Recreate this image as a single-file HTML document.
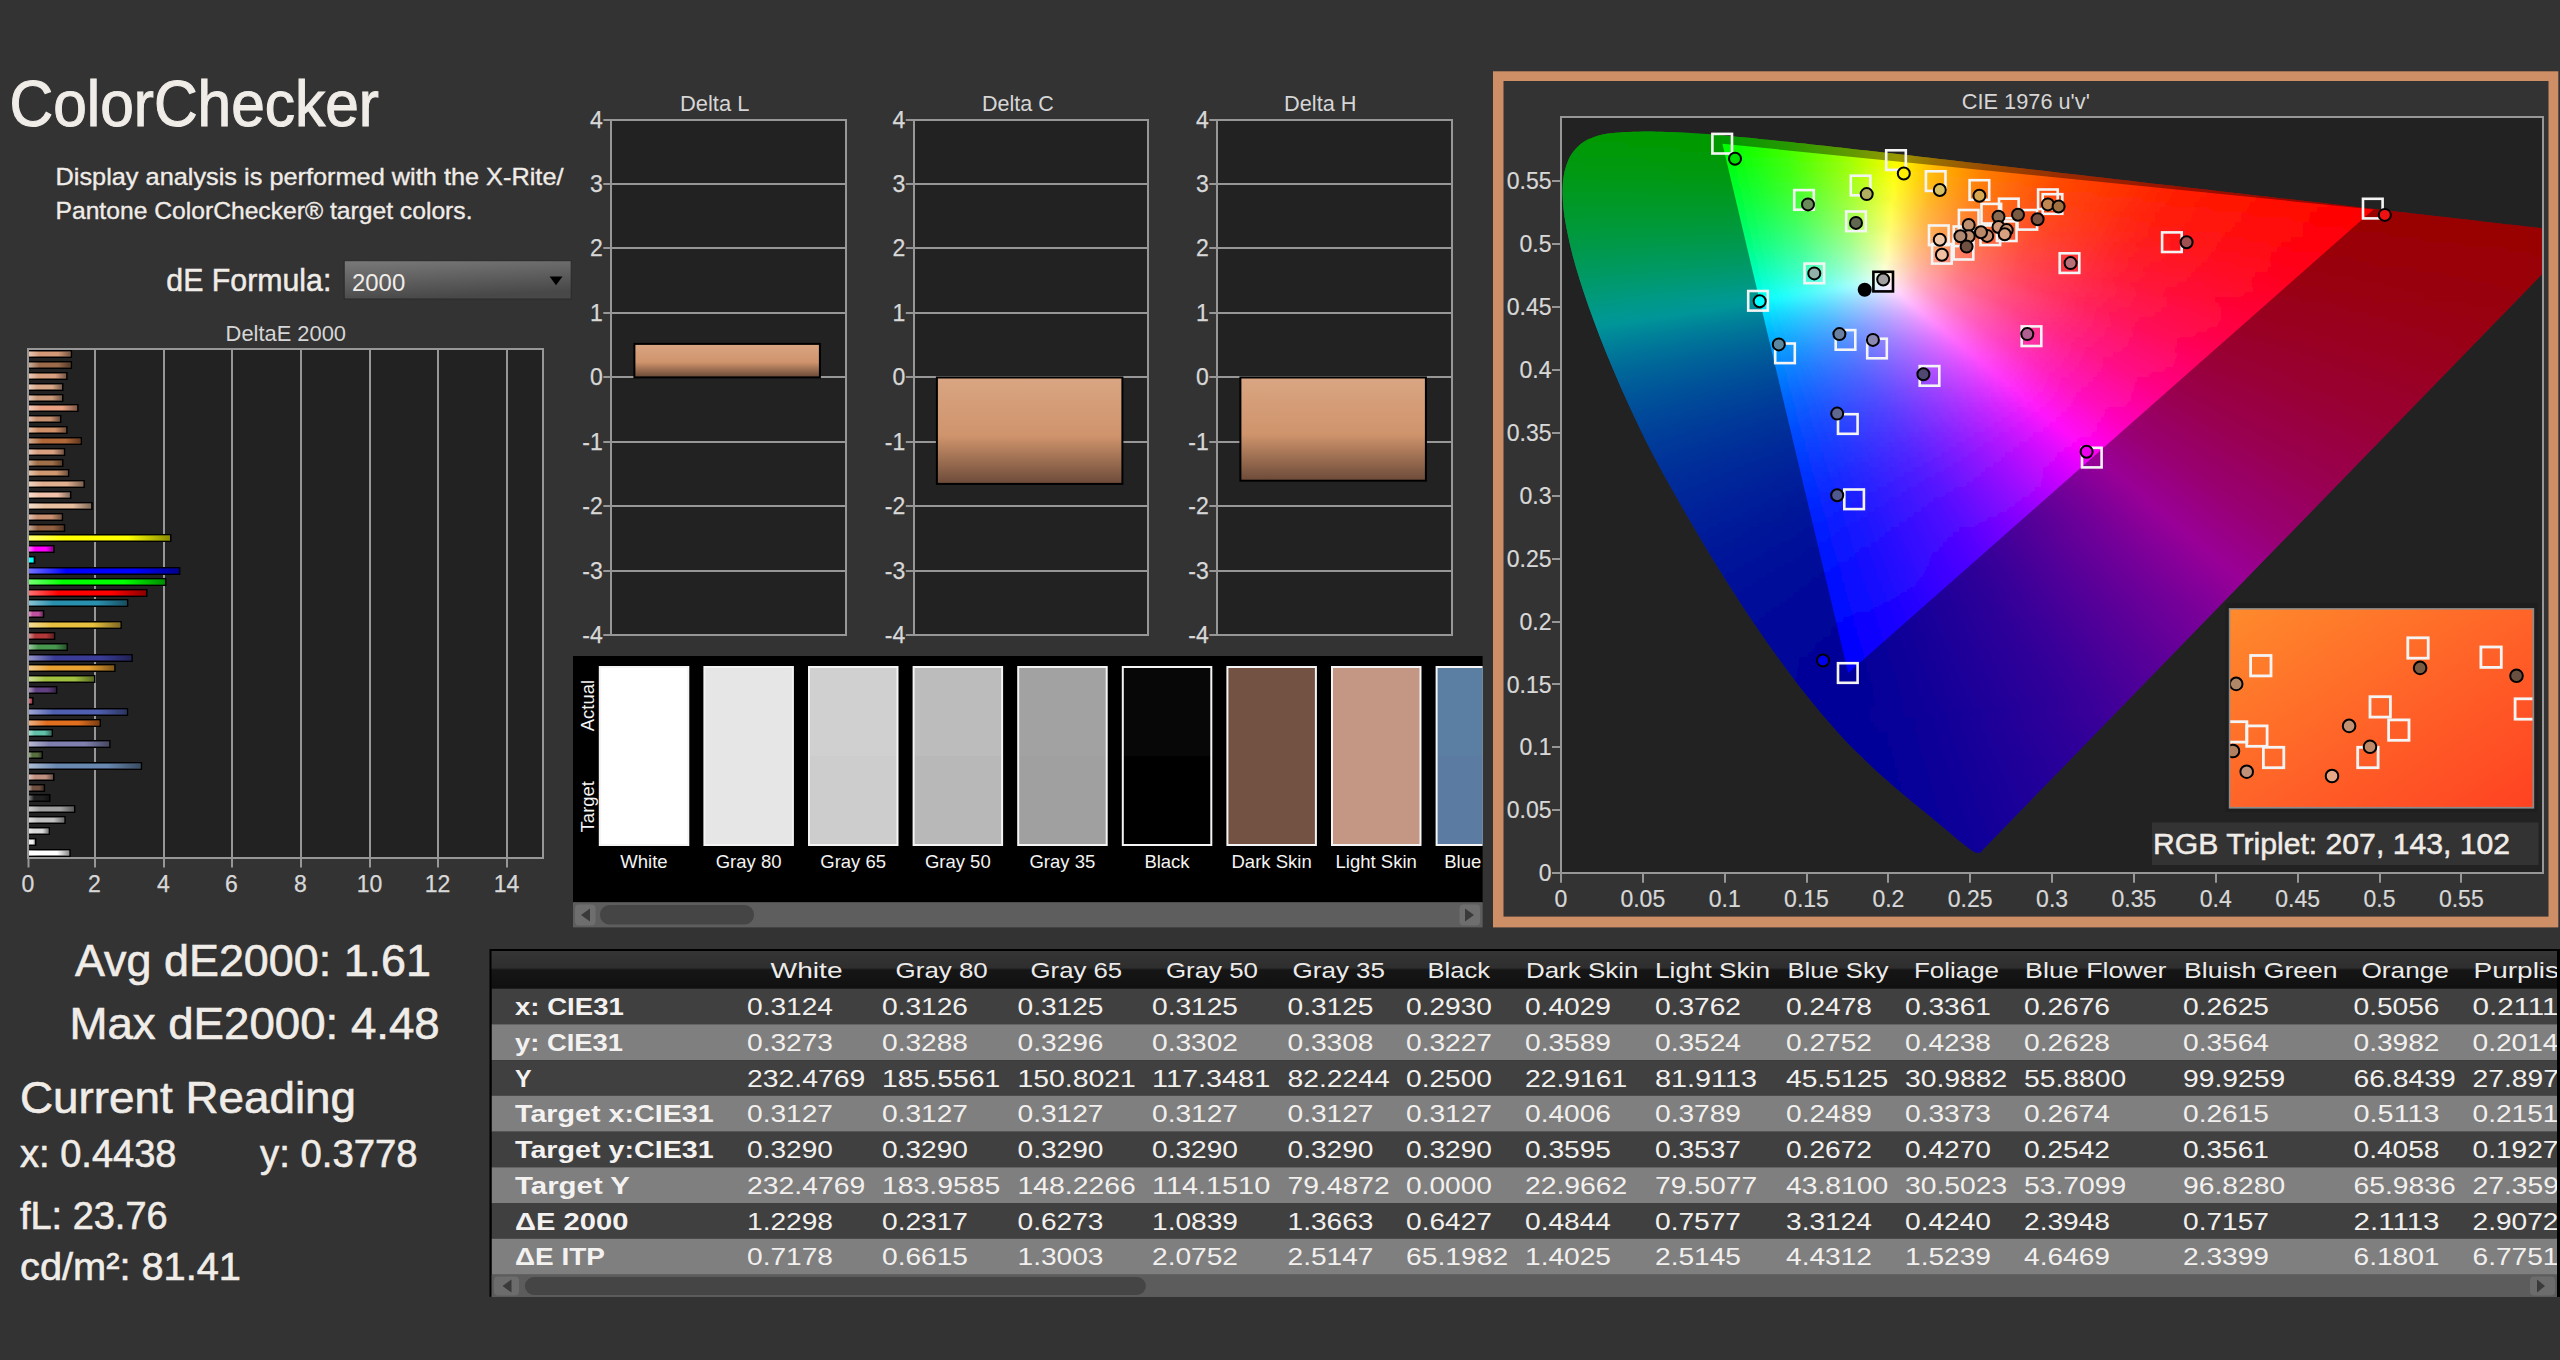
<!DOCTYPE html><html><head><meta charset="utf-8"><style>html,body{margin:0;padding:0;background:#333;overflow:hidden}svg{display:block}text{font-family:"Liberation Sans",sans-serif}</style></head><body>
<svg width="2560" height="1360" viewBox="0 0 2560 1360">
<defs>
<linearGradient id="dd" x1="0" y1="0" x2="0.3" y2="1"><stop offset="0" stop-color="#7a7a7a"/><stop offset="1" stop-color="#484848"/></linearGradient>
<linearGradient id="barv" x1="0" y1="0" x2="0" y2="1"><stop offset="0" stop-color="#d9a582"/><stop offset="0.55" stop-color="#cf946c"/><stop offset="1" stop-color="#6e4c3a"/></linearGradient>
<linearGradient id="hdr" x1="0" y1="0" x2="0" y2="1"><stop offset="0" stop-color="#353535"/><stop offset="0.45" stop-color="#2e2e2e"/><stop offset="0.5" stop-color="#161616"/><stop offset="1" stop-color="#101010"/></linearGradient>
</defs>
<rect x="0.0" y="0.0" width="2560.0" height="1360.0" fill="#333333"/>
<text x="9.5" y="125.6" font-size="64" fill="#f0ece8" textLength="369.5" lengthAdjust="spacingAndGlyphs" stroke="#f0ece8" stroke-width="1.1">ColorChecker</text>
<text x="55.5" y="185.0" font-size="24.5" fill="#f0ece8" textLength="508.0" lengthAdjust="spacingAndGlyphs" stroke="#f0ece8" stroke-width="0.35">Display analysis is performed with the X-Rite/</text>
<text x="55.5" y="218.6" font-size="24.5" fill="#f0ece8" textLength="417.0" lengthAdjust="spacingAndGlyphs" stroke="#f0ece8" stroke-width="0.35">Pantone ColorChecker® target colors.</text>
<text x="166.3" y="291.3" font-size="32" fill="#f0ece8" textLength="165.0" lengthAdjust="spacingAndGlyphs" stroke="#f0ece8" stroke-width="0.5">dE Formula:</text>
<rect x="344.2" y="260.7" width="227.0" height="38.3" fill="url(#dd)" stroke="#2a2a2a" stroke-width="1"/>
<text x="352.0" y="291.3" font-size="24.5" fill="#f0ece8" textLength="53.2" lengthAdjust="spacingAndGlyphs">2000</text>
<polygon points="549.6,276.6 562.5,276.6 556,285.2" fill="#000"/>
<text x="225.6" y="340.6" font-size="21.5" fill="#d6d6d6" textLength="120.4" lengthAdjust="spacingAndGlyphs">DeltaE 2000</text>
<rect x="28.5" y="349.0" width="514.2" height="509.0" fill="#222222"/>
<line x1="95.0" y1="349.0" x2="95.0" y2="858.0" stroke="#979797" stroke-width="2"/>
<line x1="164.0" y1="349.0" x2="164.0" y2="858.0" stroke="#979797" stroke-width="2"/>
<line x1="232.0" y1="349.0" x2="232.0" y2="858.0" stroke="#979797" stroke-width="2"/>
<line x1="301.0" y1="349.0" x2="301.0" y2="858.0" stroke="#979797" stroke-width="2"/>
<line x1="370.0" y1="349.0" x2="370.0" y2="858.0" stroke="#979797" stroke-width="2"/>
<line x1="438.0" y1="349.0" x2="438.0" y2="858.0" stroke="#979797" stroke-width="2"/>
<line x1="507.0" y1="349.0" x2="507.0" y2="858.0" stroke="#979797" stroke-width="2"/>
<line x1="28.5" y1="858.0" x2="28.5" y2="867.5" stroke="#979797" stroke-width="2"/>
<text x="28.0" y="891.9" font-size="23" text-anchor="middle" fill="#d8d8d8" stroke="#d8d8d8" stroke-width="0.25">0</text>
<line x1="95.0" y1="858.0" x2="95.0" y2="867.5" stroke="#979797" stroke-width="2"/>
<text x="94.5" y="891.9" font-size="23" text-anchor="middle" fill="#d8d8d8" stroke="#d8d8d8" stroke-width="0.25">2</text>
<line x1="164.0" y1="858.0" x2="164.0" y2="867.5" stroke="#979797" stroke-width="2"/>
<text x="163.5" y="891.9" font-size="23" text-anchor="middle" fill="#d8d8d8" stroke="#d8d8d8" stroke-width="0.25">4</text>
<line x1="232.0" y1="858.0" x2="232.0" y2="867.5" stroke="#979797" stroke-width="2"/>
<text x="231.5" y="891.9" font-size="23" text-anchor="middle" fill="#d8d8d8" stroke="#d8d8d8" stroke-width="0.25">6</text>
<line x1="301.0" y1="858.0" x2="301.0" y2="867.5" stroke="#979797" stroke-width="2"/>
<text x="300.5" y="891.9" font-size="23" text-anchor="middle" fill="#d8d8d8" stroke="#d8d8d8" stroke-width="0.25">8</text>
<line x1="370.0" y1="858.0" x2="370.0" y2="867.5" stroke="#979797" stroke-width="2"/>
<text x="369.5" y="891.9" font-size="23" text-anchor="middle" fill="#d8d8d8" stroke="#d8d8d8" stroke-width="0.25">10</text>
<line x1="438.0" y1="858.0" x2="438.0" y2="867.5" stroke="#979797" stroke-width="2"/>
<text x="437.5" y="891.9" font-size="23" text-anchor="middle" fill="#d8d8d8" stroke="#d8d8d8" stroke-width="0.25">12</text>
<line x1="507.0" y1="858.0" x2="507.0" y2="867.5" stroke="#979797" stroke-width="2"/>
<text x="506.5" y="891.9" font-size="23" text-anchor="middle" fill="#d8d8d8" stroke="#d8d8d8" stroke-width="0.25">14</text>
<linearGradient id="bsh" x1="0" y1="0" x2="1" y2="0"><stop offset="0" stop-color="#fff" stop-opacity="0.45"/><stop offset="0.25" stop-color="#fff" stop-opacity="0"/><stop offset="0.7" stop-color="#000" stop-opacity="0"/><stop offset="1" stop-color="#000" stop-opacity="0.45"/></linearGradient>
<rect x="28.5" y="350.0" width="43.6" height="8.0" fill="#000"/>
<rect x="29.0" y="351.5" width="41.6" height="5.0" fill="#d49a78"/>
<rect x="29.0" y="351.5" width="41.6" height="5.0" fill="url(#bsh)"/>
<rect x="28.5" y="361.0" width="43.6" height="8.0" fill="#000"/>
<rect x="29.0" y="362.5" width="41.6" height="5.0" fill="#9a6a4a"/>
<rect x="29.0" y="362.5" width="41.6" height="5.0" fill="url(#bsh)"/>
<rect x="28.5" y="372.0" width="39.1" height="8.0" fill="#000"/>
<rect x="29.0" y="373.5" width="37.1" height="5.0" fill="#d8a080"/>
<rect x="29.0" y="373.5" width="37.1" height="5.0" fill="url(#bsh)"/>
<rect x="28.5" y="383.0" width="35.0" height="8.0" fill="#000"/>
<rect x="29.0" y="384.5" width="33.0" height="5.0" fill="#d8a888"/>
<rect x="29.0" y="384.5" width="33.0" height="5.0" fill="url(#bsh)"/>
<rect x="28.5" y="394.0" width="35.0" height="8.0" fill="#000"/>
<rect x="29.0" y="395.5" width="33.0" height="5.0" fill="#c89878"/>
<rect x="29.0" y="395.5" width="33.0" height="5.0" fill="url(#bsh)"/>
<rect x="28.5" y="404.0" width="50.1" height="8.0" fill="#000"/>
<rect x="29.0" y="405.5" width="48.1" height="5.0" fill="#e8a080"/>
<rect x="29.0" y="405.5" width="48.1" height="5.0" fill="url(#bsh)"/>
<rect x="28.5" y="415.0" width="32.9" height="8.0" fill="#000"/>
<rect x="29.0" y="416.5" width="30.9" height="5.0" fill="#c89070"/>
<rect x="29.0" y="416.5" width="30.9" height="5.0" fill="url(#bsh)"/>
<rect x="28.5" y="426.0" width="39.1" height="8.0" fill="#000"/>
<rect x="29.0" y="427.5" width="37.1" height="5.0" fill="#d09068"/>
<rect x="29.0" y="427.5" width="37.1" height="5.0" fill="url(#bsh)"/>
<rect x="28.5" y="437.0" width="53.5" height="8.0" fill="#000"/>
<rect x="29.0" y="438.5" width="51.5" height="5.0" fill="#b06838"/>
<rect x="29.0" y="438.5" width="51.5" height="5.0" fill="url(#bsh)"/>
<rect x="28.5" y="448.0" width="36.7" height="8.0" fill="#000"/>
<rect x="29.0" y="449.5" width="34.7" height="5.0" fill="#d8a080"/>
<rect x="29.0" y="449.5" width="34.7" height="5.0" fill="url(#bsh)"/>
<rect x="28.5" y="459.0" width="35.0" height="8.0" fill="#000"/>
<rect x="29.0" y="460.5" width="33.0" height="5.0" fill="#a07048"/>
<rect x="29.0" y="460.5" width="33.0" height="5.0" fill="url(#bsh)"/>
<rect x="28.5" y="469.0" width="40.8" height="8.0" fill="#000"/>
<rect x="29.0" y="470.5" width="38.8" height="5.0" fill="#d09870"/>
<rect x="29.0" y="470.5" width="38.8" height="5.0" fill="url(#bsh)"/>
<rect x="28.5" y="480.0" width="56.3" height="8.0" fill="#000"/>
<rect x="29.0" y="481.5" width="54.3" height="5.0" fill="#e0b090"/>
<rect x="29.0" y="481.5" width="54.3" height="5.0" fill="url(#bsh)"/>
<rect x="28.5" y="491.0" width="42.9" height="8.0" fill="#000"/>
<rect x="29.0" y="492.5" width="40.9" height="5.0" fill="#f0c0a8"/>
<rect x="29.0" y="492.5" width="40.9" height="5.0" fill="url(#bsh)"/>
<rect x="28.5" y="502.0" width="64.1" height="8.0" fill="#000"/>
<rect x="29.0" y="503.5" width="62.1" height="5.0" fill="#e8c0a0"/>
<rect x="29.0" y="503.5" width="62.1" height="5.0" fill="url(#bsh)"/>
<rect x="28.5" y="513.0" width="34.6" height="8.0" fill="#000"/>
<rect x="29.0" y="514.5" width="32.6" height="5.0" fill="#c89070"/>
<rect x="29.0" y="514.5" width="32.6" height="5.0" fill="url(#bsh)"/>
<rect x="28.5" y="524.0" width="36.7" height="8.0" fill="#000"/>
<rect x="29.0" y="525.5" width="34.7" height="5.0" fill="#906040"/>
<rect x="29.0" y="525.5" width="34.7" height="5.0" fill="url(#bsh)"/>
<rect x="28.5" y="534.0" width="143.0" height="8.0" fill="#000"/>
<rect x="29.0" y="535.5" width="141.0" height="5.0" fill="#ffff00"/>
<rect x="29.0" y="535.5" width="141.0" height="5.0" fill="url(#bsh)"/>
<rect x="28.5" y="545.0" width="26.1" height="8.0" fill="#000"/>
<rect x="29.0" y="546.5" width="24.1" height="5.0" fill="#ff00ff"/>
<rect x="29.0" y="546.5" width="24.1" height="5.0" fill="url(#bsh)"/>
<rect x="28.5" y="556.0" width="6.9" height="8.0" fill="#000"/>
<rect x="29.0" y="557.5" width="4.9" height="5.0" fill="#00ffff"/>
<rect x="29.0" y="557.5" width="4.9" height="5.0" fill="url(#bsh)"/>
<rect x="28.5" y="567.0" width="151.9" height="8.0" fill="#000"/>
<rect x="29.0" y="568.5" width="149.9" height="5.0" fill="#0000ff"/>
<rect x="29.0" y="568.5" width="149.9" height="5.0" fill="url(#bsh)"/>
<rect x="28.5" y="578.0" width="137.9" height="8.0" fill="#000"/>
<rect x="29.0" y="579.5" width="135.9" height="5.0" fill="#00ff00"/>
<rect x="29.0" y="579.5" width="135.9" height="5.0" fill="url(#bsh)"/>
<rect x="28.5" y="589.0" width="119.0" height="8.0" fill="#000"/>
<rect x="29.0" y="590.5" width="117.0" height="5.0" fill="#ff0000"/>
<rect x="29.0" y="590.5" width="117.0" height="5.0" fill="url(#bsh)"/>
<rect x="28.5" y="599.0" width="99.8" height="8.0" fill="#000"/>
<rect x="29.0" y="600.5" width="97.8" height="5.0" fill="#2a90b0"/>
<rect x="29.0" y="600.5" width="97.8" height="5.0" fill="url(#bsh)"/>
<rect x="28.5" y="610.0" width="15.8" height="8.0" fill="#000"/>
<rect x="29.0" y="611.5" width="13.8" height="5.0" fill="#c050a0"/>
<rect x="29.0" y="611.5" width="13.8" height="5.0" fill="url(#bsh)"/>
<rect x="28.5" y="621.0" width="93.3" height="8.0" fill="#000"/>
<rect x="29.0" y="622.5" width="91.3" height="5.0" fill="#e8c040"/>
<rect x="29.0" y="622.5" width="91.3" height="5.0" fill="url(#bsh)"/>
<rect x="28.5" y="632.0" width="26.8" height="8.0" fill="#000"/>
<rect x="29.0" y="633.5" width="24.8" height="5.0" fill="#b03838"/>
<rect x="29.0" y="633.5" width="24.8" height="5.0" fill="url(#bsh)"/>
<rect x="28.5" y="643.0" width="39.4" height="8.0" fill="#000"/>
<rect x="29.0" y="644.5" width="37.4" height="5.0" fill="#489850"/>
<rect x="29.0" y="644.5" width="37.4" height="5.0" fill="url(#bsh)"/>
<rect x="28.5" y="654.0" width="104.3" height="8.0" fill="#000"/>
<rect x="29.0" y="655.5" width="102.3" height="5.0" fill="#3a3c98"/>
<rect x="29.0" y="655.5" width="102.3" height="5.0" fill="url(#bsh)"/>
<rect x="28.5" y="664.0" width="87.1" height="8.0" fill="#000"/>
<rect x="29.0" y="665.5" width="85.1" height="5.0" fill="#e8a030"/>
<rect x="29.0" y="665.5" width="85.1" height="5.0" fill="url(#bsh)"/>
<rect x="28.5" y="675.0" width="66.9" height="8.0" fill="#000"/>
<rect x="29.0" y="676.5" width="64.9" height="5.0" fill="#a0c040"/>
<rect x="29.0" y="676.5" width="64.9" height="5.0" fill="url(#bsh)"/>
<rect x="28.5" y="686.0" width="28.8" height="8.0" fill="#000"/>
<rect x="29.0" y="687.5" width="26.8" height="5.0" fill="#604080"/>
<rect x="29.0" y="687.5" width="26.8" height="5.0" fill="url(#bsh)"/>
<rect x="28.5" y="697.0" width="5.1" height="8.0" fill="#000"/>
<rect x="29.0" y="698.5" width="3.1" height="5.0" fill="#c05060"/>
<rect x="29.0" y="698.5" width="3.1" height="5.0" fill="url(#bsh)"/>
<rect x="28.5" y="708.0" width="99.7" height="8.0" fill="#000"/>
<rect x="29.0" y="709.5" width="97.7" height="5.0" fill="#5060b0"/>
<rect x="29.0" y="709.5" width="97.7" height="5.0" fill="url(#bsh)"/>
<rect x="28.5" y="719.0" width="72.4" height="8.0" fill="#000"/>
<rect x="29.0" y="720.5" width="70.4" height="5.0" fill="#e07020"/>
<rect x="29.0" y="720.5" width="70.4" height="5.0" fill="url(#bsh)"/>
<rect x="28.5" y="729.0" width="24.5" height="8.0" fill="#000"/>
<rect x="29.0" y="730.5" width="22.5" height="5.0" fill="#60c0a8"/>
<rect x="29.0" y="730.5" width="22.5" height="5.0" fill="url(#bsh)"/>
<rect x="28.5" y="740.0" width="82.1" height="8.0" fill="#000"/>
<rect x="29.0" y="741.5" width="80.1" height="5.0" fill="#8080b0"/>
<rect x="29.0" y="741.5" width="80.1" height="5.0" fill="url(#bsh)"/>
<rect x="28.5" y="751.0" width="14.5" height="8.0" fill="#000"/>
<rect x="29.0" y="752.5" width="12.5" height="5.0" fill="#587040"/>
<rect x="29.0" y="752.5" width="12.5" height="5.0" fill="url(#bsh)"/>
<rect x="28.5" y="762.0" width="113.6" height="8.0" fill="#000"/>
<rect x="29.0" y="763.5" width="111.6" height="5.0" fill="#6888b0"/>
<rect x="29.0" y="763.5" width="111.6" height="5.0" fill="url(#bsh)"/>
<rect x="28.5" y="773.0" width="26.0" height="8.0" fill="#000"/>
<rect x="29.0" y="774.5" width="24.0" height="5.0" fill="#c09080"/>
<rect x="29.0" y="774.5" width="24.0" height="5.0" fill="url(#bsh)"/>
<rect x="28.5" y="784.0" width="16.6" height="8.0" fill="#000"/>
<rect x="29.0" y="785.5" width="14.6" height="5.0" fill="#705040"/>
<rect x="29.0" y="785.5" width="14.6" height="5.0" fill="url(#bsh)"/>
<rect x="28.5" y="794.0" width="22.0" height="8.0" fill="#000"/>
<rect x="29.0" y="795.5" width="20.0" height="5.0" fill="#202020"/>
<rect x="29.0" y="795.5" width="20.0" height="5.0" fill="url(#bsh)"/>
<rect x="28.5" y="805.0" width="46.9" height="8.0" fill="#000"/>
<rect x="29.0" y="806.5" width="44.9" height="5.0" fill="#a0a0a0"/>
<rect x="29.0" y="806.5" width="44.9" height="5.0" fill="url(#bsh)"/>
<rect x="28.5" y="816.0" width="37.2" height="8.0" fill="#000"/>
<rect x="29.0" y="817.5" width="35.2" height="5.0" fill="#c0c0c0"/>
<rect x="29.0" y="817.5" width="35.2" height="5.0" fill="url(#bsh)"/>
<rect x="28.5" y="827.0" width="21.5" height="8.0" fill="#000"/>
<rect x="29.0" y="828.5" width="19.5" height="5.0" fill="#d8d8d8"/>
<rect x="29.0" y="828.5" width="19.5" height="5.0" fill="url(#bsh)"/>
<rect x="28.5" y="838.0" width="7.9" height="8.0" fill="#000"/>
<rect x="29.0" y="839.5" width="5.9" height="5.0" fill="#f0f0f0"/>
<rect x="29.0" y="839.5" width="5.9" height="5.0" fill="url(#bsh)"/>
<rect x="28.5" y="849.0" width="42.2" height="8.0" fill="#000"/>
<rect x="29.0" y="850.5" width="40.2" height="5.0" fill="#ffffff"/>
<rect x="29.0" y="850.5" width="40.2" height="5.0" fill="url(#bsh)"/>
<rect x="28" y="349" width="515" height="509" fill="none" stroke="#979797" stroke-width="2"/>
<text x="714.7" y="111.2" font-size="22.5" text-anchor="middle" fill="#d6d6d6" textLength="69.4" lengthAdjust="spacingAndGlyphs">Delta L</text>
<rect x="611.3" y="119.5" width="234.7" height="515.9" fill="#222222"/>
<line x1="603.3" y1="120.0" x2="846.0" y2="120.0" stroke="#979797" stroke-width="2"/>
<text x="602.8" y="127.9" font-size="23" text-anchor="end" fill="#d8d8d8" stroke="#d8d8d8" stroke-width="0.25">4</text>
<line x1="603.3" y1="184.0" x2="846.0" y2="184.0" stroke="#979797" stroke-width="2"/>
<text x="602.8" y="191.9" font-size="23" text-anchor="end" fill="#d8d8d8" stroke="#d8d8d8" stroke-width="0.25">3</text>
<line x1="603.3" y1="248.0" x2="846.0" y2="248.0" stroke="#979797" stroke-width="2"/>
<text x="602.8" y="255.9" font-size="23" text-anchor="end" fill="#d8d8d8" stroke="#d8d8d8" stroke-width="0.25">2</text>
<line x1="603.3" y1="313.0" x2="846.0" y2="313.0" stroke="#979797" stroke-width="2"/>
<text x="602.8" y="320.9" font-size="23" text-anchor="end" fill="#d8d8d8" stroke="#d8d8d8" stroke-width="0.25">1</text>
<line x1="603.3" y1="377.0" x2="846.0" y2="377.0" stroke="#979797" stroke-width="2"/>
<text x="602.8" y="384.9" font-size="23" text-anchor="end" fill="#d8d8d8" stroke="#d8d8d8" stroke-width="0.25">0</text>
<line x1="603.3" y1="442.0" x2="846.0" y2="442.0" stroke="#979797" stroke-width="2"/>
<text x="602.8" y="449.9" font-size="23" text-anchor="end" fill="#d8d8d8" stroke="#d8d8d8" stroke-width="0.25">-1</text>
<line x1="603.3" y1="506.0" x2="846.0" y2="506.0" stroke="#979797" stroke-width="2"/>
<text x="602.8" y="513.9" font-size="23" text-anchor="end" fill="#d8d8d8" stroke="#d8d8d8" stroke-width="0.25">-2</text>
<line x1="603.3" y1="571.0" x2="846.0" y2="571.0" stroke="#979797" stroke-width="2"/>
<text x="602.8" y="578.9" font-size="23" text-anchor="end" fill="#d8d8d8" stroke="#d8d8d8" stroke-width="0.25">-3</text>
<line x1="603.3" y1="635.0" x2="846.0" y2="635.0" stroke="#979797" stroke-width="2"/>
<text x="602.8" y="642.9" font-size="23" text-anchor="end" fill="#d8d8d8" stroke="#d8d8d8" stroke-width="0.25">-4</text>
<rect x="633.4" y="342.9" width="187.5" height="35.5" fill="#000"/>
<rect x="635.4" y="344.9" width="183.5" height="31.5" fill="url(#barv)"/>
<rect x="611" y="120" width="235" height="515" fill="none" stroke="#979797" stroke-width="2"/>
<text x="1017.9" y="111.2" font-size="22.5" text-anchor="middle" fill="#d6d6d6" textLength="71.7" lengthAdjust="spacingAndGlyphs">Delta C</text>
<rect x="913.8" y="119.5" width="234.7" height="515.9" fill="#222222"/>
<line x1="905.8" y1="120.0" x2="1148.5" y2="120.0" stroke="#979797" stroke-width="2"/>
<text x="905.2" y="127.9" font-size="23" text-anchor="end" fill="#d8d8d8" stroke="#d8d8d8" stroke-width="0.25">4</text>
<line x1="905.8" y1="184.0" x2="1148.5" y2="184.0" stroke="#979797" stroke-width="2"/>
<text x="905.2" y="191.9" font-size="23" text-anchor="end" fill="#d8d8d8" stroke="#d8d8d8" stroke-width="0.25">3</text>
<line x1="905.8" y1="248.0" x2="1148.5" y2="248.0" stroke="#979797" stroke-width="2"/>
<text x="905.2" y="255.9" font-size="23" text-anchor="end" fill="#d8d8d8" stroke="#d8d8d8" stroke-width="0.25">2</text>
<line x1="905.8" y1="313.0" x2="1148.5" y2="313.0" stroke="#979797" stroke-width="2"/>
<text x="905.2" y="320.9" font-size="23" text-anchor="end" fill="#d8d8d8" stroke="#d8d8d8" stroke-width="0.25">1</text>
<line x1="905.8" y1="377.0" x2="1148.5" y2="377.0" stroke="#979797" stroke-width="2"/>
<text x="905.2" y="384.9" font-size="23" text-anchor="end" fill="#d8d8d8" stroke="#d8d8d8" stroke-width="0.25">0</text>
<line x1="905.8" y1="442.0" x2="1148.5" y2="442.0" stroke="#979797" stroke-width="2"/>
<text x="905.2" y="449.9" font-size="23" text-anchor="end" fill="#d8d8d8" stroke="#d8d8d8" stroke-width="0.25">-1</text>
<line x1="905.8" y1="506.0" x2="1148.5" y2="506.0" stroke="#979797" stroke-width="2"/>
<text x="905.2" y="513.9" font-size="23" text-anchor="end" fill="#d8d8d8" stroke="#d8d8d8" stroke-width="0.25">-2</text>
<line x1="905.8" y1="571.0" x2="1148.5" y2="571.0" stroke="#979797" stroke-width="2"/>
<text x="905.2" y="578.9" font-size="23" text-anchor="end" fill="#d8d8d8" stroke="#d8d8d8" stroke-width="0.25">-3</text>
<line x1="905.8" y1="635.0" x2="1148.5" y2="635.0" stroke="#979797" stroke-width="2"/>
<text x="905.2" y="642.9" font-size="23" text-anchor="end" fill="#d8d8d8" stroke="#d8d8d8" stroke-width="0.25">-4</text>
<rect x="935.9" y="376.5" width="187.5" height="108.4" fill="#000"/>
<rect x="937.9" y="378.5" width="183.5" height="104.4" fill="url(#barv)"/>
<rect x="914" y="120" width="234" height="515" fill="none" stroke="#979797" stroke-width="2"/>
<text x="1320.3" y="111.2" font-size="22.5" text-anchor="middle" fill="#d6d6d6" textLength="72.5" lengthAdjust="spacingAndGlyphs">Delta H</text>
<rect x="1217.3" y="119.5" width="234.7" height="515.9" fill="#222222"/>
<line x1="1209.3" y1="120.0" x2="1452.0" y2="120.0" stroke="#979797" stroke-width="2"/>
<text x="1208.8" y="127.9" font-size="23" text-anchor="end" fill="#d8d8d8" stroke="#d8d8d8" stroke-width="0.25">4</text>
<line x1="1209.3" y1="184.0" x2="1452.0" y2="184.0" stroke="#979797" stroke-width="2"/>
<text x="1208.8" y="191.9" font-size="23" text-anchor="end" fill="#d8d8d8" stroke="#d8d8d8" stroke-width="0.25">3</text>
<line x1="1209.3" y1="248.0" x2="1452.0" y2="248.0" stroke="#979797" stroke-width="2"/>
<text x="1208.8" y="255.9" font-size="23" text-anchor="end" fill="#d8d8d8" stroke="#d8d8d8" stroke-width="0.25">2</text>
<line x1="1209.3" y1="313.0" x2="1452.0" y2="313.0" stroke="#979797" stroke-width="2"/>
<text x="1208.8" y="320.9" font-size="23" text-anchor="end" fill="#d8d8d8" stroke="#d8d8d8" stroke-width="0.25">1</text>
<line x1="1209.3" y1="377.0" x2="1452.0" y2="377.0" stroke="#979797" stroke-width="2"/>
<text x="1208.8" y="384.9" font-size="23" text-anchor="end" fill="#d8d8d8" stroke="#d8d8d8" stroke-width="0.25">0</text>
<line x1="1209.3" y1="442.0" x2="1452.0" y2="442.0" stroke="#979797" stroke-width="2"/>
<text x="1208.8" y="449.9" font-size="23" text-anchor="end" fill="#d8d8d8" stroke="#d8d8d8" stroke-width="0.25">-1</text>
<line x1="1209.3" y1="506.0" x2="1452.0" y2="506.0" stroke="#979797" stroke-width="2"/>
<text x="1208.8" y="513.9" font-size="23" text-anchor="end" fill="#d8d8d8" stroke="#d8d8d8" stroke-width="0.25">-2</text>
<line x1="1209.3" y1="571.0" x2="1452.0" y2="571.0" stroke="#979797" stroke-width="2"/>
<text x="1208.8" y="578.9" font-size="23" text-anchor="end" fill="#d8d8d8" stroke="#d8d8d8" stroke-width="0.25">-3</text>
<line x1="1209.3" y1="635.0" x2="1452.0" y2="635.0" stroke="#979797" stroke-width="2"/>
<text x="1208.8" y="642.9" font-size="23" text-anchor="end" fill="#d8d8d8" stroke="#d8d8d8" stroke-width="0.25">-4</text>
<rect x="1239.4" y="376.5" width="187.5" height="105.2" fill="#000"/>
<rect x="1241.4" y="378.5" width="183.5" height="101.2" fill="url(#barv)"/>
<rect x="1217" y="120" width="235" height="515" fill="none" stroke="#979797" stroke-width="2"/>
<rect x="573.0" y="656.0" width="909.6" height="246.5" fill="#000"/>
<clipPath id="swclip"><rect x="573" y="656" width="909.6" height="246.5"/></clipPath>
<g clip-path="url(#swclip)">
<rect x="598.8" y="666.0" width="90.5" height="180.0" fill="#f4f4f4"/>
<rect x="600.8" y="668.0" width="86.5" height="88.0" fill="#ffffff"/>
<rect x="600.8" y="756.0" width="86.5" height="88.0" fill="#ffffff"/>
<text x="644.0" y="868.2" font-size="18.5" text-anchor="middle" fill="#f4f4f4">White</text>
<rect x="703.4" y="666.0" width="90.5" height="180.0" fill="#f4f4f4"/>
<rect x="705.4" y="668.0" width="86.5" height="88.0" fill="#e6e6e6"/>
<rect x="705.4" y="756.0" width="86.5" height="88.0" fill="#e6e6e6"/>
<text x="748.6" y="868.2" font-size="18.5" text-anchor="middle" fill="#f4f4f4">Gray 80</text>
<rect x="808.0" y="666.0" width="90.5" height="180.0" fill="#f4f4f4"/>
<rect x="810.0" y="668.0" width="86.5" height="88.0" fill="#d0d0d0"/>
<rect x="810.0" y="756.0" width="86.5" height="88.0" fill="#cdcdcd"/>
<text x="853.2" y="868.2" font-size="18.5" text-anchor="middle" fill="#f4f4f4">Gray 65</text>
<rect x="912.6" y="666.0" width="90.5" height="180.0" fill="#f4f4f4"/>
<rect x="914.6" y="668.0" width="86.5" height="88.0" fill="#bcbcbc"/>
<rect x="914.6" y="756.0" width="86.5" height="88.0" fill="#b8b8b8"/>
<text x="957.8" y="868.2" font-size="18.5" text-anchor="middle" fill="#f4f4f4">Gray 50</text>
<rect x="1017.2" y="666.0" width="90.5" height="180.0" fill="#f4f4f4"/>
<rect x="1019.2" y="668.0" width="86.5" height="88.0" fill="#a2a2a2"/>
<rect x="1019.2" y="756.0" width="86.5" height="88.0" fill="#a0a0a0"/>
<text x="1062.4" y="868.2" font-size="18.5" text-anchor="middle" fill="#f4f4f4">Gray 35</text>
<rect x="1121.8" y="666.0" width="90.5" height="180.0" fill="#f4f4f4"/>
<rect x="1123.8" y="668.0" width="86.5" height="88.0" fill="#070707"/>
<rect x="1123.8" y="756.0" width="86.5" height="88.0" fill="#000000"/>
<text x="1167.0" y="868.2" font-size="18.5" text-anchor="middle" fill="#f4f4f4">Black</text>
<rect x="1226.4" y="666.0" width="90.5" height="180.0" fill="#f4f4f4"/>
<rect x="1228.4" y="668.0" width="86.5" height="88.0" fill="#735243"/>
<rect x="1228.4" y="756.0" width="86.5" height="88.0" fill="#735243"/>
<text x="1271.6" y="868.2" font-size="18.5" text-anchor="middle" fill="#f4f4f4">Dark Skin</text>
<rect x="1331.0" y="666.0" width="90.5" height="180.0" fill="#f4f4f4"/>
<rect x="1333.0" y="668.0" width="86.5" height="88.0" fill="#c49785"/>
<rect x="1333.0" y="756.0" width="86.5" height="88.0" fill="#c49684"/>
<text x="1376.2" y="868.2" font-size="18.5" text-anchor="middle" fill="#f4f4f4">Light Skin</text>
<rect x="1435.6" y="666.0" width="90.5" height="180.0" fill="#f4f4f4"/>
<rect x="1437.6" y="668.0" width="86.5" height="88.0" fill="#5b7fa2"/>
<rect x="1437.6" y="756.0" width="86.5" height="88.0" fill="#5c7ba2"/>
<text x="1480.8" y="868.2" font-size="18.5" text-anchor="middle" fill="#f4f4f4">Blue Sky</text>
</g>
<text x="0" y="0" font-size="18.5" fill="#f4f4f4" transform="translate(593.5,705.6) rotate(-90)" text-anchor="middle">Actual</text>
<text x="0" y="0" font-size="18.5" fill="#f4f4f4" transform="translate(593.5,806.7) rotate(-90)" text-anchor="middle">Target</text>
<rect x="573.0" y="902.2" width="909.6" height="25.2" fill="#5e5e5e"/>
<rect x="600" y="905" width="154" height="19.5" rx="9.5" fill="#454545"/>
<rect x="575" y="904.5" width="20.5" height="21" rx="4" fill="#6e6e6e"/>
<polygon points="581,915 590,908.5 590,921.5" fill="#3a3a3a"/>
<rect x="1459.5" y="904.5" width="20.5" height="21" rx="4" fill="#6e6e6e"/>
<polygon points="1474,915 1465,908.5 1465,921.5" fill="#3a3a3a"/>
<rect x="1493.0" y="71.3" width="1065.3" height="856.1" fill="#cf8f66"/>
<rect x="1503.5" y="81.0" width="1045.0" height="835.6" fill="#333333"/>
<text x="2025.8" y="108.8" font-size="22.5" text-anchor="middle" fill="#d6d6d6" textLength="128.0" lengthAdjust="spacingAndGlyphs">CIE 1976 u'v'</text>
<rect x="1561.0" y="117.0" width="982.3" height="756.2" fill="#222222"/>
<clipPath id="plotclip"><rect x="1561.0" y="117.0" width="982.3000000000002" height="756.2"/></clipPath>
<clipPath id="locclip"><polygon points="1981.4,851.2 1981.3,851.9 1981.2,851.9 1981.2,851.8 1981.2,851.8 1981.3,851.8 1981.5,851.8 1981.6,851.7 1981.6,851.7 1981.5,851.9 1981.3,852.0 1981.0,852.2 1980.7,852.3 1980.5,852.3 1980.4,852.3 1980.4,852.3 1980.4,852.3 1980.5,852.2 1980.4,852.3 1980.3,852.4 1980.1,852.6 1979.8,852.7 1979.5,852.7 1979.3,852.7 1979.1,852.7 1978.9,852.7 1978.8,852.7 1978.6,852.7 1978.4,852.7 1978.1,852.7 1977.9,852.7 1977.7,852.7 1977.5,852.7 1977.3,852.8 1977.0,852.8 1976.6,852.8 1976.1,852.7 1975.7,852.5 1975.2,852.3 1974.7,852.1 1974.1,851.8 1973.5,851.4 1972.8,851.0 1972.0,850.5 1971.1,849.9 1970.2,849.2 1969.2,848.6 1968.2,847.8 1967.1,847.0 1966.0,846.1 1964.8,845.2 1963.5,844.1 1962.0,843.0 1960.4,841.7 1958.8,840.4 1957.0,838.9 1955.2,837.4 1953.3,835.8 1951.3,834.1 1949.2,832.3 1947.0,830.4 1944.7,828.5 1942.3,826.5 1939.9,824.4 1937.3,822.3 1934.5,820.0 1931.5,817.6 1928.4,815.0 1925.1,812.3 1921.6,809.4 1918.0,806.5 1914.2,803.4 1910.4,800.2 1906.4,796.9 1902.3,793.5 1897.9,789.8 1893.4,785.9 1888.7,781.8 1883.8,777.5 1878.7,772.9 1873.3,768.0 1867.8,762.8 1862.2,757.3 1856.4,751.7 1850.3,745.7 1843.9,739.0 1837.1,731.4 1829.7,723.0 1821.8,713.9 1813.6,704.0 1805.1,693.5 1796.3,682.2 1787.2,670.1 1777.8,657.3 1768.1,643.8 1758.2,629.6 1748.2,614.8 1738.0,599.2 1727.5,582.8 1716.9,565.8 1706.3,548.5 1696.0,531.0 1685.6,513.2 1675.2,495.1 1664.9,476.7 1655.0,458.4 1645.7,440.4 1637.0,422.5 1628.6,404.6 1620.7,387.0 1613.3,369.8 1606.4,353.3 1600.1,337.5 1594.3,322.1 1588.9,307.3 1584.1,293.2 1579.8,279.9 1576.0,267.5 1572.8,256.0 1570.1,245.1 1567.9,234.9 1566.0,225.4 1564.5,216.5 1563.5,208.4 1562.9,200.9 1562.6,193.9 1562.7,187.3 1563.0,181.1 1563.8,175.4 1564.9,170.2 1566.3,165.4 1568.0,160.9 1569.9,156.8 1572.3,153.1 1574.9,149.8 1577.7,146.8 1580.7,144.1 1583.9,141.8 1587.3,139.8 1591.0,138.2 1594.8,136.8 1598.6,135.5 1602.7,134.5 1606.8,133.8 1611.1,133.2 1615.5,132.8 1619.9,132.4 1624.4,132.1 1629.0,131.9 1633.6,131.7 1638.3,131.7 1642.9,131.6 1647.6,131.6 1652.2,131.6 1656.9,131.7 1661.6,131.8 1666.3,131.9 1671.1,132.1 1675.9,132.3 1680.8,132.5 1685.7,132.8 1690.7,133.1 1695.8,133.4 1701.0,133.7 1706.2,134.1 1711.6,134.5 1717.0,135.0 1722.5,135.4 1728.1,135.9 1733.8,136.4 1739.6,137.0 1745.6,137.5 1751.6,138.1 1757.7,138.7 1764.0,139.4 1770.4,140.0 1776.9,140.7 1783.6,141.4 1790.4,142.1 1797.4,142.9 1804.5,143.6 1811.7,144.4 1819.1,145.3 1826.6,146.1 1834.3,147.0 1842.1,147.8 1850.1,148.7 1858.3,149.7 1866.7,150.6 1875.2,151.6 1883.9,152.5 1892.7,153.5 1901.7,154.6 1910.9,155.6 1920.3,156.7 1929.8,157.8 1939.5,158.9 1949.4,160.1 1959.4,161.2 1969.6,162.4 1980.0,163.6 1990.5,164.8 2001.2,166.0 2012.1,167.3 2023.1,168.6 2034.3,169.8 2045.6,171.1 2057.0,172.5 2068.5,173.8 2080.2,175.1 2092.0,176.5 2103.8,177.8 2115.7,179.2 2127.7,180.6 2139.7,182.0 2151.7,183.4 2163.6,184.7 2175.3,186.1 2187.0,187.4 2198.6,188.8 2210.1,190.1 2221.6,191.4 2233.0,192.7 2244.5,194.1 2255.9,195.4 2267.1,196.6 2278.0,197.9 2288.7,199.1 2299.1,200.3 2309.3,201.5 2319.4,202.6 2329.1,203.7 2338.6,204.8 2347.9,205.9 2357.0,207.0 2365.8,208.0 2374.3,209.0 2382.5,209.9 2390.5,210.8 2398.1,211.7 2405.6,212.6 2412.7,213.4 2419.7,214.2 2426.3,215.0 2432.7,215.7 2438.9,216.4 2444.9,217.1 2450.7,217.7 2456.3,218.4 2461.7,219.0 2467.0,219.6 2472.1,220.2 2477.1,220.8 2481.9,221.4 2486.6,221.9 2491.2,222.4 2495.6,222.9 2499.9,223.4 2504.0,223.9 2508.0,224.4 2511.8,224.8 2515.5,225.2 2519.0,225.6 2522.4,226.0 2525.6,226.4 2528.7,226.7 2531.6,227.0 2534.3,227.4 2536.6,227.6 2538.9,227.9 2541.4,228.2 2544.1,228.5 2547.3,228.9 2551.0,229.3 2554.7,229.7 2558.2,230.1 2561.1,230.5 2563.4,230.7 2565.3,230.9 2566.9,231.1 2568.3,231.3 2569.7,231.5 2571.1,231.6 2572.4,231.8 2573.7,231.9 2574.8,232.0 2575.9,232.2 2576.9,232.3 2577.9,232.4 2578.8,232.5 2579.6,232.6 2580.3,232.7 2580.7,232.7 2581.1,232.8 2581.3,232.8 2581.4,232.8 2581.6,232.8 2581.5,233.5"/></clipPath>
<filter id="vb" x="-5%" y="-5%" width="110%" height="110%"><feGaussianBlur stdDeviation="1 2"/></filter>
<defs><linearGradient id="r0" gradientUnits="userSpaceOnUse" x1="1561.0" y1="0" x2="2543.3" y2="0"><stop offset="0.0000" stop-color="#00ff00"/><stop offset="0.1619" stop-color="#03ff00"/><stop offset="0.2291" stop-color="#45ff00"/><stop offset="0.2962" stop-color="#a4ff00"/><stop offset="0.3482" stop-color="#fffb00"/><stop offset="0.3909" stop-color="#ffb700"/><stop offset="0.4520" stop-color="#ff7a00"/><stop offset="0.5436" stop-color="#ff4700"/><stop offset="0.6902" stop-color="#ff1d00"/><stop offset="0.9345" stop-color="#ff0000"/><stop offset="1.0017" stop-color="#ff0000"/></linearGradient><linearGradient id="r1" gradientUnits="userSpaceOnUse" x1="1561.0" y1="0" x2="2543.3" y2="0"><stop offset="0.0000" stop-color="#00ff00"/><stop offset="0.1619" stop-color="#03ff00"/><stop offset="0.2260" stop-color="#41ff00"/><stop offset="0.2932" stop-color="#9fff00"/><stop offset="0.3451" stop-color="#feff00"/><stop offset="0.3909" stop-color="#ffb600"/><stop offset="0.4520" stop-color="#ff7900"/><stop offset="0.5436" stop-color="#ff4600"/><stop offset="0.6902" stop-color="#ff1c00"/><stop offset="0.9315" stop-color="#ff0000"/><stop offset="1.0017" stop-color="#ff0000"/></linearGradient><linearGradient id="r2" gradientUnits="userSpaceOnUse" x1="1561.0" y1="0" x2="2543.3" y2="0"><stop offset="0.0000" stop-color="#00ff00"/><stop offset="0.1649" stop-color="#04ff00"/><stop offset="0.2291" stop-color="#44ff00"/><stop offset="0.2962" stop-color="#a4ff00"/><stop offset="0.3451" stop-color="#ffff00"/><stop offset="0.3879" stop-color="#ffb800"/><stop offset="0.4459" stop-color="#ff7d00"/><stop offset="0.5345" stop-color="#ff4900"/><stop offset="0.6749" stop-color="#ff1f00"/><stop offset="0.9101" stop-color="#ff0100"/><stop offset="1.0017" stop-color="#ff0000"/></linearGradient><linearGradient id="r3" gradientUnits="userSpaceOnUse" x1="1561.0" y1="0" x2="2543.3" y2="0"><stop offset="0.0000" stop-color="#00ff00"/><stop offset="0.1649" stop-color="#03ff00"/><stop offset="0.2291" stop-color="#43ff00"/><stop offset="0.2962" stop-color="#a4ff00"/><stop offset="0.3451" stop-color="#fffe00"/><stop offset="0.3848" stop-color="#ffbb00"/><stop offset="0.4428" stop-color="#ff7e00"/><stop offset="0.5284" stop-color="#ff4b00"/><stop offset="0.6658" stop-color="#ff2000"/><stop offset="0.8948" stop-color="#ff0200"/><stop offset="1.0017" stop-color="#ff0000"/></linearGradient><linearGradient id="r4" gradientUnits="userSpaceOnUse" x1="1561.0" y1="0" x2="2543.3" y2="0"><stop offset="0.0000" stop-color="#00ff01"/><stop offset="0.1649" stop-color="#02ff00"/><stop offset="0.2260" stop-color="#3fff00"/><stop offset="0.2932" stop-color="#9fff00"/><stop offset="0.3451" stop-color="#fffd00"/><stop offset="0.3848" stop-color="#ffba00"/><stop offset="0.4428" stop-color="#ff7d00"/><stop offset="0.5284" stop-color="#ff4a00"/><stop offset="0.6658" stop-color="#ff1f00"/><stop offset="0.8948" stop-color="#ff0100"/><stop offset="1.0017" stop-color="#ff0000"/></linearGradient><linearGradient id="r5" gradientUnits="userSpaceOnUse" x1="1561.0" y1="0" x2="2543.3" y2="0"><stop offset="0.0000" stop-color="#00ff04"/><stop offset="0.1680" stop-color="#04ff00"/><stop offset="0.2321" stop-color="#45ff00"/><stop offset="0.2962" stop-color="#a4ff00"/><stop offset="0.3451" stop-color="#fffc00"/><stop offset="0.3848" stop-color="#ffb900"/><stop offset="0.4428" stop-color="#ff7c00"/><stop offset="0.5284" stop-color="#ff4900"/><stop offset="0.6658" stop-color="#ff1e00"/><stop offset="0.8948" stop-color="#ff0100"/><stop offset="1.0017" stop-color="#ff0000"/></linearGradient><linearGradient id="r6" gradientUnits="userSpaceOnUse" x1="1561.0" y1="0" x2="2543.3" y2="0"><stop offset="0.0000" stop-color="#00ff07"/><stop offset="0.1680" stop-color="#03ff00"/><stop offset="0.2291" stop-color="#41ff00"/><stop offset="0.2932" stop-color="#9fff00"/><stop offset="0.3451" stop-color="#fffb00"/><stop offset="0.3848" stop-color="#ffb800"/><stop offset="0.4428" stop-color="#ff7b00"/><stop offset="0.5284" stop-color="#ff4800"/><stop offset="0.6658" stop-color="#ff1e00"/><stop offset="0.8948" stop-color="#ff0100"/><stop offset="1.0017" stop-color="#ff0000"/></linearGradient><linearGradient id="r7" gradientUnits="userSpaceOnUse" x1="1561.0" y1="0" x2="2543.3" y2="0"><stop offset="0.0000" stop-color="#00ff0b"/><stop offset="0.1710" stop-color="#04ff00"/><stop offset="0.2321" stop-color="#44ff00"/><stop offset="0.2962" stop-color="#a4ff00"/><stop offset="0.3421" stop-color="#fdff00"/><stop offset="0.3848" stop-color="#ffb700"/><stop offset="0.4428" stop-color="#ff7a00"/><stop offset="0.5284" stop-color="#ff4700"/><stop offset="0.6658" stop-color="#ff1d00"/><stop offset="0.8948" stop-color="#ff0000"/><stop offset="1.0017" stop-color="#ff0000"/></linearGradient><linearGradient id="r8" gradientUnits="userSpaceOnUse" x1="1561.0" y1="0" x2="2543.3" y2="0"><stop offset="0.0000" stop-color="#00ff0f"/><stop offset="0.1710" stop-color="#03ff03"/><stop offset="0.2321" stop-color="#43ff00"/><stop offset="0.2962" stop-color="#a4ff00"/><stop offset="0.3421" stop-color="#ffff00"/><stop offset="0.3818" stop-color="#ffba00"/><stop offset="0.4367" stop-color="#ff7e00"/><stop offset="0.5192" stop-color="#ff4a00"/><stop offset="0.6505" stop-color="#ff1f00"/><stop offset="0.8704" stop-color="#ff0200"/><stop offset="1.0017" stop-color="#ff0000"/></linearGradient><linearGradient id="r9" gradientUnits="userSpaceOnUse" x1="1561.0" y1="0" x2="2543.3" y2="0"><stop offset="0.0000" stop-color="#00ff13"/><stop offset="0.1710" stop-color="#02ff08"/><stop offset="0.2321" stop-color="#42ff03"/><stop offset="0.2962" stop-color="#a4ff00"/><stop offset="0.3421" stop-color="#fffe00"/><stop offset="0.3818" stop-color="#ffb900"/><stop offset="0.4367" stop-color="#ff7c00"/><stop offset="0.5192" stop-color="#ff4900"/><stop offset="0.6505" stop-color="#ff1f00"/><stop offset="0.8704" stop-color="#ff0100"/><stop offset="1.0017" stop-color="#ff0000"/></linearGradient><linearGradient id="r10" gradientUnits="userSpaceOnUse" x1="1561.0" y1="0" x2="2543.3" y2="0"><stop offset="0.0000" stop-color="#00ff17"/><stop offset="0.1741" stop-color="#04ff0c"/><stop offset="0.2352" stop-color="#46ff07"/><stop offset="0.2962" stop-color="#a4ff02"/><stop offset="0.3421" stop-color="#fffd00"/><stop offset="0.3818" stop-color="#ffb700"/><stop offset="0.4367" stop-color="#ff7b00"/><stop offset="0.5192" stop-color="#ff4800"/><stop offset="0.6505" stop-color="#ff1e00"/><stop offset="0.8704" stop-color="#ff0100"/><stop offset="1.0017" stop-color="#ff0000"/></linearGradient><linearGradient id="r11" gradientUnits="userSpaceOnUse" x1="1561.0" y1="0" x2="2543.3" y2="0"><stop offset="0.0000" stop-color="#00ff1b"/><stop offset="0.1741" stop-color="#03ff11"/><stop offset="0.2321" stop-color="#41ff0d"/><stop offset="0.2932" stop-color="#9fff07"/><stop offset="0.3421" stop-color="#fffc03"/><stop offset="0.3787" stop-color="#ffba00"/><stop offset="0.4337" stop-color="#ff7d00"/><stop offset="0.5131" stop-color="#ff4a00"/><stop offset="0.6414" stop-color="#ff1f00"/><stop offset="0.8551" stop-color="#ff0100"/><stop offset="1.0017" stop-color="#ff0000"/></linearGradient><linearGradient id="r12" gradientUnits="userSpaceOnUse" x1="1561.0" y1="0" x2="2543.3" y2="0"><stop offset="0.0000" stop-color="#00ff20"/><stop offset="0.1741" stop-color="#02ff16"/><stop offset="0.2321" stop-color="#40ff12"/><stop offset="0.2932" stop-color="#9fff0d"/><stop offset="0.3421" stop-color="#fffb08"/><stop offset="0.3787" stop-color="#ffb903"/><stop offset="0.4306" stop-color="#ff7e00"/><stop offset="0.5100" stop-color="#ff4a00"/><stop offset="0.6352" stop-color="#ff2000"/><stop offset="0.8460" stop-color="#ff0200"/><stop offset="1.0017" stop-color="#ff0000"/></linearGradient><linearGradient id="r13" gradientUnits="userSpaceOnUse" x1="1561.0" y1="0" x2="2543.3" y2="0"><stop offset="0.0000" stop-color="#00ff25"/><stop offset="0.1771" stop-color="#04ff1c"/><stop offset="0.2352" stop-color="#43ff18"/><stop offset="0.2962" stop-color="#a5ff13"/><stop offset="0.3390" stop-color="#fdff0f"/><stop offset="0.3818" stop-color="#ffb408"/><stop offset="0.4367" stop-color="#ff7802"/><stop offset="0.5192" stop-color="#ff4500"/><stop offset="0.6505" stop-color="#ff1c00"/><stop offset="0.8674" stop-color="#ff0000"/><stop offset="1.0017" stop-color="#ff0000"/></linearGradient><linearGradient id="r14" gradientUnits="userSpaceOnUse" x1="1561.0" y1="0" x2="2543.3" y2="0"><stop offset="0.0000" stop-color="#00ff29"/><stop offset="0.1771" stop-color="#03ff22"/><stop offset="0.2352" stop-color="#43ff1e"/><stop offset="0.2962" stop-color="#a5ff1a"/><stop offset="0.3390" stop-color="#feff16"/><stop offset="0.3787" stop-color="#ffb70d"/><stop offset="0.4306" stop-color="#ff7c06"/><stop offset="0.5100" stop-color="#ff4801"/><stop offset="0.6352" stop-color="#ff1e00"/><stop offset="0.8460" stop-color="#ff0100"/><stop offset="1.0017" stop-color="#ff0000"/></linearGradient><linearGradient id="r15" gradientUnits="userSpaceOnUse" x1="1561.0" y1="0" x2="2543.3" y2="0"><stop offset="0.0000" stop-color="#00ff2e"/><stop offset="0.1771" stop-color="#02ff28"/><stop offset="0.2321" stop-color="#3eff25"/><stop offset="0.2932" stop-color="#9fff21"/><stop offset="0.3390" stop-color="#ffff1e"/><stop offset="0.3756" stop-color="#ffba13"/><stop offset="0.4276" stop-color="#ff7d0b"/><stop offset="0.5039" stop-color="#ff4a03"/><stop offset="0.6261" stop-color="#ff1f00"/><stop offset="0.8307" stop-color="#ff0200"/><stop offset="1.0017" stop-color="#ff0000"/></linearGradient><linearGradient id="r16" gradientUnits="userSpaceOnUse" x1="1561.0" y1="0" x2="2543.3" y2="0"><stop offset="0.0000" stop-color="#00ff33"/><stop offset="0.1802" stop-color="#03ff2e"/><stop offset="0.2352" stop-color="#41ff2b"/><stop offset="0.2932" stop-color="#9fff28"/><stop offset="0.3390" stop-color="#fffe25"/><stop offset="0.3756" stop-color="#ffb919"/><stop offset="0.4276" stop-color="#ff7c0f"/><stop offset="0.5039" stop-color="#ff4906"/><stop offset="0.6261" stop-color="#ff1f00"/><stop offset="0.8307" stop-color="#ff0100"/><stop offset="1.0017" stop-color="#ff0000"/></linearGradient><linearGradient id="r17" gradientUnits="userSpaceOnUse" x1="1561.0" y1="0" x2="2543.3" y2="0"><stop offset="0.0000" stop-color="#00ff39"/><stop offset="0.1802" stop-color="#02ff34"/><stop offset="0.2352" stop-color="#40ff33"/><stop offset="0.2932" stop-color="#9fff30"/><stop offset="0.3390" stop-color="#fffd2e"/><stop offset="0.3756" stop-color="#ffb720"/><stop offset="0.4276" stop-color="#ff7b13"/><stop offset="0.5039" stop-color="#ff4809"/><stop offset="0.6261" stop-color="#ff1e02"/><stop offset="0.8307" stop-color="#ff0100"/><stop offset="1.0017" stop-color="#ff0000"/></linearGradient><linearGradient id="r18" gradientUnits="userSpaceOnUse" x1="1561.0" y1="0" x2="2543.3" y2="0"><stop offset="0.0000" stop-color="#00ff3e"/><stop offset="0.1832" stop-color="#04ff3b"/><stop offset="0.2382" stop-color="#44ff3a"/><stop offset="0.2962" stop-color="#a5ff38"/><stop offset="0.3390" stop-color="#fffb36"/><stop offset="0.3756" stop-color="#ffb626"/><stop offset="0.4276" stop-color="#ff7918"/><stop offset="0.5039" stop-color="#ff470d"/><stop offset="0.6261" stop-color="#ff1d04"/><stop offset="0.8307" stop-color="#ff0000"/><stop offset="1.0017" stop-color="#ff0000"/></linearGradient><linearGradient id="r19" gradientUnits="userSpaceOnUse" x1="1561.0" y1="0" x2="2543.3" y2="0"><stop offset="0.0000" stop-color="#00ff44"/><stop offset="0.1832" stop-color="#03ff42"/><stop offset="0.2382" stop-color="#43ff41"/><stop offset="0.2962" stop-color="#a5ff41"/><stop offset="0.3359" stop-color="#fcff40"/><stop offset="0.3756" stop-color="#ffb52d"/><stop offset="0.4276" stop-color="#ff781d"/><stop offset="0.5039" stop-color="#ff4510"/><stop offset="0.6261" stop-color="#ff1c06"/><stop offset="0.8276" stop-color="#ff0000"/><stop offset="1.0017" stop-color="#ff0000"/></linearGradient><linearGradient id="r20" gradientUnits="userSpaceOnUse" x1="1561.0" y1="0" x2="2543.3" y2="0"><stop offset="0.0000" stop-color="#00ff49"/><stop offset="0.1832" stop-color="#02ff49"/><stop offset="0.2352" stop-color="#3eff49"/><stop offset="0.2932" stop-color="#9fff49"/><stop offset="0.3359" stop-color="#fdff49"/><stop offset="0.3726" stop-color="#ffb835"/><stop offset="0.4215" stop-color="#ff7c24"/><stop offset="0.4948" stop-color="#ff4915"/><stop offset="0.6108" stop-color="#ff1f09"/><stop offset="0.8063" stop-color="#ff0100"/><stop offset="1.0017" stop-color="#ff0000"/></linearGradient><linearGradient id="r21" gradientUnits="userSpaceOnUse" x1="1561.0" y1="0" x2="2543.3" y2="0"><stop offset="0.0000" stop-color="#00ff4f"/><stop offset="0.1863" stop-color="#04ff51"/><stop offset="0.2382" stop-color="#41ff51"/><stop offset="0.2932" stop-color="#9fff52"/><stop offset="0.3359" stop-color="#ffff53"/><stop offset="0.3695" stop-color="#ffbc3e"/><stop offset="0.4184" stop-color="#ff7e2a"/><stop offset="0.4886" stop-color="#ff4b1a"/><stop offset="0.6016" stop-color="#ff200c"/><stop offset="0.7910" stop-color="#ff0202"/><stop offset="1.0017" stop-color="#ff0000"/></linearGradient><linearGradient id="r22" gradientUnits="userSpaceOnUse" x1="1561.0" y1="0" x2="2543.3" y2="0"><stop offset="0.0000" stop-color="#00ff55"/><stop offset="0.1863" stop-color="#03ff59"/><stop offset="0.2382" stop-color="#40ff5a"/><stop offset="0.2932" stop-color="#9fff5c"/><stop offset="0.3359" stop-color="#fffe5d"/><stop offset="0.3695" stop-color="#ffba45"/><stop offset="0.4184" stop-color="#ff7d30"/><stop offset="0.4886" stop-color="#ff4a1e"/><stop offset="0.6016" stop-color="#ff200f"/><stop offset="0.7910" stop-color="#ff0204"/><stop offset="1.0017" stop-color="#ff0000"/></linearGradient><linearGradient id="r23" gradientUnits="userSpaceOnUse" x1="1561.0" y1="0" x2="2543.3" y2="0"><stop offset="0.0000" stop-color="#00ff5b"/><stop offset="0.1863" stop-color="#02ff61"/><stop offset="0.2382" stop-color="#3fff63"/><stop offset="0.2932" stop-color="#9fff65"/><stop offset="0.3359" stop-color="#fffd67"/><stop offset="0.3695" stop-color="#ffb94d"/><stop offset="0.4184" stop-color="#ff7b36"/><stop offset="0.4886" stop-color="#ff4922"/><stop offset="0.6016" stop-color="#ff1f11"/><stop offset="0.7910" stop-color="#ff0105"/><stop offset="1.0017" stop-color="#ff0000"/></linearGradient><linearGradient id="r24" gradientUnits="userSpaceOnUse" x1="1561.0" y1="0" x2="2543.3" y2="0"><stop offset="0.0000" stop-color="#00ff61"/><stop offset="0.1894" stop-color="#03ff69"/><stop offset="0.2413" stop-color="#43ff6c"/><stop offset="0.2962" stop-color="#a6ff70"/><stop offset="0.3359" stop-color="#fffc72"/><stop offset="0.3695" stop-color="#ffb755"/><stop offset="0.4184" stop-color="#ff7a3b"/><stop offset="0.4886" stop-color="#ff4826"/><stop offset="0.6016" stop-color="#ff1e14"/><stop offset="0.7910" stop-color="#ff0107"/><stop offset="1.0017" stop-color="#ff0000"/></linearGradient><linearGradient id="r25" gradientUnits="userSpaceOnUse" x1="1561.0" y1="0" x2="2543.3" y2="0"><stop offset="0.0000" stop-color="#00ff68"/><stop offset="0.1894" stop-color="#02ff71"/><stop offset="0.2382" stop-color="#3eff75"/><stop offset="0.2932" stop-color="#9fff7a"/><stop offset="0.3329" stop-color="#fcff7e"/><stop offset="0.3726" stop-color="#ffb15b"/><stop offset="0.4215" stop-color="#ff7640"/><stop offset="0.4948" stop-color="#ff4329"/><stop offset="0.6139" stop-color="#ff1a16"/><stop offset="0.8032" stop-color="#ff0008"/><stop offset="1.0017" stop-color="#ff0001"/></linearGradient><linearGradient id="r26" gradientUnits="userSpaceOnUse" x1="1561.0" y1="0" x2="2543.3" y2="0"><stop offset="0.0000" stop-color="#00ff6e"/><stop offset="0.1924" stop-color="#04ff7a"/><stop offset="0.2413" stop-color="#41ff7f"/><stop offset="0.2932" stop-color="#9fff85"/><stop offset="0.3329" stop-color="#fdff8a"/><stop offset="0.3695" stop-color="#ffb466"/><stop offset="0.4154" stop-color="#ff7a49"/><stop offset="0.4856" stop-color="#ff4730"/><stop offset="0.5986" stop-color="#ff1d1a"/><stop offset="0.7849" stop-color="#ff000a"/><stop offset="1.0017" stop-color="#ff0002"/></linearGradient><linearGradient id="r27" gradientUnits="userSpaceOnUse" x1="1561.0" y1="0" x2="2543.3" y2="0"><stop offset="0.0000" stop-color="#00ff75"/><stop offset="0.1924" stop-color="#03ff83"/><stop offset="0.2413" stop-color="#40ff89"/><stop offset="0.2932" stop-color="#9fff90"/><stop offset="0.3329" stop-color="#feff96"/><stop offset="0.3665" stop-color="#ffb871"/><stop offset="0.4123" stop-color="#ff7c51"/><stop offset="0.4795" stop-color="#ff4936"/><stop offset="0.5864" stop-color="#ff1f1f"/><stop offset="0.7666" stop-color="#ff010d"/><stop offset="1.0017" stop-color="#ff0003"/></linearGradient><linearGradient id="r28" gradientUnits="userSpaceOnUse" x1="1561.0" y1="0" x2="2543.3" y2="0"><stop offset="0.0000" stop-color="#00ff7c"/><stop offset="0.1924" stop-color="#02ff8d"/><stop offset="0.2413" stop-color="#40ff93"/><stop offset="0.2932" stop-color="#9fff9b"/><stop offset="0.3329" stop-color="#ffffa3"/><stop offset="0.3634" stop-color="#ffbc7d"/><stop offset="0.4062" stop-color="#ff815c"/><stop offset="0.4703" stop-color="#ff4d3e"/><stop offset="0.5742" stop-color="#ff2224"/><stop offset="0.7482" stop-color="#ff0311"/><stop offset="1.0017" stop-color="#ff0005"/></linearGradient><linearGradient id="r29" gradientUnits="userSpaceOnUse" x1="1561.0" y1="0" x2="2543.3" y2="0"><stop offset="0.0000" stop-color="#00ff83"/><stop offset="0.1955" stop-color="#03ff97"/><stop offset="0.2443" stop-color="#43ff9e"/><stop offset="0.2962" stop-color="#a6ffa8"/><stop offset="0.3329" stop-color="#fffdaf"/><stop offset="0.3634" stop-color="#ffba87"/><stop offset="0.4062" stop-color="#ff7f63"/><stop offset="0.4703" stop-color="#ff4c43"/><stop offset="0.5742" stop-color="#ff2128"/><stop offset="0.7482" stop-color="#ff0213"/><stop offset="1.0017" stop-color="#ff0006"/></linearGradient><linearGradient id="r30" gradientUnits="userSpaceOnUse" x1="1561.0" y1="0" x2="2543.3" y2="0"><stop offset="0.0000" stop-color="#00ff8a"/><stop offset="0.1955" stop-color="#02ffa1"/><stop offset="0.2413" stop-color="#3effa9"/><stop offset="0.2932" stop-color="#9fffb4"/><stop offset="0.3329" stop-color="#fffcbc"/><stop offset="0.3634" stop-color="#ffb990"/><stop offset="0.4062" stop-color="#ff7e6a"/><stop offset="0.4703" stop-color="#ff4a48"/><stop offset="0.5742" stop-color="#ff202b"/><stop offset="0.7482" stop-color="#ff0215"/><stop offset="1.0017" stop-color="#ff0007"/></linearGradient><linearGradient id="r31" gradientUnits="userSpaceOnUse" x1="1561.0" y1="0" x2="2543.3" y2="0"><stop offset="0.0000" stop-color="#00ff91"/><stop offset="0.1985" stop-color="#04ffab"/><stop offset="0.2474" stop-color="#47ffb5"/><stop offset="0.2962" stop-color="#a6ffc1"/><stop offset="0.3298" stop-color="#fbffcb"/><stop offset="0.3665" stop-color="#ffb297"/><stop offset="0.4123" stop-color="#ff766d"/><stop offset="0.4795" stop-color="#ff444a"/><stop offset="0.5894" stop-color="#ff1b2c"/><stop offset="0.7666" stop-color="#ff0015"/><stop offset="1.0017" stop-color="#ff0008"/></linearGradient><linearGradient id="r32" gradientUnits="userSpaceOnUse" x1="1561.0" y1="0" x2="2543.3" y2="0"><stop offset="0.0000" stop-color="#00ff98"/><stop offset="0.1985" stop-color="#03ffb6"/><stop offset="0.2443" stop-color="#41ffc0"/><stop offset="0.2932" stop-color="#9fffcd"/><stop offset="0.3298" stop-color="#fcffd9"/><stop offset="0.3665" stop-color="#ffb1a1"/><stop offset="0.4123" stop-color="#ff7574"/><stop offset="0.4795" stop-color="#ff434f"/><stop offset="0.5894" stop-color="#ff1a2f"/><stop offset="0.7635" stop-color="#ff0018"/><stop offset="1.0017" stop-color="#ff000a"/></linearGradient><linearGradient id="r33" gradientUnits="userSpaceOnUse" x1="1561.0" y1="0" x2="2543.3" y2="0"><stop offset="0.0000" stop-color="#00ffa0"/><stop offset="0.1985" stop-color="#02ffc1"/><stop offset="0.2443" stop-color="#40ffcc"/><stop offset="0.2932" stop-color="#9fffdb"/><stop offset="0.3298" stop-color="#fdffe9"/><stop offset="0.3634" stop-color="#ffb4af"/><stop offset="0.4062" stop-color="#ff7981"/><stop offset="0.4703" stop-color="#ff4758"/><stop offset="0.5742" stop-color="#ff1d36"/><stop offset="0.7452" stop-color="#ff001c"/><stop offset="1.0017" stop-color="#ff000b"/></linearGradient><linearGradient id="r34" gradientUnits="userSpaceOnUse" x1="1561.0" y1="0" x2="2543.3" y2="0"><stop offset="0.0000" stop-color="#00ffa8"/><stop offset="0.2016" stop-color="#04ffcd"/><stop offset="0.2474" stop-color="#44ffda"/><stop offset="0.2962" stop-color="#a7ffea"/><stop offset="0.3298" stop-color="#fffff8"/><stop offset="0.3604" stop-color="#ffb8be"/><stop offset="0.4031" stop-color="#ff7b8b"/><stop offset="0.4673" stop-color="#ff475f"/><stop offset="0.5681" stop-color="#ff1d3b"/><stop offset="0.7360" stop-color="#ff011f"/><stop offset="1.0017" stop-color="#ff000c"/></linearGradient><linearGradient id="r35" gradientUnits="userSpaceOnUse" x1="1561.0" y1="0" x2="2543.3" y2="0"><stop offset="0.0000" stop-color="#00ffb0"/><stop offset="0.2016" stop-color="#03ffd8"/><stop offset="0.2474" stop-color="#43ffe7"/><stop offset="0.2932" stop-color="#a0fff8"/><stop offset="0.3298" stop-color="#f7f6ff"/><stop offset="0.3359" stop-color="#ffedf8"/><stop offset="0.3665" stop-color="#ffacc0"/><stop offset="0.4092" stop-color="#ff738e"/><stop offset="0.4764" stop-color="#ff4160"/><stop offset="0.5833" stop-color="#ff183b"/><stop offset="0.7482" stop-color="#ff0020"/><stop offset="1.0017" stop-color="#ff000e"/></linearGradient><linearGradient id="r36" gradientUnits="userSpaceOnUse" x1="1561.0" y1="0" x2="2543.3" y2="0"><stop offset="0.0000" stop-color="#00ffb8"/><stop offset="0.2016" stop-color="#02ffe4"/><stop offset="0.2443" stop-color="#3dfff3"/><stop offset="0.2871" stop-color="#8ffaff"/><stop offset="0.3390" stop-color="#ffe3ff"/><stop offset="0.3726" stop-color="#ffa0c1"/><stop offset="0.4184" stop-color="#ff698d"/><stop offset="0.4886" stop-color="#ff3960"/><stop offset="0.6047" stop-color="#ff1339"/><stop offset="0.7574" stop-color="#ff0021"/><stop offset="1.0017" stop-color="#ff000f"/></linearGradient><linearGradient id="r37" gradientUnits="userSpaceOnUse" x1="1561.0" y1="0" x2="2543.3" y2="0"><stop offset="0.0000" stop-color="#00ffc0"/><stop offset="0.1985" stop-color="#00fff0"/><stop offset="0.2291" stop-color="#23fffa"/><stop offset="0.2932" stop-color="#92eaff"/><stop offset="0.3451" stop-color="#ffd3ff"/><stop offset="0.3787" stop-color="#ff95c3"/><stop offset="0.4276" stop-color="#ff5f8d"/><stop offset="0.5039" stop-color="#ff315e"/><stop offset="0.6322" stop-color="#ff0c37"/><stop offset="0.7727" stop-color="#ff0022"/><stop offset="1.0017" stop-color="#ff0010"/></linearGradient><linearGradient id="r38" gradientUnits="userSpaceOnUse" x1="1561.0" y1="0" x2="2543.3" y2="0"><stop offset="0.0000" stop-color="#00ffc8"/><stop offset="0.1924" stop-color="#00fffa"/><stop offset="0.2077" stop-color="#05ffff"/><stop offset="0.2657" stop-color="#5ae8ff"/><stop offset="0.3390" stop-color="#e5c9ff"/><stop offset="0.3512" stop-color="#ffc4ff"/><stop offset="0.3879" stop-color="#ff87c0"/><stop offset="0.4428" stop-color="#ff5288"/><stop offset="0.5284" stop-color="#ff2658"/><stop offset="0.6719" stop-color="#ff0532"/><stop offset="0.8735" stop-color="#ff001a"/><stop offset="1.0017" stop-color="#ff0012"/></linearGradient><linearGradient id="r39" gradientUnits="userSpaceOnUse" x1="1561.0" y1="0" x2="2543.3" y2="0"><stop offset="0.0000" stop-color="#00ffd1"/><stop offset="0.1832" stop-color="#00fbff"/><stop offset="0.2077" stop-color="#04f2ff"/><stop offset="0.2657" stop-color="#54dcff"/><stop offset="0.3421" stop-color="#e0bdff"/><stop offset="0.3573" stop-color="#ffb6ff"/><stop offset="0.3940" stop-color="#ff7ec1"/><stop offset="0.4489" stop-color="#ff4c8a"/><stop offset="0.5345" stop-color="#ff235b"/><stop offset="0.6811" stop-color="#ff0434"/><stop offset="0.9681" stop-color="#ff0015"/><stop offset="1.0017" stop-color="#ff0013"/></linearGradient><linearGradient id="r40" gradientUnits="userSpaceOnUse" x1="1561.0" y1="0" x2="2543.3" y2="0"><stop offset="0.0000" stop-color="#00ffda"/><stop offset="0.1496" stop-color="#00fbff"/><stop offset="0.2077" stop-color="#03e6ff"/><stop offset="0.2657" stop-color="#4fd1ff"/><stop offset="0.3421" stop-color="#d5b2ff"/><stop offset="0.3634" stop-color="#ffa9fe"/><stop offset="0.4031" stop-color="#ff72bf"/><stop offset="0.4612" stop-color="#ff4387"/><stop offset="0.5528" stop-color="#ff1c58"/><stop offset="0.7085" stop-color="#ff0032"/><stop offset="1.0017" stop-color="#ff0015"/></linearGradient><linearGradient id="r41" gradientUnits="userSpaceOnUse" x1="1561.0" y1="0" x2="2543.3" y2="0"><stop offset="0.0000" stop-color="#00ffe3"/><stop offset="0.1161" stop-color="#00fbff"/><stop offset="0.2107" stop-color="#04daff"/><stop offset="0.2718" stop-color="#54c4ff"/><stop offset="0.3512" stop-color="#dca5ff"/><stop offset="0.3695" stop-color="#ff9dfe"/><stop offset="0.4092" stop-color="#ff6ac0"/><stop offset="0.4673" stop-color="#ff3e89"/><stop offset="0.5589" stop-color="#ff195a"/><stop offset="0.7116" stop-color="#ff0034"/><stop offset="1.0017" stop-color="#ff0016"/></linearGradient><linearGradient id="r42" gradientUnits="userSpaceOnUse" x1="1561.0" y1="0" x2="2543.3" y2="0"><stop offset="0.0000" stop-color="#00ffec"/><stop offset="0.0825" stop-color="#00fbff"/><stop offset="0.2107" stop-color="#03d0ff"/><stop offset="0.2718" stop-color="#4fbaff"/><stop offset="0.3543" stop-color="#d89aff"/><stop offset="0.3756" stop-color="#ff91fe"/><stop offset="0.4184" stop-color="#ff5fbe"/><stop offset="0.4795" stop-color="#ff3687"/><stop offset="0.5772" stop-color="#ff1358"/><stop offset="0.7208" stop-color="#ff0035"/><stop offset="1.0017" stop-color="#ff0018"/></linearGradient><linearGradient id="r43" gradientUnits="userSpaceOnUse" x1="1561.0" y1="0" x2="2543.3" y2="0"><stop offset="0.0000" stop-color="#00fff5"/><stop offset="0.0550" stop-color="#00f9ff"/><stop offset="0.2107" stop-color="#02c7ff"/><stop offset="0.2718" stop-color="#4bb1ff"/><stop offset="0.3573" stop-color="#d491ff"/><stop offset="0.3818" stop-color="#ff87fe"/><stop offset="0.4245" stop-color="#ff58bf"/><stop offset="0.4886" stop-color="#ff3087"/><stop offset="0.5894" stop-color="#ff1058"/><stop offset="0.7238" stop-color="#ff0037"/><stop offset="1.0017" stop-color="#ff0019"/></linearGradient><linearGradient id="r44" gradientUnits="userSpaceOnUse" x1="1561.0" y1="0" x2="2543.3" y2="0"><stop offset="0.0000" stop-color="#00ffff"/><stop offset="0.2138" stop-color="#03bdff"/><stop offset="0.2810" stop-color="#54a5ff"/><stop offset="0.3695" stop-color="#e085ff"/><stop offset="0.3879" stop-color="#ff7dfe"/><stop offset="0.4306" stop-color="#ff52c0"/><stop offset="0.4948" stop-color="#ff2c89"/><stop offset="0.5955" stop-color="#ff0d59"/><stop offset="0.7238" stop-color="#ff003a"/><stop offset="1.0017" stop-color="#ff001b"/></linearGradient><linearGradient id="r45" gradientUnits="userSpaceOnUse" x1="1561.0" y1="0" x2="2543.3" y2="0"><stop offset="0.0000" stop-color="#00f5ff"/><stop offset="0.2138" stop-color="#02b4ff"/><stop offset="0.2810" stop-color="#4f9eff"/><stop offset="0.3695" stop-color="#d67dff"/><stop offset="0.3940" stop-color="#ff73fd"/><stop offset="0.4398" stop-color="#ff49be"/><stop offset="0.5070" stop-color="#ff2687"/><stop offset="0.6139" stop-color="#ff0957"/><stop offset="0.7360" stop-color="#ff003a"/><stop offset="1.0017" stop-color="#ff001c"/></linearGradient><linearGradient id="r46" gradientUnits="userSpaceOnUse" x1="1561.0" y1="0" x2="2543.3" y2="0"><stop offset="0.0000" stop-color="#00edff"/><stop offset="0.2168" stop-color="#04acff"/><stop offset="0.2871" stop-color="#5394ff"/><stop offset="0.3787" stop-color="#dc73ff"/><stop offset="0.4001" stop-color="#ff6bfd"/><stop offset="0.4459" stop-color="#ff43bf"/><stop offset="0.5131" stop-color="#ff2289"/><stop offset="0.6200" stop-color="#ff0759"/><stop offset="0.7482" stop-color="#ff003b"/><stop offset="1.0017" stop-color="#ff001e"/></linearGradient><linearGradient id="r47" gradientUnits="userSpaceOnUse" x1="1561.0" y1="0" x2="2543.3" y2="0"><stop offset="0.0000" stop-color="#00e4ff"/><stop offset="0.2168" stop-color="#03a4ff"/><stop offset="0.2871" stop-color="#4f8dff"/><stop offset="0.3818" stop-color="#d96cff"/><stop offset="0.4062" stop-color="#ff62fd"/><stop offset="0.4551" stop-color="#ff3cbd"/><stop offset="0.5253" stop-color="#ff1d87"/><stop offset="0.6383" stop-color="#ff0457"/><stop offset="0.8307" stop-color="#ff0031"/><stop offset="1.0017" stop-color="#ff001f"/></linearGradient><linearGradient id="r48" gradientUnits="userSpaceOnUse" x1="1561.0" y1="0" x2="2543.3" y2="0"><stop offset="0.0000" stop-color="#00dcff"/><stop offset="0.2199" stop-color="#049cff"/><stop offset="0.2932" stop-color="#5385ff"/><stop offset="0.3909" stop-color="#de63ff"/><stop offset="0.4123" stop-color="#ff5bfd"/><stop offset="0.4612" stop-color="#ff37be"/><stop offset="0.5345" stop-color="#ff1986"/><stop offset="0.6475" stop-color="#ff0258"/><stop offset="0.8429" stop-color="#ff0031"/><stop offset="1.0017" stop-color="#ff0021"/></linearGradient><linearGradient id="r49" gradientUnits="userSpaceOnUse" x1="1561.0" y1="0" x2="2543.3" y2="0"><stop offset="0.0000" stop-color="#00d4ff"/><stop offset="0.2199" stop-color="#0396ff"/><stop offset="0.2932" stop-color="#4f7eff"/><stop offset="0.3909" stop-color="#d65eff"/><stop offset="0.4184" stop-color="#ff54fd"/><stop offset="0.4703" stop-color="#ff31bc"/><stop offset="0.5467" stop-color="#ff1485"/><stop offset="0.6658" stop-color="#ff0056"/><stop offset="0.8704" stop-color="#ff0030"/><stop offset="1.0017" stop-color="#ff0023"/></linearGradient><linearGradient id="r50" gradientUnits="userSpaceOnUse" x1="1561.0" y1="0" x2="2543.3" y2="0"><stop offset="0.0000" stop-color="#00cdff"/><stop offset="0.2199" stop-color="#028fff"/><stop offset="0.2932" stop-color="#4c79ff"/><stop offset="0.3940" stop-color="#d258ff"/><stop offset="0.4245" stop-color="#ff4dfd"/><stop offset="0.4764" stop-color="#ff2cbe"/><stop offset="0.5528" stop-color="#ff1186"/><stop offset="0.6719" stop-color="#ff0058"/><stop offset="0.8796" stop-color="#ff0031"/><stop offset="1.0017" stop-color="#ff0024"/></linearGradient><linearGradient id="r51" gradientUnits="userSpaceOnUse" x1="1561.0" y1="0" x2="2543.3" y2="0"><stop offset="0.0000" stop-color="#00c6ff"/><stop offset="0.2229" stop-color="#0388ff"/><stop offset="0.3024" stop-color="#5370ff"/><stop offset="0.4062" stop-color="#dd4fff"/><stop offset="0.4306" stop-color="#ff46fd"/><stop offset="0.4825" stop-color="#ff28bf"/><stop offset="0.5589" stop-color="#ff0f88"/><stop offset="0.6749" stop-color="#ff005a"/><stop offset="0.8796" stop-color="#ff0033"/><stop offset="1.0017" stop-color="#ff0026"/></linearGradient><linearGradient id="r52" gradientUnits="userSpaceOnUse" x1="1561.0" y1="0" x2="2543.3" y2="0"><stop offset="0.0000" stop-color="#00bfff"/><stop offset="0.2229" stop-color="#0283ff"/><stop offset="0.3024" stop-color="#4f6bff"/><stop offset="0.4092" stop-color="#d94aff"/><stop offset="0.4367" stop-color="#ff40fd"/><stop offset="0.4917" stop-color="#ff23bd"/><stop offset="0.5711" stop-color="#ff0b86"/><stop offset="0.6811" stop-color="#ff005c"/><stop offset="0.8857" stop-color="#ff0034"/><stop offset="1.0017" stop-color="#ff0028"/></linearGradient><linearGradient id="r53" gradientUnits="userSpaceOnUse" x1="1561.0" y1="0" x2="2543.3" y2="0"><stop offset="0.0000" stop-color="#00b9ff"/><stop offset="0.2260" stop-color="#037dff"/><stop offset="0.3085" stop-color="#5364ff"/><stop offset="0.4184" stop-color="#de43ff"/><stop offset="0.4428" stop-color="#ff3afc"/><stop offset="0.4978" stop-color="#ff1fbe"/><stop offset="0.5803" stop-color="#ff0886"/><stop offset="0.6902" stop-color="#ff005c"/><stop offset="0.8979" stop-color="#ff0035"/><stop offset="1.0017" stop-color="#ff0029"/></linearGradient><linearGradient id="r54" gradientUnits="userSpaceOnUse" x1="1561.0" y1="0" x2="2543.3" y2="0"><stop offset="0.0000" stop-color="#00b3ff"/><stop offset="0.2260" stop-color="#0377ff"/><stop offset="0.3085" stop-color="#4f60ff"/><stop offset="0.4184" stop-color="#d73fff"/><stop offset="0.4489" stop-color="#ff35fc"/><stop offset="0.5070" stop-color="#ff1abc"/><stop offset="0.5925" stop-color="#ff0584"/><stop offset="0.7269" stop-color="#ff0056"/><stop offset="0.9590" stop-color="#ff002f"/><stop offset="1.0017" stop-color="#ff002b"/></linearGradient><linearGradient id="r55" gradientUnits="userSpaceOnUse" x1="1561.0" y1="0" x2="2543.3" y2="0"><stop offset="0.0000" stop-color="#00adff"/><stop offset="0.2291" stop-color="#0472ff"/><stop offset="0.3146" stop-color="#535aff"/><stop offset="0.4276" stop-color="#dc39ff"/><stop offset="0.4551" stop-color="#ff30fc"/><stop offset="0.5131" stop-color="#ff17bd"/><stop offset="0.5986" stop-color="#ff0386"/><stop offset="0.7330" stop-color="#ff0057"/><stop offset="0.9651" stop-color="#ff0030"/><stop offset="1.0017" stop-color="#ff002d"/></linearGradient><linearGradient id="r56" gradientUnits="userSpaceOnUse" x1="1561.0" y1="0" x2="2543.3" y2="0"><stop offset="0.0000" stop-color="#00a7ff"/><stop offset="0.2291" stop-color="#036dff"/><stop offset="0.3176" stop-color="#5255ff"/><stop offset="0.4337" stop-color="#dd33ff"/><stop offset="0.4612" stop-color="#ff2bfc"/><stop offset="0.5222" stop-color="#ff13bc"/><stop offset="0.6108" stop-color="#ff0184"/><stop offset="0.7513" stop-color="#ff0055"/><stop offset="0.9926" stop-color="#ff002f"/><stop offset="1.0017" stop-color="#ff002e"/></linearGradient><linearGradient id="r57" gradientUnits="userSpaceOnUse" x1="1561.0" y1="0" x2="2543.3" y2="0"><stop offset="0.0000" stop-color="#00a2ff"/><stop offset="0.2321" stop-color="#0468ff"/><stop offset="0.3237" stop-color="#564fff"/><stop offset="0.4428" stop-color="#e12eff"/><stop offset="0.4673" stop-color="#ff26fc"/><stop offset="0.5284" stop-color="#ff10bc"/><stop offset="0.6169" stop-color="#ff0086"/><stop offset="0.7574" stop-color="#ff0057"/><stop offset="0.9987" stop-color="#ff0030"/><stop offset="1.0017" stop-color="#ff0030"/></linearGradient><linearGradient id="r58" gradientUnits="userSpaceOnUse" x1="1561.0" y1="0" x2="2543.3" y2="0"><stop offset="0.0000" stop-color="#009dff"/><stop offset="0.2321" stop-color="#0364ff"/><stop offset="0.3237" stop-color="#524cff"/><stop offset="0.4428" stop-color="#da2bff"/><stop offset="0.4734" stop-color="#ff22fc"/><stop offset="0.5345" stop-color="#ff0dbd"/><stop offset="0.6261" stop-color="#ff0086"/><stop offset="0.7696" stop-color="#ff0057"/><stop offset="1.0017" stop-color="#ff0032"/></linearGradient><linearGradient id="r59" gradientUnits="userSpaceOnUse" x1="1561.0" y1="0" x2="2543.3" y2="0"><stop offset="0.0000" stop-color="#0098ff"/><stop offset="0.2321" stop-color="#0260ff"/><stop offset="0.3237" stop-color="#4f48ff"/><stop offset="0.4459" stop-color="#d727ff"/><stop offset="0.4795" stop-color="#ff1efc"/><stop offset="0.5436" stop-color="#ff0abc"/><stop offset="0.6383" stop-color="#ff0084"/><stop offset="0.7879" stop-color="#ff0055"/><stop offset="1.0017" stop-color="#ff0034"/></linearGradient><linearGradient id="r60" gradientUnits="userSpaceOnUse" x1="1561.0" y1="0" x2="2543.3" y2="0"><stop offset="0.0000" stop-color="#0093ff"/><stop offset="0.2352" stop-color="#035bff"/><stop offset="0.3298" stop-color="#5243ff"/><stop offset="0.4551" stop-color="#dc22ff"/><stop offset="0.4856" stop-color="#ff1afc"/><stop offset="0.5497" stop-color="#ff07bd"/><stop offset="0.6444" stop-color="#ff0086"/><stop offset="0.7941" stop-color="#ff0057"/><stop offset="1.0017" stop-color="#ff0035"/></linearGradient><linearGradient id="r61" gradientUnits="userSpaceOnUse" x1="1561.0" y1="0" x2="2543.3" y2="0"><stop offset="0.0000" stop-color="#008fff"/><stop offset="0.2352" stop-color="#0358ff"/><stop offset="0.3298" stop-color="#4f40ff"/><stop offset="0.4581" stop-color="#d91fff"/><stop offset="0.4917" stop-color="#ff16fc"/><stop offset="0.5589" stop-color="#ff05bb"/><stop offset="0.6566" stop-color="#ff0084"/><stop offset="0.8124" stop-color="#ff0055"/><stop offset="1.0017" stop-color="#ff0037"/></linearGradient><linearGradient id="r62" gradientUnits="userSpaceOnUse" x1="1561.0" y1="0" x2="2543.3" y2="0"><stop offset="0.0000" stop-color="#008aff"/><stop offset="0.2382" stop-color="#0453ff"/><stop offset="0.3390" stop-color="#553bff"/><stop offset="0.4703" stop-color="#e11aff"/><stop offset="0.4978" stop-color="#ff13fc"/><stop offset="0.5650" stop-color="#ff03bc"/><stop offset="0.6627" stop-color="#ff0086"/><stop offset="0.8185" stop-color="#ff0056"/><stop offset="1.0017" stop-color="#ff0039"/></linearGradient><linearGradient id="r63" gradientUnits="userSpaceOnUse" x1="1561.0" y1="0" x2="2543.3" y2="0"><stop offset="0.0000" stop-color="#0086ff"/><stop offset="0.2382" stop-color="#0350ff"/><stop offset="0.3390" stop-color="#5238ff"/><stop offset="0.4703" stop-color="#db18ff"/><stop offset="0.5039" stop-color="#ff10fc"/><stop offset="0.5711" stop-color="#ff01bd"/><stop offset="0.6719" stop-color="#ff0085"/><stop offset="0.8307" stop-color="#ff0056"/><stop offset="1.0017" stop-color="#ff003b"/></linearGradient><linearGradient id="r64" gradientUnits="userSpaceOnUse" x1="1561.0" y1="0" x2="2543.3" y2="0"><stop offset="0.0000" stop-color="#0082ff"/><stop offset="0.2413" stop-color="#044cff"/><stop offset="0.3451" stop-color="#5534ff"/><stop offset="0.4795" stop-color="#df14ff"/><stop offset="0.5100" stop-color="#ff0dfb"/><stop offset="0.5803" stop-color="#ff00bc"/><stop offset="0.6841" stop-color="#ff0084"/><stop offset="0.8460" stop-color="#ff0056"/><stop offset="1.0017" stop-color="#ff003d"/></linearGradient><linearGradient id="r65" gradientUnits="userSpaceOnUse" x1="1561.0" y1="0" x2="2543.3" y2="0"><stop offset="0.0000" stop-color="#007eff"/><stop offset="0.2413" stop-color="#0349ff"/><stop offset="0.3451" stop-color="#5231ff"/><stop offset="0.4825" stop-color="#dc11ff"/><stop offset="0.5161" stop-color="#ff0afb"/><stop offset="0.5864" stop-color="#ff00bc"/><stop offset="0.6902" stop-color="#ff0085"/><stop offset="0.8551" stop-color="#ff0056"/><stop offset="1.0017" stop-color="#ff003e"/></linearGradient><linearGradient id="r66" gradientUnits="userSpaceOnUse" x1="1561.0" y1="0" x2="2543.3" y2="0"><stop offset="0.0000" stop-color="#007aff"/><stop offset="0.2443" stop-color="#0446ff"/><stop offset="0.3512" stop-color="#552dff"/><stop offset="0.4917" stop-color="#e00eff"/><stop offset="0.5222" stop-color="#ff07fb"/><stop offset="0.5955" stop-color="#ff00bb"/><stop offset="0.7024" stop-color="#ff0084"/><stop offset="0.8704" stop-color="#ff0055"/><stop offset="1.0017" stop-color="#ff0040"/></linearGradient><linearGradient id="r67" gradientUnits="userSpaceOnUse" x1="1561.0" y1="0" x2="2543.3" y2="0"><stop offset="0.0000" stop-color="#0077ff"/><stop offset="0.2443" stop-color="#0343ff"/><stop offset="0.3512" stop-color="#522bff"/><stop offset="0.4917" stop-color="#da0cff"/><stop offset="0.5284" stop-color="#ff05fb"/><stop offset="0.6016" stop-color="#ff00bc"/><stop offset="0.7116" stop-color="#ff0084"/><stop offset="0.8826" stop-color="#ff0055"/><stop offset="1.0017" stop-color="#ff0042"/></linearGradient><linearGradient id="r68" gradientUnits="userSpaceOnUse" x1="1561.0" y1="0" x2="2543.3" y2="0"><stop offset="0.0000" stop-color="#0073ff"/><stop offset="0.2443" stop-color="#0340ff"/><stop offset="0.3512" stop-color="#4f29ff"/><stop offset="0.4948" stop-color="#d80aff"/><stop offset="0.5345" stop-color="#ff02fb"/><stop offset="0.6078" stop-color="#ff00bd"/><stop offset="0.7177" stop-color="#ff0085"/><stop offset="0.8918" stop-color="#ff0056"/><stop offset="1.0017" stop-color="#ff0044"/></linearGradient><linearGradient id="r69" gradientUnits="userSpaceOnUse" x1="1561.0" y1="0" x2="2543.3" y2="0"><stop offset="0.0000" stop-color="#0070ff"/><stop offset="0.2474" stop-color="#033dff"/><stop offset="0.3604" stop-color="#5425ff"/><stop offset="0.5070" stop-color="#df06ff"/><stop offset="0.5406" stop-color="#ff00fb"/><stop offset="0.6169" stop-color="#ff00bc"/><stop offset="0.7299" stop-color="#ff0084"/><stop offset="0.9071" stop-color="#ff0055"/><stop offset="1.0017" stop-color="#ff0046"/></linearGradient><linearGradient id="r70" gradientUnits="userSpaceOnUse" x1="1561.0" y1="0" x2="2543.3" y2="0"><stop offset="0.0000" stop-color="#006dff"/><stop offset="0.2474" stop-color="#033aff"/><stop offset="0.3604" stop-color="#5223ff"/><stop offset="0.5100" stop-color="#dc05ff"/><stop offset="0.5467" stop-color="#ff00fb"/><stop offset="0.6230" stop-color="#ff00bc"/><stop offset="0.7360" stop-color="#ff0085"/><stop offset="0.9162" stop-color="#ff0056"/><stop offset="1.0017" stop-color="#ff0048"/></linearGradient><linearGradient id="r71" gradientUnits="userSpaceOnUse" x1="1561.0" y1="0" x2="2543.3" y2="0"><stop offset="0.0000" stop-color="#0069ff"/><stop offset="0.2504" stop-color="#0437ff"/><stop offset="0.3665" stop-color="#5420ff"/><stop offset="0.5192" stop-color="#e002ff"/><stop offset="0.5528" stop-color="#ff00fb"/><stop offset="0.6322" stop-color="#ff00bb"/><stop offset="0.7482" stop-color="#ff0084"/><stop offset="0.9315" stop-color="#ff0055"/><stop offset="1.0017" stop-color="#ff004a"/></linearGradient><linearGradient id="r72" gradientUnits="userSpaceOnUse" x1="1561.0" y1="0" x2="2543.3" y2="0"><stop offset="0.0000" stop-color="#0066ff"/><stop offset="0.2504" stop-color="#0335ff"/><stop offset="0.3665" stop-color="#521eff"/><stop offset="0.5192" stop-color="#db01ff"/><stop offset="0.5589" stop-color="#ff00fb"/><stop offset="0.6383" stop-color="#ff00bc"/><stop offset="0.7574" stop-color="#ff0084"/><stop offset="0.9437" stop-color="#ff0055"/><stop offset="1.0017" stop-color="#ff004c"/></linearGradient><linearGradient id="r73" gradientUnits="userSpaceOnUse" x1="1561.0" y1="0" x2="2543.3" y2="0"><stop offset="0.0000" stop-color="#0063ff"/><stop offset="0.2535" stop-color="#0432ff"/><stop offset="0.3726" stop-color="#541bff"/><stop offset="0.5284" stop-color="#de00ff"/><stop offset="0.5650" stop-color="#ff00fb"/><stop offset="0.6475" stop-color="#ff00bb"/><stop offset="0.7666" stop-color="#ff0084"/><stop offset="0.9559" stop-color="#ff0055"/><stop offset="1.0017" stop-color="#ff004e"/></linearGradient><linearGradient id="r74" gradientUnits="userSpaceOnUse" x1="1561.0" y1="0" x2="2543.3" y2="0"><stop offset="0.0000" stop-color="#0060ff"/><stop offset="0.2535" stop-color="#0330ff"/><stop offset="0.3726" stop-color="#5219ff"/><stop offset="0.5314" stop-color="#dc00ff"/><stop offset="0.5711" stop-color="#ff00fb"/><stop offset="0.6536" stop-color="#ff00bb"/><stop offset="0.7757" stop-color="#ff0084"/><stop offset="0.9681" stop-color="#ff0055"/><stop offset="1.0017" stop-color="#ff0050"/></linearGradient><linearGradient id="r75" gradientUnits="userSpaceOnUse" x1="1561.0" y1="0" x2="2543.3" y2="0"><stop offset="0.0000" stop-color="#005eff"/><stop offset="0.2565" stop-color="#042eff"/><stop offset="0.3818" stop-color="#5616ff"/><stop offset="0.5345" stop-color="#da00ff"/><stop offset="0.5772" stop-color="#ff00fb"/><stop offset="0.6597" stop-color="#ff00bc"/><stop offset="0.7818" stop-color="#ff0085"/><stop offset="0.9742" stop-color="#ff0056"/><stop offset="1.0017" stop-color="#ff0052"/></linearGradient><linearGradient id="r76" gradientUnits="userSpaceOnUse" x1="1561.0" y1="0" x2="2543.3" y2="0"><stop offset="0.0000" stop-color="#005bff"/><stop offset="0.2565" stop-color="#032cff"/><stop offset="0.3818" stop-color="#5414ff"/><stop offset="0.5314" stop-color="#d200ff"/><stop offset="0.5833" stop-color="#ff00fb"/><stop offset="0.6688" stop-color="#ff00bb"/><stop offset="0.7941" stop-color="#ff0084"/><stop offset="0.9926" stop-color="#ff0055"/><stop offset="1.0017" stop-color="#ff0053"/></linearGradient><linearGradient id="r77" gradientUnits="userSpaceOnUse" x1="1561.0" y1="0" x2="2543.3" y2="0"><stop offset="0.0000" stop-color="#0058ff"/><stop offset="0.2596" stop-color="#0429ff"/><stop offset="0.3879" stop-color="#5612ff"/><stop offset="0.5284" stop-color="#ca00ff"/><stop offset="0.5894" stop-color="#ff00fb"/><stop offset="0.6749" stop-color="#ff00bc"/><stop offset="0.8032" stop-color="#ff0084"/><stop offset="1.0017" stop-color="#ff0055"/></linearGradient><linearGradient id="r78" gradientUnits="userSpaceOnUse" x1="1561.0" y1="0" x2="2543.3" y2="0"><stop offset="0.0000" stop-color="#0056ff"/><stop offset="0.2596" stop-color="#0427ff"/><stop offset="0.3879" stop-color="#5410ff"/><stop offset="0.5253" stop-color="#c300ff"/><stop offset="0.5955" stop-color="#ff00fb"/><stop offset="0.6841" stop-color="#ff00bb"/><stop offset="0.8154" stop-color="#ff0083"/><stop offset="1.0017" stop-color="#ff0057"/></linearGradient><linearGradient id="r79" gradientUnits="userSpaceOnUse" x1="1561.0" y1="0" x2="2543.3" y2="0"><stop offset="0.0000" stop-color="#0053ff"/><stop offset="0.2596" stop-color="#0326ff"/><stop offset="0.3879" stop-color="#510fff"/><stop offset="0.5192" stop-color="#b900ff"/><stop offset="0.5986" stop-color="#ff00fd"/><stop offset="0.6872" stop-color="#ff00bd"/><stop offset="0.8154" stop-color="#ff0086"/><stop offset="1.0017" stop-color="#ff0059"/></linearGradient><linearGradient id="r80" gradientUnits="userSpaceOnUse" x1="1561.0" y1="0" x2="2543.3" y2="0"><stop offset="0.0000" stop-color="#0051ff"/><stop offset="0.2626" stop-color="#0423ff"/><stop offset="0.3940" stop-color="#540dff"/><stop offset="0.5192" stop-color="#b500ff"/><stop offset="0.6047" stop-color="#ff00fd"/><stop offset="0.6933" stop-color="#ff00be"/><stop offset="0.8246" stop-color="#ff0086"/><stop offset="1.0017" stop-color="#ff005c"/></linearGradient><linearGradient id="r81" gradientUnits="userSpaceOnUse" x1="1561.0" y1="0" x2="2543.3" y2="0"><stop offset="0.0000" stop-color="#004fff"/><stop offset="0.2626" stop-color="#0322ff"/><stop offset="0.3970" stop-color="#530bff"/><stop offset="0.5161" stop-color="#ae00ff"/><stop offset="0.6108" stop-color="#ff00fd"/><stop offset="0.6994" stop-color="#ff00be"/><stop offset="0.8307" stop-color="#ff0087"/><stop offset="1.0017" stop-color="#ff005e"/></linearGradient><linearGradient id="r82" gradientUnits="userSpaceOnUse" x1="1561.0" y1="0" x2="2543.3" y2="0"><stop offset="0.0000" stop-color="#004dff"/><stop offset="0.2657" stop-color="#0420ff"/><stop offset="0.4031" stop-color="#5509ff"/><stop offset="0.5192" stop-color="#ad00ff"/><stop offset="0.6169" stop-color="#ff00fd"/><stop offset="0.7085" stop-color="#ff00bd"/><stop offset="0.8429" stop-color="#ff0086"/><stop offset="1.0017" stop-color="#ff0060"/></linearGradient><linearGradient id="r83" gradientUnits="userSpaceOnUse" x1="1561.0" y1="0" x2="2543.3" y2="0"><stop offset="0.0000" stop-color="#004aff"/><stop offset="0.2657" stop-color="#031eff"/><stop offset="0.4031" stop-color="#5308ff"/><stop offset="0.5222" stop-color="#ac00ff"/><stop offset="0.6230" stop-color="#ff00fd"/><stop offset="0.7146" stop-color="#ff00be"/><stop offset="0.8521" stop-color="#ff0086"/><stop offset="1.0017" stop-color="#ff0062"/></linearGradient><linearGradient id="r84" gradientUnits="userSpaceOnUse" x1="1561.0" y1="0" x2="2543.3" y2="0"><stop offset="0.0000" stop-color="#0048ff"/><stop offset="0.2688" stop-color="#041cff"/><stop offset="0.4092" stop-color="#5506ff"/><stop offset="0.5436" stop-color="#b900ff"/><stop offset="0.6291" stop-color="#ff00fd"/><stop offset="0.7238" stop-color="#ff00bd"/><stop offset="0.8612" stop-color="#ff0086"/><stop offset="1.0017" stop-color="#ff0064"/></linearGradient><linearGradient id="r85" gradientUnits="userSpaceOnUse" x1="1561.0" y1="0" x2="2543.3" y2="0"><stop offset="0.0000" stop-color="#0046ff"/><stop offset="0.2688" stop-color="#031bff"/><stop offset="0.4092" stop-color="#5305ff"/><stop offset="0.5864" stop-color="#d800ff"/><stop offset="0.6352" stop-color="#ff00fd"/><stop offset="0.7299" stop-color="#ff00bd"/><stop offset="0.8704" stop-color="#ff0086"/><stop offset="1.0017" stop-color="#ff0066"/></linearGradient><linearGradient id="r86" gradientUnits="userSpaceOnUse" x1="1561.0" y1="0" x2="2543.3" y2="0"><stop offset="0.0000" stop-color="#0044ff"/><stop offset="0.2688" stop-color="#031aff"/><stop offset="0.4092" stop-color="#5104ff"/><stop offset="0.5955" stop-color="#db00ff"/><stop offset="0.6414" stop-color="#ff00fd"/><stop offset="0.7391" stop-color="#ff00bc"/><stop offset="0.8826" stop-color="#ff0085"/><stop offset="1.0017" stop-color="#ff0068"/></linearGradient><linearGradient id="r87" gradientUnits="userSpaceOnUse" x1="1561.0" y1="0" x2="2543.3" y2="0"><stop offset="0.0000" stop-color="#0042ff"/><stop offset="0.2718" stop-color="#0418ff"/><stop offset="0.4184" stop-color="#5502ff"/><stop offset="0.6078" stop-color="#e000ff"/><stop offset="0.6505" stop-color="#ff00fa"/><stop offset="0.7482" stop-color="#ff00bb"/><stop offset="0.8948" stop-color="#ff0084"/><stop offset="1.0017" stop-color="#ff006a"/></linearGradient><linearGradient id="r88" gradientUnits="userSpaceOnUse" x1="1561.0" y1="0" x2="2543.3" y2="0"><stop offset="0.0000" stop-color="#0040ff"/><stop offset="0.2718" stop-color="#0316ff"/><stop offset="0.4184" stop-color="#5302ff"/><stop offset="0.6108" stop-color="#de00ff"/><stop offset="0.6536" stop-color="#ff00fd"/><stop offset="0.7513" stop-color="#ff00be"/><stop offset="0.8979" stop-color="#ff0085"/><stop offset="1.0017" stop-color="#ff006c"/></linearGradient><linearGradient id="r89" gradientUnits="userSpaceOnUse" x1="1561.0" y1="0" x2="2543.3" y2="0"><stop offset="0.0000" stop-color="#003fff"/><stop offset="0.2749" stop-color="#0415ff"/><stop offset="0.4245" stop-color="#5500ff"/><stop offset="0.6200" stop-color="#e100ff"/><stop offset="0.6597" stop-color="#ff00fd"/><stop offset="0.7605" stop-color="#ff00bd"/><stop offset="0.9071" stop-color="#ff0085"/><stop offset="1.0017" stop-color="#ff006e"/></linearGradient><linearGradient id="r90" gradientUnits="userSpaceOnUse" x1="1561.0" y1="0" x2="2543.3" y2="0"><stop offset="0.0000" stop-color="#003dff"/><stop offset="0.2749" stop-color="#0314ff"/><stop offset="0.4245" stop-color="#5300ff"/><stop offset="0.6200" stop-color="#dd00ff"/><stop offset="0.6658" stop-color="#ff00fd"/><stop offset="0.7666" stop-color="#ff00bd"/><stop offset="0.9162" stop-color="#ff0085"/><stop offset="1.0017" stop-color="#ff0070"/></linearGradient><linearGradient id="r91" gradientUnits="userSpaceOnUse" x1="1561.0" y1="0" x2="2543.3" y2="0"><stop offset="0.0000" stop-color="#003bff"/><stop offset="0.2779" stop-color="#0412ff"/><stop offset="0.4306" stop-color="#5500ff"/><stop offset="0.6291" stop-color="#e000ff"/><stop offset="0.6719" stop-color="#ff00fd"/><stop offset="0.7757" stop-color="#ff00bc"/><stop offset="0.9284" stop-color="#ff0085"/><stop offset="1.0017" stop-color="#ff0073"/></linearGradient><linearGradient id="r92" gradientUnits="userSpaceOnUse" x1="1561.0" y1="0" x2="2543.3" y2="0"><stop offset="0.0000" stop-color="#0039ff"/><stop offset="0.2779" stop-color="#0311ff"/><stop offset="0.4306" stop-color="#5300ff"/><stop offset="0.6322" stop-color="#de00ff"/><stop offset="0.6780" stop-color="#ff00fd"/><stop offset="0.7818" stop-color="#ff00bd"/><stop offset="0.9345" stop-color="#ff0085"/><stop offset="1.0017" stop-color="#ff0075"/></linearGradient><linearGradient id="r93" gradientUnits="userSpaceOnUse" x1="1561.0" y1="0" x2="2543.3" y2="0"><stop offset="0.0000" stop-color="#0038ff"/><stop offset="0.2810" stop-color="#040fff"/><stop offset="0.4398" stop-color="#5700ff"/><stop offset="0.6444" stop-color="#e300ff"/><stop offset="0.6841" stop-color="#ff00fd"/><stop offset="0.7879" stop-color="#ff00bd"/><stop offset="0.9437" stop-color="#ff0085"/><stop offset="1.0017" stop-color="#ff0077"/></linearGradient><linearGradient id="r94" gradientUnits="userSpaceOnUse" x1="1561.0" y1="0" x2="2543.3" y2="0"><stop offset="0.0000" stop-color="#0036ff"/><stop offset="0.2810" stop-color="#040eff"/><stop offset="0.4398" stop-color="#5500ff"/><stop offset="0.6475" stop-color="#e100ff"/><stop offset="0.6902" stop-color="#ff00fc"/><stop offset="0.7971" stop-color="#ff00bc"/><stop offset="0.9559" stop-color="#ff0084"/><stop offset="1.0017" stop-color="#ff0079"/></linearGradient><linearGradient id="r95" gradientUnits="userSpaceOnUse" x1="1561.0" y1="0" x2="2543.3" y2="0"><stop offset="0.0000" stop-color="#0035ff"/><stop offset="0.2840" stop-color="#040dff"/><stop offset="0.4398" stop-color="#5300ff"/><stop offset="0.6475" stop-color="#dd00ff"/><stop offset="0.6963" stop-color="#ff00fc"/><stop offset="0.8032" stop-color="#ff00bd"/><stop offset="0.9620" stop-color="#ff0085"/><stop offset="1.0017" stop-color="#ff007b"/></linearGradient><linearGradient id="r96" gradientUnits="userSpaceOnUse" x1="1561.0" y1="0" x2="2543.3" y2="0"><stop offset="0.0000" stop-color="#0033ff"/><stop offset="0.2840" stop-color="#040cff"/><stop offset="0.4398" stop-color="#5100ff"/><stop offset="0.6505" stop-color="#db00ff"/><stop offset="0.7024" stop-color="#ff00fc"/><stop offset="0.8124" stop-color="#ff00bc"/><stop offset="0.9742" stop-color="#ff0084"/><stop offset="1.0017" stop-color="#ff007e"/></linearGradient><linearGradient id="r97" gradientUnits="userSpaceOnUse" x1="1561.0" y1="0" x2="2543.3" y2="0"><stop offset="0.0000" stop-color="#0032ff"/><stop offset="0.2840" stop-color="#030bff"/><stop offset="0.4367" stop-color="#4d00ff"/><stop offset="0.6505" stop-color="#d700ff"/><stop offset="0.7085" stop-color="#ff00fc"/><stop offset="0.8185" stop-color="#ff00bd"/><stop offset="0.9804" stop-color="#ff0085"/><stop offset="1.0017" stop-color="#ff0080"/></linearGradient><linearGradient id="r98" gradientUnits="userSpaceOnUse" x1="1561.0" y1="0" x2="2543.3" y2="0"><stop offset="0.0000" stop-color="#0030ff"/><stop offset="0.2871" stop-color="#040aff"/><stop offset="0.4367" stop-color="#4c00ff"/><stop offset="0.6505" stop-color="#d300ff"/><stop offset="0.7146" stop-color="#ff00fc"/><stop offset="0.8276" stop-color="#ff00bc"/><stop offset="0.9926" stop-color="#ff0084"/><stop offset="1.0017" stop-color="#ff0082"/></linearGradient><linearGradient id="r99" gradientUnits="userSpaceOnUse" x1="1561.0" y1="0" x2="2543.3" y2="0"><stop offset="0.0000" stop-color="#002fff"/><stop offset="0.2871" stop-color="#0309ff"/><stop offset="0.4367" stop-color="#4a00ff"/><stop offset="0.6536" stop-color="#d200ff"/><stop offset="0.7208" stop-color="#ff00fc"/><stop offset="0.8338" stop-color="#ff00bc"/><stop offset="1.0017" stop-color="#ff0084"/></linearGradient><linearGradient id="r100" gradientUnits="userSpaceOnUse" x1="1561.0" y1="0" x2="2543.3" y2="0"><stop offset="0.0000" stop-color="#002dff"/><stop offset="0.2901" stop-color="#0408ff"/><stop offset="0.4428" stop-color="#4c00ff"/><stop offset="0.6627" stop-color="#d400ff"/><stop offset="0.7269" stop-color="#ff00fc"/><stop offset="0.8399" stop-color="#ff00bd"/><stop offset="1.0017" stop-color="#ff0087"/></linearGradient><linearGradient id="r101" gradientUnits="userSpaceOnUse" x1="1561.0" y1="0" x2="2543.3" y2="0"><stop offset="0.0000" stop-color="#002cff"/><stop offset="0.2901" stop-color="#0307ff"/><stop offset="0.4489" stop-color="#4e00ff"/><stop offset="0.6719" stop-color="#d700ff"/><stop offset="0.7330" stop-color="#ff00fc"/><stop offset="0.8490" stop-color="#ff00bc"/><stop offset="1.0017" stop-color="#ff0089"/></linearGradient><linearGradient id="r102" gradientUnits="userSpaceOnUse" x1="1561.0" y1="0" x2="2543.3" y2="0"><stop offset="0.0000" stop-color="#002bff"/><stop offset="0.2932" stop-color="#0406ff"/><stop offset="0.4673" stop-color="#5600ff"/><stop offset="0.6933" stop-color="#e200ff"/><stop offset="0.7391" stop-color="#ff00fc"/><stop offset="0.8551" stop-color="#ff00bc"/><stop offset="1.0017" stop-color="#ff008b"/></linearGradient><linearGradient id="r103" gradientUnits="userSpaceOnUse" x1="1561.0" y1="0" x2="2543.3" y2="0"><stop offset="0.0000" stop-color="#0029ff"/><stop offset="0.2932" stop-color="#0405ff"/><stop offset="0.4673" stop-color="#5400ff"/><stop offset="0.6963" stop-color="#e000ff"/><stop offset="0.7452" stop-color="#ff00fc"/><stop offset="0.8643" stop-color="#ff00bc"/><stop offset="1.0017" stop-color="#ff008e"/></linearGradient><linearGradient id="r104" gradientUnits="userSpaceOnUse" x1="1561.0" y1="0" x2="2543.3" y2="0"><stop offset="0.0000" stop-color="#0028ff"/><stop offset="0.2962" stop-color="#0404ff"/><stop offset="0.4734" stop-color="#5600ff"/><stop offset="0.7055" stop-color="#e300ff"/><stop offset="0.7513" stop-color="#ff00fc"/><stop offset="0.8704" stop-color="#ff00bc"/><stop offset="1.0017" stop-color="#ff0090"/></linearGradient><linearGradient id="r105" gradientUnits="userSpaceOnUse" x1="1561.0" y1="0" x2="2543.3" y2="0"><stop offset="0.0000" stop-color="#0027ff"/><stop offset="0.2962" stop-color="#0404ff"/><stop offset="0.4734" stop-color="#5400ff"/><stop offset="0.7055" stop-color="#df00ff"/><stop offset="0.7574" stop-color="#ff00fc"/><stop offset="0.8765" stop-color="#ff00bd"/><stop offset="1.0017" stop-color="#ff0092"/></linearGradient><linearGradient id="r106" gradientUnits="userSpaceOnUse" x1="1561.0" y1="0" x2="2543.3" y2="0"><stop offset="0.0000" stop-color="#0026ff"/><stop offset="0.2962" stop-color="#0303ff"/><stop offset="0.4764" stop-color="#5400ff"/><stop offset="0.7116" stop-color="#df00ff"/><stop offset="0.7635" stop-color="#ff00fc"/><stop offset="0.8857" stop-color="#ff00bc"/><stop offset="1.0017" stop-color="#ff0095"/></linearGradient><linearGradient id="r107" gradientUnits="userSpaceOnUse" x1="1561.0" y1="0" x2="2543.3" y2="0"><stop offset="0.0000" stop-color="#0025ff"/><stop offset="0.2993" stop-color="#0402ff"/><stop offset="0.4825" stop-color="#5500ff"/><stop offset="0.7208" stop-color="#e200ff"/><stop offset="0.7696" stop-color="#ff00fc"/><stop offset="0.8918" stop-color="#ff00bc"/><stop offset="1.0017" stop-color="#ff0097"/></linearGradient><linearGradient id="r108" gradientUnits="userSpaceOnUse" x1="1561.0" y1="0" x2="2543.3" y2="0"><stop offset="0.0000" stop-color="#0023ff"/><stop offset="0.2993" stop-color="#0302ff"/><stop offset="0.4825" stop-color="#5400ff"/><stop offset="0.7238" stop-color="#e000ff"/><stop offset="0.7757" stop-color="#ff00fc"/><stop offset="0.9009" stop-color="#ff00bc"/><stop offset="1.0017" stop-color="#ff0099"/></linearGradient><linearGradient id="r109" gradientUnits="userSpaceOnUse" x1="1561.0" y1="0" x2="2543.3" y2="0"><stop offset="0.0000" stop-color="#0022ff"/><stop offset="0.3024" stop-color="#0401ff"/><stop offset="0.4886" stop-color="#5500ff"/><stop offset="0.7299" stop-color="#e000ff"/><stop offset="0.7818" stop-color="#ff00fc"/><stop offset="0.9071" stop-color="#ff00bc"/><stop offset="1.0017" stop-color="#ff009c"/></linearGradient><linearGradient id="r110" gradientUnits="userSpaceOnUse" x1="1561.0" y1="0" x2="2543.3" y2="0"><stop offset="0.0000" stop-color="#0021ff"/><stop offset="0.3024" stop-color="#0400ff"/><stop offset="0.4886" stop-color="#5400ff"/><stop offset="0.7330" stop-color="#df00ff"/><stop offset="0.7879" stop-color="#ff00fc"/><stop offset="0.9162" stop-color="#ff00bb"/><stop offset="1.0017" stop-color="#ff009e"/></linearGradient><linearGradient id="r111" gradientUnits="userSpaceOnUse" x1="1561.0" y1="0" x2="2543.3" y2="0"><stop offset="0.0000" stop-color="#0020ff"/><stop offset="0.3054" stop-color="#0400ff"/><stop offset="0.4948" stop-color="#5500ff"/><stop offset="0.7421" stop-color="#e100ff"/><stop offset="0.7941" stop-color="#ff00fc"/><stop offset="0.9223" stop-color="#ff00bc"/><stop offset="1.0017" stop-color="#ff00a0"/></linearGradient><linearGradient id="r112" gradientUnits="userSpaceOnUse" x1="1561.0" y1="0" x2="2543.3" y2="0"><stop offset="0.0000" stop-color="#001fff"/><stop offset="0.3054" stop-color="#0400ff"/><stop offset="0.4978" stop-color="#5500ff"/><stop offset="0.7482" stop-color="#e100ff"/><stop offset="0.8002" stop-color="#ff00fc"/><stop offset="0.9284" stop-color="#ff00bc"/><stop offset="1.0017" stop-color="#ff00a3"/></linearGradient><linearGradient id="r113" gradientUnits="userSpaceOnUse" x1="1561.0" y1="0" x2="2543.3" y2="0"><stop offset="0.0000" stop-color="#001eff"/><stop offset="0.3085" stop-color="#0400ff"/><stop offset="0.5039" stop-color="#5700ff"/><stop offset="0.7574" stop-color="#e400ff"/><stop offset="0.8063" stop-color="#ff00fc"/><stop offset="0.9376" stop-color="#ff00bb"/><stop offset="1.0017" stop-color="#ff00a5"/></linearGradient><linearGradient id="r114" gradientUnits="userSpaceOnUse" x1="1561.0" y1="0" x2="2543.3" y2="0"><stop offset="0.0000" stop-color="#001dff"/><stop offset="0.3085" stop-color="#0400ff"/><stop offset="0.5039" stop-color="#5500ff"/><stop offset="0.7574" stop-color="#e000ff"/><stop offset="0.8124" stop-color="#ff00fc"/><stop offset="0.9437" stop-color="#ff00bc"/><stop offset="1.0017" stop-color="#ff00a8"/></linearGradient><linearGradient id="r115" gradientUnits="userSpaceOnUse" x1="1561.0" y1="0" x2="2543.3" y2="0"><stop offset="0.0000" stop-color="#001cff"/><stop offset="0.3085" stop-color="#0300ff"/><stop offset="0.5039" stop-color="#5400ff"/><stop offset="0.7605" stop-color="#df00ff"/><stop offset="0.8185" stop-color="#ff00fc"/><stop offset="0.9529" stop-color="#ff00bb"/><stop offset="1.0017" stop-color="#ff00aa"/></linearGradient><linearGradient id="r116" gradientUnits="userSpaceOnUse" x1="1561.0" y1="0" x2="2543.3" y2="0"><stop offset="0.0000" stop-color="#001bff"/><stop offset="0.3115" stop-color="#0400ff"/><stop offset="0.5100" stop-color="#5500ff"/><stop offset="0.7696" stop-color="#e100ff"/><stop offset="0.8246" stop-color="#ff00fb"/><stop offset="0.9590" stop-color="#ff00bc"/><stop offset="1.0017" stop-color="#ff00ad"/></linearGradient><linearGradient id="r117" gradientUnits="userSpaceOnUse" x1="1561.0" y1="0" x2="2543.3" y2="0"><stop offset="0.0000" stop-color="#001aff"/><stop offset="0.3085" stop-color="#0300ff"/><stop offset="0.5039" stop-color="#5100ff"/><stop offset="0.7635" stop-color="#da00ff"/><stop offset="0.8307" stop-color="#ff00fb"/><stop offset="0.9651" stop-color="#ff00bc"/><stop offset="1.0017" stop-color="#ff00af"/></linearGradient><linearGradient id="r118" gradientUnits="userSpaceOnUse" x1="1561.0" y1="0" x2="2543.3" y2="0"><stop offset="0.0000" stop-color="#0019ff"/><stop offset="0.3054" stop-color="#0100ff"/><stop offset="0.4978" stop-color="#4c00ff"/><stop offset="0.7605" stop-color="#d500ff"/><stop offset="0.8368" stop-color="#ff00fb"/><stop offset="0.9742" stop-color="#ff00bb"/><stop offset="1.0017" stop-color="#ff00b2"/></linearGradient><linearGradient id="r119" gradientUnits="userSpaceOnUse" x1="1561.0" y1="0" x2="2543.3" y2="0"><stop offset="0.0000" stop-color="#0018ff"/><stop offset="0.3024" stop-color="#0000ff"/><stop offset="0.4886" stop-color="#4700ff"/><stop offset="0.7513" stop-color="#cd00ff"/><stop offset="0.8429" stop-color="#ff00fb"/><stop offset="0.9804" stop-color="#ff00bc"/><stop offset="1.0017" stop-color="#ff00b4"/></linearGradient><linearGradient id="r120" gradientUnits="userSpaceOnUse" x1="1561.0" y1="0" x2="2543.3" y2="0"><stop offset="0.0000" stop-color="#0018ff"/><stop offset="0.2962" stop-color="#0000ff"/><stop offset="0.4428" stop-color="#3200ff"/><stop offset="0.7024" stop-color="#af00ff"/><stop offset="0.8490" stop-color="#ff00fb"/><stop offset="0.9895" stop-color="#ff00bb"/><stop offset="1.0017" stop-color="#ff00b7"/></linearGradient><linearGradient id="r121" gradientUnits="userSpaceOnUse" x1="1561.0" y1="0" x2="2543.3" y2="0"><stop offset="0.0000" stop-color="#0017ff"/><stop offset="0.2932" stop-color="#0000ff"/><stop offset="0.4123" stop-color="#2500ff"/><stop offset="0.6658" stop-color="#9900ff"/><stop offset="0.8551" stop-color="#ff00fb"/><stop offset="0.9956" stop-color="#ff00bc"/><stop offset="1.0017" stop-color="#ff00b9"/></linearGradient><linearGradient id="r122" gradientUnits="userSpaceOnUse" x1="1561.0" y1="0" x2="2543.3" y2="0"><stop offset="0.0000" stop-color="#0016ff"/><stop offset="0.2871" stop-color="#0000ff"/><stop offset="0.3604" stop-color="#1100ff"/><stop offset="0.5986" stop-color="#7500ff"/><stop offset="0.8612" stop-color="#ff00fb"/><stop offset="1.0017" stop-color="#ff00bc"/></linearGradient><linearGradient id="r123" gradientUnits="userSpaceOnUse" x1="1561.0" y1="0" x2="2543.3" y2="0"><stop offset="0.0000" stop-color="#0015ff"/><stop offset="0.2840" stop-color="#0000ff"/><stop offset="0.3482" stop-color="#0c00ff"/><stop offset="0.5803" stop-color="#6b00ff"/><stop offset="0.8674" stop-color="#ff00fb"/><stop offset="1.0017" stop-color="#ff00bf"/></linearGradient><linearGradient id="r124" gradientUnits="userSpaceOnUse" x1="1561.0" y1="0" x2="2543.3" y2="0"><stop offset="0.0000" stop-color="#0014ff"/><stop offset="0.2779" stop-color="#0000ff"/><stop offset="0.3390" stop-color="#0900ff"/><stop offset="0.5681" stop-color="#6400ff"/><stop offset="0.8490" stop-color="#f500ff"/><stop offset="0.8765" stop-color="#ff00f9"/><stop offset="1.0017" stop-color="#ff00c1"/></linearGradient><linearGradient id="r125" gradientUnits="userSpaceOnUse" x1="1561.0" y1="0" x2="2543.3" y2="0"><stop offset="0.0000" stop-color="#0014ff"/><stop offset="0.2749" stop-color="#0000ff"/><stop offset="0.3359" stop-color="#0700ff"/><stop offset="0.5619" stop-color="#5f00ff"/><stop offset="0.8429" stop-color="#ee00ff"/><stop offset="0.8826" stop-color="#ff00f9"/><stop offset="1.0017" stop-color="#ff00c4"/></linearGradient><linearGradient id="r126" gradientUnits="userSpaceOnUse" x1="1561.0" y1="0" x2="2543.3" y2="0"><stop offset="0.0000" stop-color="#0013ff"/><stop offset="0.2718" stop-color="#0000ff"/><stop offset="0.3359" stop-color="#0700ff"/><stop offset="0.5650" stop-color="#5f00ff"/><stop offset="0.8490" stop-color="#ee00ff"/><stop offset="0.8887" stop-color="#ff00f9"/><stop offset="1.0017" stop-color="#ff00c6"/></linearGradient><linearGradient id="r127" gradientUnits="userSpaceOnUse" x1="1561.0" y1="0" x2="2543.3" y2="0"><stop offset="0.0000" stop-color="#0012ff"/><stop offset="0.2657" stop-color="#0000ff"/><stop offset="0.3359" stop-color="#0700ff"/><stop offset="0.5650" stop-color="#5e00ff"/><stop offset="0.8521" stop-color="#ed00ff"/><stop offset="0.8948" stop-color="#ff00f9"/><stop offset="1.0017" stop-color="#ff00c9"/></linearGradient><linearGradient id="r128" gradientUnits="userSpaceOnUse" x1="1561.0" y1="0" x2="2543.3" y2="0"><stop offset="0.0000" stop-color="#0011ff"/><stop offset="0.2626" stop-color="#0000ff"/><stop offset="0.3329" stop-color="#0500ff"/><stop offset="0.5589" stop-color="#5a00ff"/><stop offset="0.8490" stop-color="#e800ff"/><stop offset="0.8979" stop-color="#ff00fb"/><stop offset="1.0017" stop-color="#ff00cc"/></linearGradient><linearGradient id="r129" gradientUnits="userSpaceOnUse" x1="1561.0" y1="0" x2="2543.3" y2="0"><stop offset="0.0000" stop-color="#0011ff"/><stop offset="0.2596" stop-color="#0000ff"/><stop offset="0.3359" stop-color="#0600ff"/><stop offset="0.5650" stop-color="#5b00ff"/><stop offset="0.8551" stop-color="#e800ff"/><stop offset="0.9040" stop-color="#ff00fb"/><stop offset="1.0017" stop-color="#ff00ce"/></linearGradient><linearGradient id="r130" gradientUnits="userSpaceOnUse" x1="1561.0" y1="0" x2="2543.3" y2="0"><stop offset="0.0000" stop-color="#0010ff"/><stop offset="0.2535" stop-color="#0000ff"/><stop offset="0.3359" stop-color="#0500ff"/><stop offset="0.5650" stop-color="#5900ff"/><stop offset="0.8582" stop-color="#e700ff"/><stop offset="0.9101" stop-color="#ff00fb"/><stop offset="1.0017" stop-color="#ff00d1"/></linearGradient><linearGradient id="r131" gradientUnits="userSpaceOnUse" x1="1561.0" y1="0" x2="2543.3" y2="0"><stop offset="0.0000" stop-color="#000fff"/><stop offset="0.2504" stop-color="#0000ff"/><stop offset="0.3359" stop-color="#0500ff"/><stop offset="0.5681" stop-color="#5900ff"/><stop offset="0.8643" stop-color="#e700ff"/><stop offset="0.9162" stop-color="#ff00fb"/><stop offset="1.0017" stop-color="#ff00d4"/></linearGradient><linearGradient id="r132" gradientUnits="userSpaceOnUse" x1="1561.0" y1="0" x2="2543.3" y2="0"><stop offset="0.0000" stop-color="#000fff"/><stop offset="0.2474" stop-color="#0000ff"/><stop offset="0.3390" stop-color="#0500ff"/><stop offset="0.5742" stop-color="#5b00ff"/><stop offset="0.8735" stop-color="#e900ff"/><stop offset="0.9223" stop-color="#ff00fb"/><stop offset="1.0017" stop-color="#ff00d6"/></linearGradient><linearGradient id="r133" gradientUnits="userSpaceOnUse" x1="1561.0" y1="0" x2="2543.3" y2="0"><stop offset="0.0000" stop-color="#000eff"/><stop offset="0.2443" stop-color="#0000ff"/><stop offset="0.3390" stop-color="#0500ff"/><stop offset="0.5742" stop-color="#5900ff"/><stop offset="0.8735" stop-color="#e600ff"/><stop offset="0.9284" stop-color="#ff00fb"/><stop offset="1.0017" stop-color="#ff00d9"/></linearGradient><linearGradient id="r134" gradientUnits="userSpaceOnUse" x1="1561.0" y1="0" x2="2543.3" y2="0"><stop offset="0.0000" stop-color="#000dff"/><stop offset="0.2413" stop-color="#0000ff"/><stop offset="0.3390" stop-color="#0500ff"/><stop offset="0.5742" stop-color="#5800ff"/><stop offset="0.8765" stop-color="#e500ff"/><stop offset="0.9345" stop-color="#ff00fb"/><stop offset="1.0017" stop-color="#ff00dc"/></linearGradient><linearGradient id="r135" gradientUnits="userSpaceOnUse" x1="1561.0" y1="0" x2="2543.3" y2="0"><stop offset="0.0000" stop-color="#000dff"/><stop offset="0.2382" stop-color="#0000ff"/><stop offset="0.3421" stop-color="#0500ff"/><stop offset="0.5803" stop-color="#5900ff"/><stop offset="0.8857" stop-color="#e600ff"/><stop offset="0.9406" stop-color="#ff00fb"/><stop offset="1.0017" stop-color="#ff00de"/></linearGradient><linearGradient id="r136" gradientUnits="userSpaceOnUse" x1="1561.0" y1="0" x2="2543.3" y2="0"><stop offset="0.0000" stop-color="#000cff"/><stop offset="0.2352" stop-color="#0000ff"/><stop offset="0.3421" stop-color="#0500ff"/><stop offset="0.5803" stop-color="#5800ff"/><stop offset="0.8887" stop-color="#e500ff"/><stop offset="0.9468" stop-color="#ff00fb"/><stop offset="1.0017" stop-color="#ff00e1"/></linearGradient><linearGradient id="r137" gradientUnits="userSpaceOnUse" x1="1561.0" y1="0" x2="2543.3" y2="0"><stop offset="0.0000" stop-color="#000bff"/><stop offset="0.2321" stop-color="#0000ff"/><stop offset="0.3421" stop-color="#0400ff"/><stop offset="0.5833" stop-color="#5800ff"/><stop offset="0.8918" stop-color="#e400ff"/><stop offset="0.9529" stop-color="#ff00fb"/><stop offset="1.0017" stop-color="#ff00e4"/></linearGradient><linearGradient id="r138" gradientUnits="userSpaceOnUse" x1="1561.0" y1="0" x2="2543.3" y2="0"><stop offset="0.0000" stop-color="#000bff"/><stop offset="0.2321" stop-color="#0000ff"/><stop offset="0.3451" stop-color="#0500ff"/><stop offset="0.5894" stop-color="#5900ff"/><stop offset="0.9009" stop-color="#e600ff"/><stop offset="0.9590" stop-color="#ff00fb"/><stop offset="1.0017" stop-color="#ff00e7"/></linearGradient><linearGradient id="r139" gradientUnits="userSpaceOnUse" x1="1561.0" y1="0" x2="2543.3" y2="0"><stop offset="0.0000" stop-color="#000aff"/><stop offset="0.2291" stop-color="#0000ff"/><stop offset="0.3451" stop-color="#0500ff"/><stop offset="0.5894" stop-color="#5800ff"/><stop offset="0.9040" stop-color="#e400ff"/><stop offset="0.9651" stop-color="#ff00fb"/><stop offset="1.0017" stop-color="#ff00ea"/></linearGradient><linearGradient id="r140" gradientUnits="userSpaceOnUse" x1="1561.0" y1="0" x2="2543.3" y2="0"><stop offset="0.0000" stop-color="#000aff"/><stop offset="0.2291" stop-color="#0000ff"/><stop offset="0.3482" stop-color="#0500ff"/><stop offset="0.5955" stop-color="#5900ff"/><stop offset="0.9132" stop-color="#e600ff"/><stop offset="0.9712" stop-color="#ff00fb"/><stop offset="1.0017" stop-color="#ff00ec"/></linearGradient><linearGradient id="r141" gradientUnits="userSpaceOnUse" x1="1561.0" y1="0" x2="2543.3" y2="0"><stop offset="0.0000" stop-color="#0009ff"/><stop offset="0.2291" stop-color="#0000ff"/><stop offset="0.3482" stop-color="#0500ff"/><stop offset="0.5955" stop-color="#5700ff"/><stop offset="0.9162" stop-color="#e500ff"/><stop offset="0.9773" stop-color="#ff00fb"/><stop offset="1.0017" stop-color="#ff00ef"/></linearGradient><linearGradient id="r142" gradientUnits="userSpaceOnUse" x1="1561.0" y1="0" x2="2543.3" y2="0"><stop offset="0.0000" stop-color="#0009ff"/><stop offset="0.2291" stop-color="#0000ff"/><stop offset="0.3482" stop-color="#0400ff"/><stop offset="0.5955" stop-color="#5600ff"/><stop offset="0.9162" stop-color="#e200ff"/><stop offset="0.9834" stop-color="#ff00fb"/><stop offset="1.0017" stop-color="#ff00f2"/></linearGradient><linearGradient id="r143" gradientUnits="userSpaceOnUse" x1="1561.0" y1="0" x2="2543.3" y2="0"><stop offset="0.0000" stop-color="#0008ff"/><stop offset="0.2321" stop-color="#0000ff"/><stop offset="0.3512" stop-color="#0500ff"/><stop offset="0.6047" stop-color="#5800ff"/><stop offset="0.9284" stop-color="#e500ff"/><stop offset="0.9895" stop-color="#ff00fb"/><stop offset="1.0017" stop-color="#ff00f5"/></linearGradient><linearGradient id="r144" gradientUnits="userSpaceOnUse" x1="1561.0" y1="0" x2="2543.3" y2="0"><stop offset="0.0000" stop-color="#0008ff"/><stop offset="0.2382" stop-color="#0000ff"/><stop offset="0.3512" stop-color="#0400ff"/><stop offset="0.6047" stop-color="#5700ff"/><stop offset="0.9315" stop-color="#e400ff"/><stop offset="0.9956" stop-color="#ff00fb"/><stop offset="1.0017" stop-color="#ff00f8"/></linearGradient><linearGradient id="r145" gradientUnits="userSpaceOnUse" x1="1561.0" y1="0" x2="2543.3" y2="0"><stop offset="0.0000" stop-color="#0007ff"/><stop offset="0.2474" stop-color="#0000ff"/><stop offset="0.3543" stop-color="#0500ff"/><stop offset="0.6108" stop-color="#5800ff"/><stop offset="0.9406" stop-color="#e600ff"/><stop offset="1.0017" stop-color="#ff00fb"/></linearGradient><linearGradient id="r146" gradientUnits="userSpaceOnUse" x1="1561.0" y1="0" x2="2543.3" y2="0"><stop offset="0.0000" stop-color="#0007ff"/><stop offset="0.2596" stop-color="#0000ff"/><stop offset="0.3573" stop-color="#0500ff"/><stop offset="0.6169" stop-color="#5900ff"/><stop offset="0.9498" stop-color="#e700ff"/><stop offset="1.0017" stop-color="#ff00fe"/></linearGradient><linearGradient id="r147" gradientUnits="userSpaceOnUse" x1="1561.0" y1="0" x2="2543.3" y2="0"><stop offset="0.0000" stop-color="#0006ff"/><stop offset="0.2779" stop-color="#0000ff"/><stop offset="0.3604" stop-color="#0600ff"/><stop offset="0.6230" stop-color="#5a00ff"/><stop offset="0.9559" stop-color="#e800ff"/><stop offset="1.0017" stop-color="#fe00ff"/></linearGradient><linearGradient id="r148" gradientUnits="userSpaceOnUse" x1="1561.0" y1="0" x2="2543.3" y2="0"><stop offset="0.0000" stop-color="#0006ff"/><stop offset="0.3115" stop-color="#0000ff"/><stop offset="0.3909" stop-color="#0d00ff"/><stop offset="0.6780" stop-color="#6e00ff"/><stop offset="1.0017" stop-color="#fb00ff"/></linearGradient><linearGradient id="r149" gradientUnits="userSpaceOnUse" x1="1561.0" y1="0" x2="2543.3" y2="0"><stop offset="0.0000" stop-color="#0005ff"/><stop offset="0.3573" stop-color="#0400ff"/><stop offset="0.6200" stop-color="#5700ff"/><stop offset="0.9590" stop-color="#e400ff"/><stop offset="1.0017" stop-color="#f800ff"/></linearGradient><linearGradient id="r150" gradientUnits="userSpaceOnUse" x1="1561.0" y1="0" x2="2543.3" y2="0"><stop offset="0.0000" stop-color="#0005ff"/><stop offset="0.3573" stop-color="#0400ff"/><stop offset="0.6200" stop-color="#5600ff"/><stop offset="0.9620" stop-color="#e300ff"/><stop offset="1.0017" stop-color="#f500ff"/></linearGradient><linearGradient id="r151" gradientUnits="userSpaceOnUse" x1="1561.0" y1="0" x2="2543.3" y2="0"><stop offset="0.0000" stop-color="#0004ff"/><stop offset="0.3604" stop-color="#0400ff"/><stop offset="0.6261" stop-color="#5700ff"/><stop offset="0.9681" stop-color="#e300ff"/><stop offset="1.0017" stop-color="#f200ff"/></linearGradient><linearGradient id="r152" gradientUnits="userSpaceOnUse" x1="1561.0" y1="0" x2="2543.3" y2="0"><stop offset="0.0000" stop-color="#0004ff"/><stop offset="0.3604" stop-color="#0400ff"/><stop offset="0.6261" stop-color="#5600ff"/><stop offset="0.9712" stop-color="#e200ff"/><stop offset="1.0017" stop-color="#f000ff"/></linearGradient><linearGradient id="r153" gradientUnits="userSpaceOnUse" x1="1561.0" y1="0" x2="2543.3" y2="0"><stop offset="0.0000" stop-color="#0004ff"/><stop offset="0.3634" stop-color="#0400ff"/><stop offset="0.6322" stop-color="#5700ff"/><stop offset="0.9804" stop-color="#e300ff"/><stop offset="1.0017" stop-color="#ed00ff"/></linearGradient><linearGradient id="r154" gradientUnits="userSpaceOnUse" x1="1561.0" y1="0" x2="2543.3" y2="0"><stop offset="0.0000" stop-color="#0004ff"/><stop offset="0.3634" stop-color="#0400ff"/><stop offset="0.6322" stop-color="#5500ff"/><stop offset="0.9834" stop-color="#e200ff"/><stop offset="1.0017" stop-color="#ea00ff"/></linearGradient><linearGradient id="r155" gradientUnits="userSpaceOnUse" x1="1561.0" y1="0" x2="2543.3" y2="0"><stop offset="0.0000" stop-color="#0004ff"/><stop offset="0.3665" stop-color="#0400ff"/><stop offset="0.6383" stop-color="#5600ff"/><stop offset="0.9895" stop-color="#e200ff"/><stop offset="1.0017" stop-color="#e700ff"/></linearGradient></defs>
<g clip-path="url(#plotclip)"><g clip-path="url(#locclip)"><g filter="url(#vb)"><rect x="1551.0" y="107.0" width="1002.3000000000002" height="5.5" fill="url(#r0)"/><rect x="1551.0" y="112.0" width="1002.3000000000002" height="5.5" fill="url(#r1)"/><rect x="1551.0" y="117.0" width="1002.3000000000002" height="5.5" fill="url(#r2)"/><rect x="1551.0" y="122.0" width="1002.3000000000002" height="5.5" fill="url(#r3)"/><rect x="1551.0" y="127.0" width="1002.3000000000002" height="5.5" fill="url(#r4)"/><rect x="1551.0" y="132.0" width="1002.3000000000002" height="5.5" fill="url(#r5)"/><rect x="1551.0" y="137.0" width="1002.3000000000002" height="5.5" fill="url(#r6)"/><rect x="1551.0" y="142.0" width="1002.3000000000002" height="5.5" fill="url(#r7)"/><rect x="1551.0" y="147.0" width="1002.3000000000002" height="5.5" fill="url(#r8)"/><rect x="1551.0" y="152.0" width="1002.3000000000002" height="5.5" fill="url(#r9)"/><rect x="1551.0" y="157.0" width="1002.3000000000002" height="5.5" fill="url(#r10)"/><rect x="1551.0" y="162.0" width="1002.3000000000002" height="5.5" fill="url(#r11)"/><rect x="1551.0" y="167.0" width="1002.3000000000002" height="5.5" fill="url(#r12)"/><rect x="1551.0" y="172.0" width="1002.3000000000002" height="5.5" fill="url(#r13)"/><rect x="1551.0" y="177.0" width="1002.3000000000002" height="5.5" fill="url(#r14)"/><rect x="1551.0" y="182.0" width="1002.3000000000002" height="5.5" fill="url(#r15)"/><rect x="1551.0" y="187.0" width="1002.3000000000002" height="5.5" fill="url(#r16)"/><rect x="1551.0" y="192.0" width="1002.3000000000002" height="5.5" fill="url(#r17)"/><rect x="1551.0" y="197.0" width="1002.3000000000002" height="5.5" fill="url(#r18)"/><rect x="1551.0" y="202.0" width="1002.3000000000002" height="5.5" fill="url(#r19)"/><rect x="1551.0" y="207.0" width="1002.3000000000002" height="5.5" fill="url(#r20)"/><rect x="1551.0" y="212.0" width="1002.3000000000002" height="5.5" fill="url(#r21)"/><rect x="1551.0" y="217.0" width="1002.3000000000002" height="5.5" fill="url(#r22)"/><rect x="1551.0" y="222.0" width="1002.3000000000002" height="5.5" fill="url(#r23)"/><rect x="1551.0" y="227.0" width="1002.3000000000002" height="5.5" fill="url(#r24)"/><rect x="1551.0" y="232.0" width="1002.3000000000002" height="5.5" fill="url(#r25)"/><rect x="1551.0" y="237.0" width="1002.3000000000002" height="5.5" fill="url(#r26)"/><rect x="1551.0" y="242.0" width="1002.3000000000002" height="5.5" fill="url(#r27)"/><rect x="1551.0" y="247.0" width="1002.3000000000002" height="5.5" fill="url(#r28)"/><rect x="1551.0" y="252.0" width="1002.3000000000002" height="5.5" fill="url(#r29)"/><rect x="1551.0" y="257.0" width="1002.3000000000002" height="5.5" fill="url(#r30)"/><rect x="1551.0" y="262.0" width="1002.3000000000002" height="5.5" fill="url(#r31)"/><rect x="1551.0" y="267.0" width="1002.3000000000002" height="5.5" fill="url(#r32)"/><rect x="1551.0" y="272.0" width="1002.3000000000002" height="5.5" fill="url(#r33)"/><rect x="1551.0" y="277.0" width="1002.3000000000002" height="5.5" fill="url(#r34)"/><rect x="1551.0" y="282.0" width="1002.3000000000002" height="5.5" fill="url(#r35)"/><rect x="1551.0" y="287.0" width="1002.3000000000002" height="5.5" fill="url(#r36)"/><rect x="1551.0" y="292.0" width="1002.3000000000002" height="5.5" fill="url(#r37)"/><rect x="1551.0" y="297.0" width="1002.3000000000002" height="5.5" fill="url(#r38)"/><rect x="1551.0" y="302.0" width="1002.3000000000002" height="5.5" fill="url(#r39)"/><rect x="1551.0" y="307.0" width="1002.3000000000002" height="5.5" fill="url(#r40)"/><rect x="1551.0" y="312.0" width="1002.3000000000002" height="5.5" fill="url(#r41)"/><rect x="1551.0" y="317.0" width="1002.3000000000002" height="5.5" fill="url(#r42)"/><rect x="1551.0" y="322.0" width="1002.3000000000002" height="5.5" fill="url(#r43)"/><rect x="1551.0" y="327.0" width="1002.3000000000002" height="5.5" fill="url(#r44)"/><rect x="1551.0" y="332.0" width="1002.3000000000002" height="5.5" fill="url(#r45)"/><rect x="1551.0" y="337.0" width="1002.3000000000002" height="5.5" fill="url(#r46)"/><rect x="1551.0" y="342.0" width="1002.3000000000002" height="5.5" fill="url(#r47)"/><rect x="1551.0" y="347.0" width="1002.3000000000002" height="5.5" fill="url(#r48)"/><rect x="1551.0" y="352.0" width="1002.3000000000002" height="5.5" fill="url(#r49)"/><rect x="1551.0" y="357.0" width="1002.3000000000002" height="5.5" fill="url(#r50)"/><rect x="1551.0" y="362.0" width="1002.3000000000002" height="5.5" fill="url(#r51)"/><rect x="1551.0" y="367.0" width="1002.3000000000002" height="5.5" fill="url(#r52)"/><rect x="1551.0" y="372.0" width="1002.3000000000002" height="5.5" fill="url(#r53)"/><rect x="1551.0" y="377.0" width="1002.3000000000002" height="5.5" fill="url(#r54)"/><rect x="1551.0" y="382.0" width="1002.3000000000002" height="5.5" fill="url(#r55)"/><rect x="1551.0" y="387.0" width="1002.3000000000002" height="5.5" fill="url(#r56)"/><rect x="1551.0" y="392.0" width="1002.3000000000002" height="5.5" fill="url(#r57)"/><rect x="1551.0" y="397.0" width="1002.3000000000002" height="5.5" fill="url(#r58)"/><rect x="1551.0" y="402.0" width="1002.3000000000002" height="5.5" fill="url(#r59)"/><rect x="1551.0" y="407.0" width="1002.3000000000002" height="5.5" fill="url(#r60)"/><rect x="1551.0" y="412.0" width="1002.3000000000002" height="5.5" fill="url(#r61)"/><rect x="1551.0" y="417.0" width="1002.3000000000002" height="5.5" fill="url(#r62)"/><rect x="1551.0" y="422.0" width="1002.3000000000002" height="5.5" fill="url(#r63)"/><rect x="1551.0" y="427.0" width="1002.3000000000002" height="5.5" fill="url(#r64)"/><rect x="1551.0" y="432.0" width="1002.3000000000002" height="5.5" fill="url(#r65)"/><rect x="1551.0" y="437.0" width="1002.3000000000002" height="5.5" fill="url(#r66)"/><rect x="1551.0" y="442.0" width="1002.3000000000002" height="5.5" fill="url(#r67)"/><rect x="1551.0" y="447.0" width="1002.3000000000002" height="5.5" fill="url(#r68)"/><rect x="1551.0" y="452.0" width="1002.3000000000002" height="5.5" fill="url(#r69)"/><rect x="1551.0" y="457.0" width="1002.3000000000002" height="5.5" fill="url(#r70)"/><rect x="1551.0" y="462.0" width="1002.3000000000002" height="5.5" fill="url(#r71)"/><rect x="1551.0" y="467.0" width="1002.3000000000002" height="5.5" fill="url(#r72)"/><rect x="1551.0" y="472.0" width="1002.3000000000002" height="5.5" fill="url(#r73)"/><rect x="1551.0" y="477.0" width="1002.3000000000002" height="5.5" fill="url(#r74)"/><rect x="1551.0" y="482.0" width="1002.3000000000002" height="5.5" fill="url(#r75)"/><rect x="1551.0" y="487.0" width="1002.3000000000002" height="5.5" fill="url(#r76)"/><rect x="1551.0" y="492.0" width="1002.3000000000002" height="5.5" fill="url(#r77)"/><rect x="1551.0" y="497.0" width="1002.3000000000002" height="5.5" fill="url(#r78)"/><rect x="1551.0" y="502.0" width="1002.3000000000002" height="5.5" fill="url(#r79)"/><rect x="1551.0" y="507.0" width="1002.3000000000002" height="5.5" fill="url(#r80)"/><rect x="1551.0" y="512.0" width="1002.3000000000002" height="5.5" fill="url(#r81)"/><rect x="1551.0" y="517.0" width="1002.3000000000002" height="5.5" fill="url(#r82)"/><rect x="1551.0" y="522.0" width="1002.3000000000002" height="5.5" fill="url(#r83)"/><rect x="1551.0" y="527.0" width="1002.3000000000002" height="5.5" fill="url(#r84)"/><rect x="1551.0" y="532.0" width="1002.3000000000002" height="5.5" fill="url(#r85)"/><rect x="1551.0" y="537.0" width="1002.3000000000002" height="5.5" fill="url(#r86)"/><rect x="1551.0" y="542.0" width="1002.3000000000002" height="5.5" fill="url(#r87)"/><rect x="1551.0" y="547.0" width="1002.3000000000002" height="5.5" fill="url(#r88)"/><rect x="1551.0" y="552.0" width="1002.3000000000002" height="5.5" fill="url(#r89)"/><rect x="1551.0" y="557.0" width="1002.3000000000002" height="5.5" fill="url(#r90)"/><rect x="1551.0" y="562.0" width="1002.3000000000002" height="5.5" fill="url(#r91)"/><rect x="1551.0" y="567.0" width="1002.3000000000002" height="5.5" fill="url(#r92)"/><rect x="1551.0" y="572.0" width="1002.3000000000002" height="5.5" fill="url(#r93)"/><rect x="1551.0" y="577.0" width="1002.3000000000002" height="5.5" fill="url(#r94)"/><rect x="1551.0" y="582.0" width="1002.3000000000002" height="5.5" fill="url(#r95)"/><rect x="1551.0" y="587.0" width="1002.3000000000002" height="5.5" fill="url(#r96)"/><rect x="1551.0" y="592.0" width="1002.3000000000002" height="5.5" fill="url(#r97)"/><rect x="1551.0" y="597.0" width="1002.3000000000002" height="5.5" fill="url(#r98)"/><rect x="1551.0" y="602.0" width="1002.3000000000002" height="5.5" fill="url(#r99)"/><rect x="1551.0" y="607.0" width="1002.3000000000002" height="5.5" fill="url(#r100)"/><rect x="1551.0" y="612.0" width="1002.3000000000002" height="5.5" fill="url(#r101)"/><rect x="1551.0" y="617.0" width="1002.3000000000002" height="5.5" fill="url(#r102)"/><rect x="1551.0" y="622.0" width="1002.3000000000002" height="5.5" fill="url(#r103)"/><rect x="1551.0" y="627.0" width="1002.3000000000002" height="5.5" fill="url(#r104)"/><rect x="1551.0" y="632.0" width="1002.3000000000002" height="5.5" fill="url(#r105)"/><rect x="1551.0" y="637.0" width="1002.3000000000002" height="5.5" fill="url(#r106)"/><rect x="1551.0" y="642.0" width="1002.3000000000002" height="5.5" fill="url(#r107)"/><rect x="1551.0" y="647.0" width="1002.3000000000002" height="5.5" fill="url(#r108)"/><rect x="1551.0" y="652.0" width="1002.3000000000002" height="5.5" fill="url(#r109)"/><rect x="1551.0" y="657.0" width="1002.3000000000002" height="5.5" fill="url(#r110)"/><rect x="1551.0" y="662.0" width="1002.3000000000002" height="5.5" fill="url(#r111)"/><rect x="1551.0" y="667.0" width="1002.3000000000002" height="5.5" fill="url(#r112)"/><rect x="1551.0" y="672.0" width="1002.3000000000002" height="5.5" fill="url(#r113)"/><rect x="1551.0" y="677.0" width="1002.3000000000002" height="5.5" fill="url(#r114)"/><rect x="1551.0" y="682.0" width="1002.3000000000002" height="5.5" fill="url(#r115)"/><rect x="1551.0" y="687.0" width="1002.3000000000002" height="5.5" fill="url(#r116)"/><rect x="1551.0" y="692.0" width="1002.3000000000002" height="5.5" fill="url(#r117)"/><rect x="1551.0" y="697.0" width="1002.3000000000002" height="5.5" fill="url(#r118)"/><rect x="1551.0" y="702.0" width="1002.3000000000002" height="5.5" fill="url(#r119)"/><rect x="1551.0" y="707.0" width="1002.3000000000002" height="5.5" fill="url(#r120)"/><rect x="1551.0" y="712.0" width="1002.3000000000002" height="5.5" fill="url(#r121)"/><rect x="1551.0" y="717.0" width="1002.3000000000002" height="5.5" fill="url(#r122)"/><rect x="1551.0" y="722.0" width="1002.3000000000002" height="5.5" fill="url(#r123)"/><rect x="1551.0" y="727.0" width="1002.3000000000002" height="5.5" fill="url(#r124)"/><rect x="1551.0" y="732.0" width="1002.3000000000002" height="5.5" fill="url(#r125)"/><rect x="1551.0" y="737.0" width="1002.3000000000002" height="5.5" fill="url(#r126)"/><rect x="1551.0" y="742.0" width="1002.3000000000002" height="5.5" fill="url(#r127)"/><rect x="1551.0" y="747.0" width="1002.3000000000002" height="5.5" fill="url(#r128)"/><rect x="1551.0" y="752.0" width="1002.3000000000002" height="5.5" fill="url(#r129)"/><rect x="1551.0" y="757.0" width="1002.3000000000002" height="5.5" fill="url(#r130)"/><rect x="1551.0" y="762.0" width="1002.3000000000002" height="5.5" fill="url(#r131)"/><rect x="1551.0" y="767.0" width="1002.3000000000002" height="5.5" fill="url(#r132)"/><rect x="1551.0" y="772.0" width="1002.3000000000002" height="5.5" fill="url(#r133)"/><rect x="1551.0" y="777.0" width="1002.3000000000002" height="5.5" fill="url(#r134)"/><rect x="1551.0" y="782.0" width="1002.3000000000002" height="5.5" fill="url(#r135)"/><rect x="1551.0" y="787.0" width="1002.3000000000002" height="5.5" fill="url(#r136)"/><rect x="1551.0" y="792.0" width="1002.3000000000002" height="5.5" fill="url(#r137)"/><rect x="1551.0" y="797.0" width="1002.3000000000002" height="5.5" fill="url(#r138)"/><rect x="1551.0" y="802.0" width="1002.3000000000002" height="5.5" fill="url(#r139)"/><rect x="1551.0" y="807.0" width="1002.3000000000002" height="5.5" fill="url(#r140)"/><rect x="1551.0" y="812.0" width="1002.3000000000002" height="5.5" fill="url(#r141)"/><rect x="1551.0" y="817.0" width="1002.3000000000002" height="5.5" fill="url(#r142)"/><rect x="1551.0" y="822.0" width="1002.3000000000002" height="5.5" fill="url(#r143)"/><rect x="1551.0" y="827.0" width="1002.3000000000002" height="5.5" fill="url(#r144)"/><rect x="1551.0" y="832.0" width="1002.3000000000002" height="5.5" fill="url(#r145)"/><rect x="1551.0" y="837.0" width="1002.3000000000002" height="5.5" fill="url(#r146)"/><rect x="1551.0" y="842.0" width="1002.3000000000002" height="5.5" fill="url(#r147)"/><rect x="1551.0" y="847.0" width="1002.3000000000002" height="5.5" fill="url(#r148)"/><rect x="1551.0" y="852.0" width="1002.3000000000002" height="5.5" fill="url(#r149)"/><rect x="1551.0" y="857.0" width="1002.3000000000002" height="5.5" fill="url(#r150)"/><rect x="1551.0" y="862.0" width="1002.3000000000002" height="5.5" fill="url(#r151)"/><rect x="1551.0" y="867.0" width="1002.3000000000002" height="5.5" fill="url(#r152)"/><rect x="1551.0" y="872.0" width="1002.3000000000002" height="5.5" fill="url(#r153)"/><rect x="1551.0" y="877.0" width="1002.3000000000002" height="5.5" fill="url(#r154)"/><rect x="1551.0" y="882.0" width="1002.3000000000002" height="5.5" fill="url(#r155)"/></g></g>
<path d="M1981.4,851.2 L1981.3,851.9 L1981.2,851.9 L1981.2,851.8 L1981.2,851.8 L1981.3,851.8 L1981.5,851.8 L1981.6,851.7 L1981.6,851.7 L1981.5,851.9 L1981.3,852.0 L1981.0,852.2 L1980.7,852.3 L1980.5,852.3 L1980.4,852.3 L1980.4,852.3 L1980.4,852.3 L1980.5,852.2 L1980.4,852.3 L1980.3,852.4 L1980.1,852.6 L1979.8,852.7 L1979.5,852.7 L1979.3,852.7 L1979.1,852.7 L1978.9,852.7 L1978.8,852.7 L1978.6,852.7 L1978.4,852.7 L1978.1,852.7 L1977.9,852.7 L1977.7,852.7 L1977.5,852.7 L1977.3,852.8 L1977.0,852.8 L1976.6,852.8 L1976.1,852.7 L1975.7,852.5 L1975.2,852.3 L1974.7,852.1 L1974.1,851.8 L1973.5,851.4 L1972.8,851.0 L1972.0,850.5 L1971.1,849.9 L1970.2,849.2 L1969.2,848.6 L1968.2,847.8 L1967.1,847.0 L1966.0,846.1 L1964.8,845.2 L1963.5,844.1 L1962.0,843.0 L1960.4,841.7 L1958.8,840.4 L1957.0,838.9 L1955.2,837.4 L1953.3,835.8 L1951.3,834.1 L1949.2,832.3 L1947.0,830.4 L1944.7,828.5 L1942.3,826.5 L1939.9,824.4 L1937.3,822.3 L1934.5,820.0 L1931.5,817.6 L1928.4,815.0 L1925.1,812.3 L1921.6,809.4 L1918.0,806.5 L1914.2,803.4 L1910.4,800.2 L1906.4,796.9 L1902.3,793.5 L1897.9,789.8 L1893.4,785.9 L1888.7,781.8 L1883.8,777.5 L1878.7,772.9 L1873.3,768.0 L1867.8,762.8 L1862.2,757.3 L1856.4,751.7 L1850.3,745.7 L1843.9,739.0 L1837.1,731.4 L1829.7,723.0 L1821.8,713.9 L1813.6,704.0 L1805.1,693.5 L1796.3,682.2 L1787.2,670.1 L1777.8,657.3 L1768.1,643.8 L1758.2,629.6 L1748.2,614.8 L1738.0,599.2 L1727.5,582.8 L1716.9,565.8 L1706.3,548.5 L1696.0,531.0 L1685.6,513.2 L1675.2,495.1 L1664.9,476.7 L1655.0,458.4 L1645.7,440.4 L1637.0,422.5 L1628.6,404.6 L1620.7,387.0 L1613.3,369.8 L1606.4,353.3 L1600.1,337.5 L1594.3,322.1 L1588.9,307.3 L1584.1,293.2 L1579.8,279.9 L1576.0,267.5 L1572.8,256.0 L1570.1,245.1 L1567.9,234.9 L1566.0,225.4 L1564.5,216.5 L1563.5,208.4 L1562.9,200.9 L1562.6,193.9 L1562.7,187.3 L1563.0,181.1 L1563.8,175.4 L1564.9,170.2 L1566.3,165.4 L1568.0,160.9 L1569.9,156.8 L1572.3,153.1 L1574.9,149.8 L1577.7,146.8 L1580.7,144.1 L1583.9,141.8 L1587.3,139.8 L1591.0,138.2 L1594.8,136.8 L1598.6,135.5 L1602.7,134.5 L1606.8,133.8 L1611.1,133.2 L1615.5,132.8 L1619.9,132.4 L1624.4,132.1 L1629.0,131.9 L1633.6,131.7 L1638.3,131.7 L1642.9,131.6 L1647.6,131.6 L1652.2,131.6 L1656.9,131.7 L1661.6,131.8 L1666.3,131.9 L1671.1,132.1 L1675.9,132.3 L1680.8,132.5 L1685.7,132.8 L1690.7,133.1 L1695.8,133.4 L1701.0,133.7 L1706.2,134.1 L1711.6,134.5 L1717.0,135.0 L1722.5,135.4 L1728.1,135.9 L1733.8,136.4 L1739.6,137.0 L1745.6,137.5 L1751.6,138.1 L1757.7,138.7 L1764.0,139.4 L1770.4,140.0 L1776.9,140.7 L1783.6,141.4 L1790.4,142.1 L1797.4,142.9 L1804.5,143.6 L1811.7,144.4 L1819.1,145.3 L1826.6,146.1 L1834.3,147.0 L1842.1,147.8 L1850.1,148.7 L1858.3,149.7 L1866.7,150.6 L1875.2,151.6 L1883.9,152.5 L1892.7,153.5 L1901.7,154.6 L1910.9,155.6 L1920.3,156.7 L1929.8,157.8 L1939.5,158.9 L1949.4,160.1 L1959.4,161.2 L1969.6,162.4 L1980.0,163.6 L1990.5,164.8 L2001.2,166.0 L2012.1,167.3 L2023.1,168.6 L2034.3,169.8 L2045.6,171.1 L2057.0,172.5 L2068.5,173.8 L2080.2,175.1 L2092.0,176.5 L2103.8,177.8 L2115.7,179.2 L2127.7,180.6 L2139.7,182.0 L2151.7,183.4 L2163.6,184.7 L2175.3,186.1 L2187.0,187.4 L2198.6,188.8 L2210.1,190.1 L2221.6,191.4 L2233.0,192.7 L2244.5,194.1 L2255.9,195.4 L2267.1,196.6 L2278.0,197.9 L2288.7,199.1 L2299.1,200.3 L2309.3,201.5 L2319.4,202.6 L2329.1,203.7 L2338.6,204.8 L2347.9,205.9 L2357.0,207.0 L2365.8,208.0 L2374.3,209.0 L2382.5,209.9 L2390.5,210.8 L2398.1,211.7 L2405.6,212.6 L2412.7,213.4 L2419.7,214.2 L2426.3,215.0 L2432.7,215.7 L2438.9,216.4 L2444.9,217.1 L2450.7,217.7 L2456.3,218.4 L2461.7,219.0 L2467.0,219.6 L2472.1,220.2 L2477.1,220.8 L2481.9,221.4 L2486.6,221.9 L2491.2,222.4 L2495.6,222.9 L2499.9,223.4 L2504.0,223.9 L2508.0,224.4 L2511.8,224.8 L2515.5,225.2 L2519.0,225.6 L2522.4,226.0 L2525.6,226.4 L2528.7,226.7 L2531.6,227.0 L2534.3,227.4 L2536.6,227.6 L2538.9,227.9 L2541.4,228.2 L2544.1,228.5 L2547.3,228.9 L2551.0,229.3 L2554.7,229.7 L2558.2,230.1 L2561.1,230.5 L2563.4,230.7 L2565.3,230.9 L2566.9,231.1 L2568.3,231.3 L2569.7,231.5 L2571.1,231.6 L2572.4,231.8 L2573.7,231.9 L2574.8,232.0 L2575.9,232.2 L2576.9,232.3 L2577.9,232.4 L2578.8,232.5 L2579.6,232.6 L2580.3,232.7 L2580.7,232.7 L2581.1,232.8 L2581.3,232.8 L2581.4,232.8 L2581.6,232.8 L2581.5,233.5 Z M2373.5,209.5 L1722.4,143.8 L1848.2,673.0 Z" fill="#000" fill-opacity="0.4" fill-rule="evenodd"/>
</g>
<rect x="1561" y="117" width="982" height="756" fill="none" stroke="#979797" stroke-width="2"/>
<line x1="1552.0" y1="873.0" x2="1561.0" y2="873.0" stroke="#979797" stroke-width="2"/>
<text x="1551.5" y="881.2" font-size="23" text-anchor="end" fill="#d8d8d8" stroke="#d8d8d8" stroke-width="0.2">0</text>
<line x1="1561.0" y1="873.2" x2="1561.0" y2="882.7" stroke="#979797" stroke-width="2"/>
<text x="1561.0" y="906.5" font-size="23" text-anchor="middle" fill="#d8d8d8" stroke="#d8d8d8" stroke-width="0.2">0</text>
<line x1="1552.0" y1="810.0" x2="1561.0" y2="810.0" stroke="#979797" stroke-width="2"/>
<text x="1551.5" y="818.3" font-size="23" text-anchor="end" fill="#d8d8d8" stroke="#d8d8d8" stroke-width="0.2">0.05</text>
<line x1="1643.0" y1="873.2" x2="1643.0" y2="882.7" stroke="#979797" stroke-width="2"/>
<text x="1642.8" y="906.5" font-size="23" text-anchor="middle" fill="#d8d8d8" stroke="#d8d8d8" stroke-width="0.2">0.05</text>
<line x1="1552.0" y1="747.0" x2="1561.0" y2="747.0" stroke="#979797" stroke-width="2"/>
<text x="1551.5" y="755.4" font-size="23" text-anchor="end" fill="#d8d8d8" stroke="#d8d8d8" stroke-width="0.2">0.1</text>
<line x1="1725.0" y1="873.2" x2="1725.0" y2="882.7" stroke="#979797" stroke-width="2"/>
<text x="1724.7" y="906.5" font-size="23" text-anchor="middle" fill="#d8d8d8" stroke="#d8d8d8" stroke-width="0.2">0.1</text>
<line x1="1552.0" y1="684.0" x2="1561.0" y2="684.0" stroke="#979797" stroke-width="2"/>
<text x="1551.5" y="692.5" font-size="23" text-anchor="end" fill="#d8d8d8" stroke="#d8d8d8" stroke-width="0.2">0.15</text>
<line x1="1807.0" y1="873.2" x2="1807.0" y2="882.7" stroke="#979797" stroke-width="2"/>
<text x="1806.5" y="906.5" font-size="23" text-anchor="middle" fill="#d8d8d8" stroke="#d8d8d8" stroke-width="0.2">0.15</text>
<line x1="1552.0" y1="622.0" x2="1561.0" y2="622.0" stroke="#979797" stroke-width="2"/>
<text x="1551.5" y="629.6" font-size="23" text-anchor="end" fill="#d8d8d8" stroke="#d8d8d8" stroke-width="0.2">0.2</text>
<line x1="1888.0" y1="873.2" x2="1888.0" y2="882.7" stroke="#979797" stroke-width="2"/>
<text x="1888.4" y="906.5" font-size="23" text-anchor="middle" fill="#d8d8d8" stroke="#d8d8d8" stroke-width="0.2">0.2</text>
<line x1="1552.0" y1="559.0" x2="1561.0" y2="559.0" stroke="#979797" stroke-width="2"/>
<text x="1551.5" y="566.7" font-size="23" text-anchor="end" fill="#d8d8d8" stroke="#d8d8d8" stroke-width="0.2">0.25</text>
<line x1="1970.0" y1="873.2" x2="1970.0" y2="882.7" stroke="#979797" stroke-width="2"/>
<text x="1970.2" y="906.5" font-size="23" text-anchor="middle" fill="#d8d8d8" stroke="#d8d8d8" stroke-width="0.2">0.25</text>
<line x1="1552.0" y1="496.0" x2="1561.0" y2="496.0" stroke="#979797" stroke-width="2"/>
<text x="1551.5" y="503.8" font-size="23" text-anchor="end" fill="#d8d8d8" stroke="#d8d8d8" stroke-width="0.2">0.3</text>
<line x1="2052.0" y1="873.2" x2="2052.0" y2="882.7" stroke="#979797" stroke-width="2"/>
<text x="2052.1" y="906.5" font-size="23" text-anchor="middle" fill="#d8d8d8" stroke="#d8d8d8" stroke-width="0.2">0.3</text>
<line x1="1552.0" y1="433.0" x2="1561.0" y2="433.0" stroke="#979797" stroke-width="2"/>
<text x="1551.5" y="440.9" font-size="23" text-anchor="end" fill="#d8d8d8" stroke="#d8d8d8" stroke-width="0.2">0.35</text>
<line x1="2134.0" y1="873.2" x2="2134.0" y2="882.7" stroke="#979797" stroke-width="2"/>
<text x="2133.9" y="906.5" font-size="23" text-anchor="middle" fill="#d8d8d8" stroke="#d8d8d8" stroke-width="0.2">0.35</text>
<line x1="1552.0" y1="370.0" x2="1561.0" y2="370.0" stroke="#979797" stroke-width="2"/>
<text x="1551.5" y="378.0" font-size="23" text-anchor="end" fill="#d8d8d8" stroke="#d8d8d8" stroke-width="0.2">0.4</text>
<line x1="2216.0" y1="873.2" x2="2216.0" y2="882.7" stroke="#979797" stroke-width="2"/>
<text x="2215.8" y="906.5" font-size="23" text-anchor="middle" fill="#d8d8d8" stroke="#d8d8d8" stroke-width="0.2">0.4</text>
<line x1="1552.0" y1="307.0" x2="1561.0" y2="307.0" stroke="#979797" stroke-width="2"/>
<text x="1551.5" y="315.1" font-size="23" text-anchor="end" fill="#d8d8d8" stroke="#d8d8d8" stroke-width="0.2">0.45</text>
<line x1="2298.0" y1="873.2" x2="2298.0" y2="882.7" stroke="#979797" stroke-width="2"/>
<text x="2297.7" y="906.5" font-size="23" text-anchor="middle" fill="#d8d8d8" stroke="#d8d8d8" stroke-width="0.2">0.45</text>
<line x1="1552.0" y1="244.0" x2="1561.0" y2="244.0" stroke="#979797" stroke-width="2"/>
<text x="1551.5" y="252.2" font-size="23" text-anchor="end" fill="#d8d8d8" stroke="#d8d8d8" stroke-width="0.2">0.5</text>
<line x1="2380.0" y1="873.2" x2="2380.0" y2="882.7" stroke="#979797" stroke-width="2"/>
<text x="2379.5" y="906.5" font-size="23" text-anchor="middle" fill="#d8d8d8" stroke="#d8d8d8" stroke-width="0.2">0.5</text>
<line x1="1552.0" y1="181.0" x2="1561.0" y2="181.0" stroke="#979797" stroke-width="2"/>
<text x="1551.5" y="189.3" font-size="23" text-anchor="end" fill="#d8d8d8" stroke="#d8d8d8" stroke-width="0.2">0.55</text>
<line x1="2461.0" y1="873.2" x2="2461.0" y2="882.7" stroke="#979797" stroke-width="2"/>
<text x="2461.3" y="906.5" font-size="23" text-anchor="middle" fill="#d8d8d8" stroke="#d8d8d8" stroke-width="0.2">0.55</text>
<g fill="none" stroke="#f4f4f4" stroke-width="2.6">
<rect x="1712.4" y="133.9" width="19.6" height="19.6"/>
<rect x="1886.2" y="150.3" width="19.6" height="19.6"/>
<rect x="1850.8" y="175.7" width="19.6" height="19.6"/>
<rect x="1794.2" y="190.1" width="19.6" height="19.6"/>
<rect x="1925.9" y="171.3" width="19.6" height="19.6"/>
<rect x="1969.6" y="180.2" width="19.6" height="19.6"/>
<rect x="1846.2" y="211.5" width="19.6" height="19.6"/>
<rect x="2038.1" y="189.5" width="19.6" height="19.6"/>
<rect x="2042.7" y="194.2" width="19.6" height="19.6"/>
<rect x="1999.0" y="198.7" width="19.6" height="19.6"/>
<rect x="1981.5" y="203.9" width="19.6" height="19.6"/>
<rect x="1958.9" y="210.0" width="19.6" height="19.6"/>
<rect x="2017.5" y="210.0" width="19.6" height="19.6"/>
<rect x="1929.0" y="225.5" width="19.6" height="19.6"/>
<rect x="1953.7" y="226.5" width="19.6" height="19.6"/>
<rect x="1980.5" y="225.5" width="19.6" height="19.6"/>
<rect x="1996.9" y="221.4" width="19.6" height="19.6"/>
<rect x="1932.1" y="244.0" width="19.6" height="19.6"/>
<rect x="1953.7" y="239.9" width="19.6" height="19.6"/>
<rect x="2059.7" y="253.3" width="19.6" height="19.6"/>
<rect x="1804.5" y="263.6" width="19.6" height="19.6"/>
<rect x="1748.2" y="291.0" width="19.6" height="19.6"/>
<rect x="1835.7" y="330.1" width="19.6" height="19.6"/>
<rect x="1867.2" y="338.7" width="19.6" height="19.6"/>
<rect x="1775.2" y="343.5" width="19.6" height="19.6"/>
<rect x="2021.7" y="326.4" width="19.6" height="19.6"/>
<rect x="1919.7" y="366.1" width="19.6" height="19.6"/>
<rect x="2363.0" y="198.8" width="19.6" height="19.6"/>
<rect x="2162.1" y="232.4" width="19.6" height="19.6"/>
<rect x="2082.0" y="447.8" width="19.6" height="19.6"/>
<rect x="1838.0" y="414.2" width="19.6" height="19.6"/>
<rect x="1844.3" y="489.5" width="19.6" height="19.6"/>
<rect x="1838.0" y="663.2" width="19.6" height="19.6"/>
</g>
<rect x="1873.4" y="271.8" width="19.6" height="19.6" fill="none" stroke="#000" stroke-width="2.6"/>
<g stroke="#000" stroke-width="2">
<circle cx="1735.0" cy="158.7" r="6" fill="#00dd00"/>
<circle cx="1903.8" cy="173.5" r="6" fill="#ffee00"/>
<circle cx="1866.7" cy="194.1" r="6" fill="#b0b060"/>
<circle cx="1808.0" cy="204.4" r="6" fill="#6a8a5a"/>
<circle cx="1939.8" cy="190.0" r="6" fill="#d8c060"/>
<circle cx="1979.4" cy="195.8" r="6" fill="#d8a850"/>
<circle cx="1856.0" cy="222.9" r="6" fill="#606850"/>
<circle cx="2047.9" cy="204.4" r="6" fill="#c08850"/>
<circle cx="2058.6" cy="206.5" r="6" fill="#a07040"/>
<circle cx="2018.0" cy="214.7" r="6" fill="#7a5a40"/>
<circle cx="2037.6" cy="219.2" r="6" fill="#7a5040"/>
<circle cx="1998.5" cy="216.8" r="6" fill="#8a6a50"/>
<circle cx="1968.7" cy="225.0" r="6" fill="#c09070"/>
<circle cx="1998.5" cy="227.0" r="6" fill="#d09878"/>
<circle cx="2006.7" cy="230.1" r="6" fill="#c89070"/>
<circle cx="2004.7" cy="234.3" r="6" fill="#d8a080"/>
<circle cx="1987.2" cy="235.9" r="6" fill="#c89070"/>
<circle cx="1981.0" cy="232.2" r="6" fill="#b88868"/>
<circle cx="1968.7" cy="236.3" r="6" fill="#c09070"/>
<circle cx="1960.4" cy="236.3" r="6" fill="#b08870"/>
<circle cx="1939.8" cy="239.8" r="6" fill="#f0c8a8"/>
<circle cx="1966.6" cy="246.6" r="6" fill="#705040"/>
<circle cx="1941.9" cy="254.8" r="6" fill="#f0c0a0"/>
<circle cx="2070.6" cy="263.1" r="6" fill="#b87078"/>
<circle cx="1814.3" cy="273.4" r="6" fill="#90b0a8"/>
<circle cx="1883.2" cy="279.5" r="6" fill="#a0a0a0"/>
<circle cx="1759.7" cy="301.2" r="6" fill="#00ffff"/>
<circle cx="1839.4" cy="334.1" r="6" fill="#6a80a0"/>
<circle cx="1872.9" cy="339.9" r="6" fill="#8a88b0"/>
<circle cx="1778.8" cy="344.4" r="6" fill="#5a88a0"/>
<circle cx="2027.3" cy="334.1" r="6" fill="#b06090"/>
<circle cx="1923.4" cy="374.2" r="6" fill="#504870"/>
<circle cx="2384.8" cy="214.9" r="6" fill="#ee1111"/>
<circle cx="2186.6" cy="242.2" r="6" fill="#a05050"/>
<circle cx="2086.6" cy="451.8" r="6" fill="#ee00ee"/>
<circle cx="1837.2" cy="413.6" r="6" fill="#606890"/>
<circle cx="1837.2" cy="495.3" r="6" fill="#505890"/>
<circle cx="1823.0" cy="660.5" r="6" fill="#0000ee"/>
</g>
<circle cx="1864.7" cy="289.8" r="7" fill="#000"/>
<rect x="2225.4" y="602.8" width="312.0" height="209.0" fill="#1e1e1e"/>
<linearGradient id="ins" x1="0" y1="0" x2="1" y2="1"><stop offset="0" stop-color="#ff8a2c"/><stop offset="0.5" stop-color="#ff6428"/><stop offset="1" stop-color="#ff4222"/></linearGradient>
<rect x="2228.8" y="608.1" width="305.4" height="200.5" fill="#8c8c8c"/>
<rect x="2230.3" y="609.6" width="302.2" height="197.3" fill="url(#ins)"/>
<clipPath id="insclip"><rect x="2230.3" y="609.6" width="302.2" height="197.3"/></clipPath>
<g clip-path="url(#insclip)">
<g fill="none" stroke="#f4f4f4" stroke-width="2.8">
<rect x="2250.6" y="655.5" width="20.4" height="20.4"/>
<rect x="2407.8" y="637.8" width="20.4" height="20.4"/>
<rect x="2480.9" y="647.0" width="20.4" height="20.4"/>
<rect x="2370.0" y="696.7" width="20.4" height="20.4"/>
<rect x="2388.6" y="719.9" width="20.4" height="20.4"/>
<rect x="2246.7" y="725.9" width="20.4" height="20.4"/>
<rect x="2263.4" y="747.3" width="20.4" height="20.4"/>
<rect x="2357.7" y="747.3" width="20.4" height="20.4"/>
<rect x="2226.5" y="721.7" width="20.4" height="20.4"/>
<rect x="2515.1" y="698.8" width="20.4" height="20.4"/>
</g><g stroke="#000" stroke-width="2">
<circle cx="2236.2" cy="683.9" r="6.3" fill="#b08868"/>
<circle cx="2420.1" cy="667.9" r="6.3" fill="#7a5a40"/>
<circle cx="2516.5" cy="675.8" r="6.3" fill="#6a5040"/>
<circle cx="2349.1" cy="725.9" r="6.3" fill="#c09070"/>
<circle cx="2370.0" cy="746.8" r="6.3" fill="#c08a68"/>
<circle cx="2233.0" cy="751.0" r="6.3" fill="#b08060"/>
<circle cx="2246.7" cy="771.7" r="6.3" fill="#c09078"/>
<circle cx="2332.0" cy="776.0" r="6.3" fill="#e8a888"/>
</g></g>
<rect x="2152.0" y="822.5" width="386.5" height="42.5" fill="#333333"/>
<text x="2153.0" y="854.4" font-size="29.5" fill="#f0ece8" textLength="357.0" lengthAdjust="spacingAndGlyphs" stroke="#f0ece8" stroke-width="0.5">RGB Triplet: 207, 143, 102</text>
<text x="75.0" y="975.9" font-size="44" fill="#f0ece8" textLength="356.0" lengthAdjust="spacingAndGlyphs" stroke="#f0ece8" stroke-width="0.6">Avg dE2000: 1.61</text>
<text x="69.4" y="1039.0" font-size="44" fill="#f0ece8" textLength="370.3" lengthAdjust="spacingAndGlyphs" stroke="#f0ece8" stroke-width="0.6">Max dE2000: 4.48</text>
<text x="20.0" y="1112.6" font-size="45" fill="#f0ece8" textLength="336.0" lengthAdjust="spacingAndGlyphs" stroke="#f0ece8" stroke-width="0.6">Current Reading</text>
<text x="20.0" y="1166.5" font-size="38.5" fill="#f0ece8" textLength="156.5" lengthAdjust="spacingAndGlyphs" stroke="#f0ece8" stroke-width="0.6">x: 0.4438</text>
<text x="260.0" y="1166.5" font-size="38.5" fill="#f0ece8" textLength="157.6" lengthAdjust="spacingAndGlyphs" stroke="#f0ece8" stroke-width="0.6">y: 0.3778</text>
<text x="20.0" y="1229.4" font-size="38.5" fill="#f0ece8" textLength="147.6" lengthAdjust="spacingAndGlyphs" stroke="#f0ece8" stroke-width="0.6">fL: 23.76</text>
<text x="20.0" y="1280.0" font-size="38.5" fill="#f0ece8" textLength="221.0" lengthAdjust="spacingAndGlyphs" stroke="#f0ece8" stroke-width="0.6">cd/m²: 81.41</text>
<rect x="489.5" y="949.0" width="2070.5" height="347.8" fill="#000"/>
<rect x="491.5" y="951.0" width="2065.5" height="37.6" fill="url(#hdr)"/>
<clipPath id="tclip"><rect x="491.5" y="951" width="2065.5" height="346"/></clipPath>
<g clip-path="url(#tclip)">
<text x="806.6" y="977.6" font-size="21.5" text-anchor="middle" fill="#ecebea" textLength="72.0" lengthAdjust="spacingAndGlyphs">White</text>
<text x="941.7" y="977.6" font-size="21.5" text-anchor="middle" fill="#ecebea" textLength="92.2" lengthAdjust="spacingAndGlyphs">Gray 80</text>
<text x="1076.4" y="977.6" font-size="21.5" text-anchor="middle" fill="#ecebea" textLength="91.6" lengthAdjust="spacingAndGlyphs">Gray 65</text>
<text x="1212.0" y="977.6" font-size="21.5" text-anchor="middle" fill="#ecebea" textLength="92.0" lengthAdjust="spacingAndGlyphs">Gray 50</text>
<text x="1338.8" y="977.6" font-size="21.5" text-anchor="middle" fill="#ecebea" textLength="92.5" lengthAdjust="spacingAndGlyphs">Gray 35</text>
<text x="1458.8" y="977.6" font-size="21.5" text-anchor="middle" fill="#ecebea" textLength="62.5" lengthAdjust="spacingAndGlyphs">Black</text>
<text x="1582.2" y="977.6" font-size="21.5" text-anchor="middle" fill="#ecebea" textLength="112.5" lengthAdjust="spacingAndGlyphs">Dark Skin</text>
<text x="1712.5" y="977.6" font-size="21.5" text-anchor="middle" fill="#ecebea" textLength="115.0" lengthAdjust="spacingAndGlyphs">Light Skin</text>
<text x="1838.0" y="977.6" font-size="21.5" text-anchor="middle" fill="#ecebea" textLength="101.0" lengthAdjust="spacingAndGlyphs">Blue Sky</text>
<text x="1956.5" y="977.6" font-size="21.5" text-anchor="middle" fill="#ecebea" textLength="85.0" lengthAdjust="spacingAndGlyphs">Foliage</text>
<text x="2095.8" y="977.6" font-size="21.5" text-anchor="middle" fill="#ecebea" textLength="141.5" lengthAdjust="spacingAndGlyphs">Blue Flower</text>
<text x="2260.8" y="977.6" font-size="21.5" text-anchor="middle" fill="#ecebea" textLength="153.5" lengthAdjust="spacingAndGlyphs">Bluish Green</text>
<text x="2405.2" y="977.6" font-size="21.5" text-anchor="middle" fill="#ecebea" textLength="87.5" lengthAdjust="spacingAndGlyphs">Orange</text>
<text x="2473.5" y="977.6" font-size="21.5" fill="#ecebea" textLength="165.0" lengthAdjust="spacingAndGlyphs">Purplish Blue</text>
<rect x="491.5" y="988.6" width="2065.5" height="36.0" fill="#404040"/>
<text x="515.0" y="1015.2" font-size="23" font-weight="bold" fill="#f4f2f0" textLength="108.8" lengthAdjust="spacingAndGlyphs">x: CIE31</text>
<text x="747.0" y="1015.2" font-size="23" fill="#f2f0ee" textLength="86.0" lengthAdjust="spacingAndGlyphs">0.3124</text>
<text x="882.0" y="1015.2" font-size="23" fill="#f2f0ee" textLength="86.0" lengthAdjust="spacingAndGlyphs">0.3126</text>
<text x="1017.5" y="1015.2" font-size="23" fill="#f2f0ee" textLength="86.0" lengthAdjust="spacingAndGlyphs">0.3125</text>
<text x="1152.0" y="1015.2" font-size="23" fill="#f2f0ee" textLength="86.0" lengthAdjust="spacingAndGlyphs">0.3125</text>
<text x="1287.5" y="1015.2" font-size="23" fill="#f2f0ee" textLength="86.0" lengthAdjust="spacingAndGlyphs">0.3125</text>
<text x="1406.0" y="1015.2" font-size="23" fill="#f2f0ee" textLength="86.0" lengthAdjust="spacingAndGlyphs">0.2930</text>
<text x="1525.0" y="1015.2" font-size="23" fill="#f2f0ee" textLength="86.0" lengthAdjust="spacingAndGlyphs">0.4029</text>
<text x="1655.0" y="1015.2" font-size="23" fill="#f2f0ee" textLength="86.0" lengthAdjust="spacingAndGlyphs">0.3762</text>
<text x="1786.0" y="1015.2" font-size="23" fill="#f2f0ee" textLength="86.0" lengthAdjust="spacingAndGlyphs">0.2478</text>
<text x="1905.0" y="1015.2" font-size="23" fill="#f2f0ee" textLength="86.0" lengthAdjust="spacingAndGlyphs">0.3361</text>
<text x="2024.0" y="1015.2" font-size="23" fill="#f2f0ee" textLength="86.0" lengthAdjust="spacingAndGlyphs">0.2676</text>
<text x="2183.0" y="1015.2" font-size="23" fill="#f2f0ee" textLength="86.0" lengthAdjust="spacingAndGlyphs">0.2625</text>
<text x="2353.5" y="1015.2" font-size="23" fill="#f2f0ee" textLength="86.0" lengthAdjust="spacingAndGlyphs">0.5056</text>
<text x="2472.5" y="1015.2" font-size="23" fill="#f2f0ee" textLength="86.0" lengthAdjust="spacingAndGlyphs">0.2111</text>
<rect x="491.5" y="1024.3" width="2065.5" height="36.0" fill="#7f7f7f"/>
<text x="515.0" y="1050.9" font-size="23" font-weight="bold" fill="#f4f2f0" textLength="108.0" lengthAdjust="spacingAndGlyphs">y: CIE31</text>
<text x="747.0" y="1050.9" font-size="23" fill="#f2f0ee" textLength="86.0" lengthAdjust="spacingAndGlyphs">0.3273</text>
<text x="882.0" y="1050.9" font-size="23" fill="#f2f0ee" textLength="86.0" lengthAdjust="spacingAndGlyphs">0.3288</text>
<text x="1017.5" y="1050.9" font-size="23" fill="#f2f0ee" textLength="86.0" lengthAdjust="spacingAndGlyphs">0.3296</text>
<text x="1152.0" y="1050.9" font-size="23" fill="#f2f0ee" textLength="86.0" lengthAdjust="spacingAndGlyphs">0.3302</text>
<text x="1287.5" y="1050.9" font-size="23" fill="#f2f0ee" textLength="86.0" lengthAdjust="spacingAndGlyphs">0.3308</text>
<text x="1406.0" y="1050.9" font-size="23" fill="#f2f0ee" textLength="86.0" lengthAdjust="spacingAndGlyphs">0.3227</text>
<text x="1525.0" y="1050.9" font-size="23" fill="#f2f0ee" textLength="86.0" lengthAdjust="spacingAndGlyphs">0.3589</text>
<text x="1655.0" y="1050.9" font-size="23" fill="#f2f0ee" textLength="86.0" lengthAdjust="spacingAndGlyphs">0.3524</text>
<text x="1786.0" y="1050.9" font-size="23" fill="#f2f0ee" textLength="86.0" lengthAdjust="spacingAndGlyphs">0.2752</text>
<text x="1905.0" y="1050.9" font-size="23" fill="#f2f0ee" textLength="86.0" lengthAdjust="spacingAndGlyphs">0.4238</text>
<text x="2024.0" y="1050.9" font-size="23" fill="#f2f0ee" textLength="86.0" lengthAdjust="spacingAndGlyphs">0.2628</text>
<text x="2183.0" y="1050.9" font-size="23" fill="#f2f0ee" textLength="86.0" lengthAdjust="spacingAndGlyphs">0.3564</text>
<text x="2353.5" y="1050.9" font-size="23" fill="#f2f0ee" textLength="86.0" lengthAdjust="spacingAndGlyphs">0.3982</text>
<text x="2472.5" y="1050.9" font-size="23" fill="#f2f0ee" textLength="86.0" lengthAdjust="spacingAndGlyphs">0.2014</text>
<rect x="491.5" y="1060.1" width="2065.5" height="36.0" fill="#404040"/>
<text x="515.0" y="1086.7" font-size="23" font-weight="bold" fill="#f4f2f0" textLength="16.6" lengthAdjust="spacingAndGlyphs">Y</text>
<text x="747.0" y="1086.7" font-size="23" fill="#f2f0ee" textLength="118.2" lengthAdjust="spacingAndGlyphs">232.4769</text>
<text x="882.0" y="1086.7" font-size="23" fill="#f2f0ee" textLength="118.2" lengthAdjust="spacingAndGlyphs">185.5561</text>
<text x="1017.5" y="1086.7" font-size="23" fill="#f2f0ee" textLength="118.2" lengthAdjust="spacingAndGlyphs">150.8021</text>
<text x="1152.0" y="1086.7" font-size="23" fill="#f2f0ee" textLength="118.2" lengthAdjust="spacingAndGlyphs">117.3481</text>
<text x="1287.5" y="1086.7" font-size="23" fill="#f2f0ee" textLength="102.1" lengthAdjust="spacingAndGlyphs">82.2244</text>
<text x="1406.0" y="1086.7" font-size="23" fill="#f2f0ee" textLength="86.0" lengthAdjust="spacingAndGlyphs">0.2500</text>
<text x="1525.0" y="1086.7" font-size="23" fill="#f2f0ee" textLength="102.1" lengthAdjust="spacingAndGlyphs">22.9161</text>
<text x="1655.0" y="1086.7" font-size="23" fill="#f2f0ee" textLength="102.1" lengthAdjust="spacingAndGlyphs">81.9113</text>
<text x="1786.0" y="1086.7" font-size="23" fill="#f2f0ee" textLength="102.1" lengthAdjust="spacingAndGlyphs">45.5125</text>
<text x="1905.0" y="1086.7" font-size="23" fill="#f2f0ee" textLength="102.1" lengthAdjust="spacingAndGlyphs">30.9882</text>
<text x="2024.0" y="1086.7" font-size="23" fill="#f2f0ee" textLength="102.1" lengthAdjust="spacingAndGlyphs">55.8800</text>
<text x="2183.0" y="1086.7" font-size="23" fill="#f2f0ee" textLength="102.1" lengthAdjust="spacingAndGlyphs">99.9259</text>
<text x="2353.5" y="1086.7" font-size="23" fill="#f2f0ee" textLength="102.1" lengthAdjust="spacingAndGlyphs">66.8439</text>
<text x="2472.5" y="1086.7" font-size="23" fill="#f2f0ee" textLength="102.1" lengthAdjust="spacingAndGlyphs">27.8970</text>
<rect x="491.5" y="1095.8" width="2065.5" height="36.0" fill="#7f7f7f"/>
<text x="515.0" y="1122.4" font-size="23" font-weight="bold" fill="#f4f2f0" textLength="198.8" lengthAdjust="spacingAndGlyphs">Target x:CIE31</text>
<text x="747.0" y="1122.4" font-size="23" fill="#f2f0ee" textLength="86.0" lengthAdjust="spacingAndGlyphs">0.3127</text>
<text x="882.0" y="1122.4" font-size="23" fill="#f2f0ee" textLength="86.0" lengthAdjust="spacingAndGlyphs">0.3127</text>
<text x="1017.5" y="1122.4" font-size="23" fill="#f2f0ee" textLength="86.0" lengthAdjust="spacingAndGlyphs">0.3127</text>
<text x="1152.0" y="1122.4" font-size="23" fill="#f2f0ee" textLength="86.0" lengthAdjust="spacingAndGlyphs">0.3127</text>
<text x="1287.5" y="1122.4" font-size="23" fill="#f2f0ee" textLength="86.0" lengthAdjust="spacingAndGlyphs">0.3127</text>
<text x="1406.0" y="1122.4" font-size="23" fill="#f2f0ee" textLength="86.0" lengthAdjust="spacingAndGlyphs">0.3127</text>
<text x="1525.0" y="1122.4" font-size="23" fill="#f2f0ee" textLength="86.0" lengthAdjust="spacingAndGlyphs">0.4006</text>
<text x="1655.0" y="1122.4" font-size="23" fill="#f2f0ee" textLength="86.0" lengthAdjust="spacingAndGlyphs">0.3789</text>
<text x="1786.0" y="1122.4" font-size="23" fill="#f2f0ee" textLength="86.0" lengthAdjust="spacingAndGlyphs">0.2489</text>
<text x="1905.0" y="1122.4" font-size="23" fill="#f2f0ee" textLength="86.0" lengthAdjust="spacingAndGlyphs">0.3373</text>
<text x="2024.0" y="1122.4" font-size="23" fill="#f2f0ee" textLength="86.0" lengthAdjust="spacingAndGlyphs">0.2674</text>
<text x="2183.0" y="1122.4" font-size="23" fill="#f2f0ee" textLength="86.0" lengthAdjust="spacingAndGlyphs">0.2615</text>
<text x="2353.5" y="1122.4" font-size="23" fill="#f2f0ee" textLength="86.0" lengthAdjust="spacingAndGlyphs">0.5113</text>
<text x="2472.5" y="1122.4" font-size="23" fill="#f2f0ee" textLength="86.0" lengthAdjust="spacingAndGlyphs">0.2151</text>
<rect x="491.5" y="1131.6" width="2065.5" height="36.0" fill="#404040"/>
<text x="515.0" y="1158.2" font-size="23" font-weight="bold" fill="#f4f2f0" textLength="198.8" lengthAdjust="spacingAndGlyphs">Target y:CIE31</text>
<text x="747.0" y="1158.2" font-size="23" fill="#f2f0ee" textLength="86.0" lengthAdjust="spacingAndGlyphs">0.3290</text>
<text x="882.0" y="1158.2" font-size="23" fill="#f2f0ee" textLength="86.0" lengthAdjust="spacingAndGlyphs">0.3290</text>
<text x="1017.5" y="1158.2" font-size="23" fill="#f2f0ee" textLength="86.0" lengthAdjust="spacingAndGlyphs">0.3290</text>
<text x="1152.0" y="1158.2" font-size="23" fill="#f2f0ee" textLength="86.0" lengthAdjust="spacingAndGlyphs">0.3290</text>
<text x="1287.5" y="1158.2" font-size="23" fill="#f2f0ee" textLength="86.0" lengthAdjust="spacingAndGlyphs">0.3290</text>
<text x="1406.0" y="1158.2" font-size="23" fill="#f2f0ee" textLength="86.0" lengthAdjust="spacingAndGlyphs">0.3290</text>
<text x="1525.0" y="1158.2" font-size="23" fill="#f2f0ee" textLength="86.0" lengthAdjust="spacingAndGlyphs">0.3595</text>
<text x="1655.0" y="1158.2" font-size="23" fill="#f2f0ee" textLength="86.0" lengthAdjust="spacingAndGlyphs">0.3537</text>
<text x="1786.0" y="1158.2" font-size="23" fill="#f2f0ee" textLength="86.0" lengthAdjust="spacingAndGlyphs">0.2672</text>
<text x="1905.0" y="1158.2" font-size="23" fill="#f2f0ee" textLength="86.0" lengthAdjust="spacingAndGlyphs">0.4270</text>
<text x="2024.0" y="1158.2" font-size="23" fill="#f2f0ee" textLength="86.0" lengthAdjust="spacingAndGlyphs">0.2542</text>
<text x="2183.0" y="1158.2" font-size="23" fill="#f2f0ee" textLength="86.0" lengthAdjust="spacingAndGlyphs">0.3561</text>
<text x="2353.5" y="1158.2" font-size="23" fill="#f2f0ee" textLength="86.0" lengthAdjust="spacingAndGlyphs">0.4058</text>
<text x="2472.5" y="1158.2" font-size="23" fill="#f2f0ee" textLength="86.0" lengthAdjust="spacingAndGlyphs">0.1927</text>
<rect x="491.5" y="1167.3" width="2065.5" height="36.0" fill="#7f7f7f"/>
<text x="515.0" y="1193.9" font-size="23" font-weight="bold" fill="#f4f2f0" textLength="115.0" lengthAdjust="spacingAndGlyphs">Target Y</text>
<text x="747.0" y="1193.9" font-size="23" fill="#f2f0ee" textLength="118.2" lengthAdjust="spacingAndGlyphs">232.4769</text>
<text x="882.0" y="1193.9" font-size="23" fill="#f2f0ee" textLength="118.2" lengthAdjust="spacingAndGlyphs">183.9585</text>
<text x="1017.5" y="1193.9" font-size="23" fill="#f2f0ee" textLength="118.2" lengthAdjust="spacingAndGlyphs">148.2266</text>
<text x="1152.0" y="1193.9" font-size="23" fill="#f2f0ee" textLength="118.2" lengthAdjust="spacingAndGlyphs">114.1510</text>
<text x="1287.5" y="1193.9" font-size="23" fill="#f2f0ee" textLength="102.1" lengthAdjust="spacingAndGlyphs">79.4872</text>
<text x="1406.0" y="1193.9" font-size="23" fill="#f2f0ee" textLength="86.0" lengthAdjust="spacingAndGlyphs">0.0000</text>
<text x="1525.0" y="1193.9" font-size="23" fill="#f2f0ee" textLength="102.1" lengthAdjust="spacingAndGlyphs">22.9662</text>
<text x="1655.0" y="1193.9" font-size="23" fill="#f2f0ee" textLength="102.1" lengthAdjust="spacingAndGlyphs">79.5077</text>
<text x="1786.0" y="1193.9" font-size="23" fill="#f2f0ee" textLength="102.1" lengthAdjust="spacingAndGlyphs">43.8100</text>
<text x="1905.0" y="1193.9" font-size="23" fill="#f2f0ee" textLength="102.1" lengthAdjust="spacingAndGlyphs">30.5023</text>
<text x="2024.0" y="1193.9" font-size="23" fill="#f2f0ee" textLength="102.1" lengthAdjust="spacingAndGlyphs">53.7099</text>
<text x="2183.0" y="1193.9" font-size="23" fill="#f2f0ee" textLength="102.1" lengthAdjust="spacingAndGlyphs">96.8280</text>
<text x="2353.5" y="1193.9" font-size="23" fill="#f2f0ee" textLength="102.1" lengthAdjust="spacingAndGlyphs">65.9836</text>
<text x="2472.5" y="1193.9" font-size="23" fill="#f2f0ee" textLength="102.1" lengthAdjust="spacingAndGlyphs">27.3590</text>
<rect x="491.5" y="1203.0" width="2065.5" height="36.0" fill="#404040"/>
<text x="515.0" y="1229.6" font-size="23" font-weight="bold" fill="#f4f2f0" textLength="113.4" lengthAdjust="spacingAndGlyphs">ΔE 2000</text>
<text x="747.0" y="1229.6" font-size="23" fill="#f2f0ee" textLength="86.0" lengthAdjust="spacingAndGlyphs">1.2298</text>
<text x="882.0" y="1229.6" font-size="23" fill="#f2f0ee" textLength="86.0" lengthAdjust="spacingAndGlyphs">0.2317</text>
<text x="1017.5" y="1229.6" font-size="23" fill="#f2f0ee" textLength="86.0" lengthAdjust="spacingAndGlyphs">0.6273</text>
<text x="1152.0" y="1229.6" font-size="23" fill="#f2f0ee" textLength="86.0" lengthAdjust="spacingAndGlyphs">1.0839</text>
<text x="1287.5" y="1229.6" font-size="23" fill="#f2f0ee" textLength="86.0" lengthAdjust="spacingAndGlyphs">1.3663</text>
<text x="1406.0" y="1229.6" font-size="23" fill="#f2f0ee" textLength="86.0" lengthAdjust="spacingAndGlyphs">0.6427</text>
<text x="1525.0" y="1229.6" font-size="23" fill="#f2f0ee" textLength="86.0" lengthAdjust="spacingAndGlyphs">0.4844</text>
<text x="1655.0" y="1229.6" font-size="23" fill="#f2f0ee" textLength="86.0" lengthAdjust="spacingAndGlyphs">0.7577</text>
<text x="1786.0" y="1229.6" font-size="23" fill="#f2f0ee" textLength="86.0" lengthAdjust="spacingAndGlyphs">3.3124</text>
<text x="1905.0" y="1229.6" font-size="23" fill="#f2f0ee" textLength="86.0" lengthAdjust="spacingAndGlyphs">0.4240</text>
<text x="2024.0" y="1229.6" font-size="23" fill="#f2f0ee" textLength="86.0" lengthAdjust="spacingAndGlyphs">2.3948</text>
<text x="2183.0" y="1229.6" font-size="23" fill="#f2f0ee" textLength="86.0" lengthAdjust="spacingAndGlyphs">0.7157</text>
<text x="2353.5" y="1229.6" font-size="23" fill="#f2f0ee" textLength="86.0" lengthAdjust="spacingAndGlyphs">2.1113</text>
<text x="2472.5" y="1229.6" font-size="23" fill="#f2f0ee" textLength="86.0" lengthAdjust="spacingAndGlyphs">2.9072</text>
<rect x="491.5" y="1238.8" width="2065.5" height="36.0" fill="#7f7f7f"/>
<text x="515.0" y="1265.4" font-size="23" font-weight="bold" fill="#f4f2f0" textLength="90.0" lengthAdjust="spacingAndGlyphs">ΔE ITP</text>
<text x="747.0" y="1265.4" font-size="23" fill="#f2f0ee" textLength="86.0" lengthAdjust="spacingAndGlyphs">0.7178</text>
<text x="882.0" y="1265.4" font-size="23" fill="#f2f0ee" textLength="86.0" lengthAdjust="spacingAndGlyphs">0.6615</text>
<text x="1017.5" y="1265.4" font-size="23" fill="#f2f0ee" textLength="86.0" lengthAdjust="spacingAndGlyphs">1.3003</text>
<text x="1152.0" y="1265.4" font-size="23" fill="#f2f0ee" textLength="86.0" lengthAdjust="spacingAndGlyphs">2.0752</text>
<text x="1287.5" y="1265.4" font-size="23" fill="#f2f0ee" textLength="86.0" lengthAdjust="spacingAndGlyphs">2.5147</text>
<text x="1406.0" y="1265.4" font-size="23" fill="#f2f0ee" textLength="102.1" lengthAdjust="spacingAndGlyphs">65.1982</text>
<text x="1525.0" y="1265.4" font-size="23" fill="#f2f0ee" textLength="86.0" lengthAdjust="spacingAndGlyphs">1.4025</text>
<text x="1655.0" y="1265.4" font-size="23" fill="#f2f0ee" textLength="86.0" lengthAdjust="spacingAndGlyphs">2.5145</text>
<text x="1786.0" y="1265.4" font-size="23" fill="#f2f0ee" textLength="86.0" lengthAdjust="spacingAndGlyphs">4.4312</text>
<text x="1905.0" y="1265.4" font-size="23" fill="#f2f0ee" textLength="86.0" lengthAdjust="spacingAndGlyphs">1.5239</text>
<text x="2024.0" y="1265.4" font-size="23" fill="#f2f0ee" textLength="86.0" lengthAdjust="spacingAndGlyphs">4.6469</text>
<text x="2183.0" y="1265.4" font-size="23" fill="#f2f0ee" textLength="86.0" lengthAdjust="spacingAndGlyphs">2.3399</text>
<text x="2353.5" y="1265.4" font-size="23" fill="#f2f0ee" textLength="86.0" lengthAdjust="spacingAndGlyphs">6.1801</text>
<text x="2472.5" y="1265.4" font-size="23" fill="#f2f0ee" textLength="86.0" lengthAdjust="spacingAndGlyphs">6.7751</text>
</g>
<rect x="491.5" y="1274.8" width="2065.5" height="22.2" fill="#5c5c5c"/>
<rect x="524.9" y="1277" width="621" height="18" rx="9" fill="#454545"/>
<rect x="494" y="1276.5" width="25" height="19" rx="4" fill="#6c6c6c"/>
<polygon points="502.5,1286 511.5,1279.5 511.5,1292.5" fill="#3a3a3a"/>
<rect x="2530" y="1276.5" width="25" height="19" rx="4" fill="#6c6c6c"/>
<polygon points="2545,1286 2537,1279.5 2537,1292.5" fill="#3a3a3a"/>
<rect x="2557.0" y="949.0" width="3.0" height="347.8" fill="#000"/>
</svg></body></html>
